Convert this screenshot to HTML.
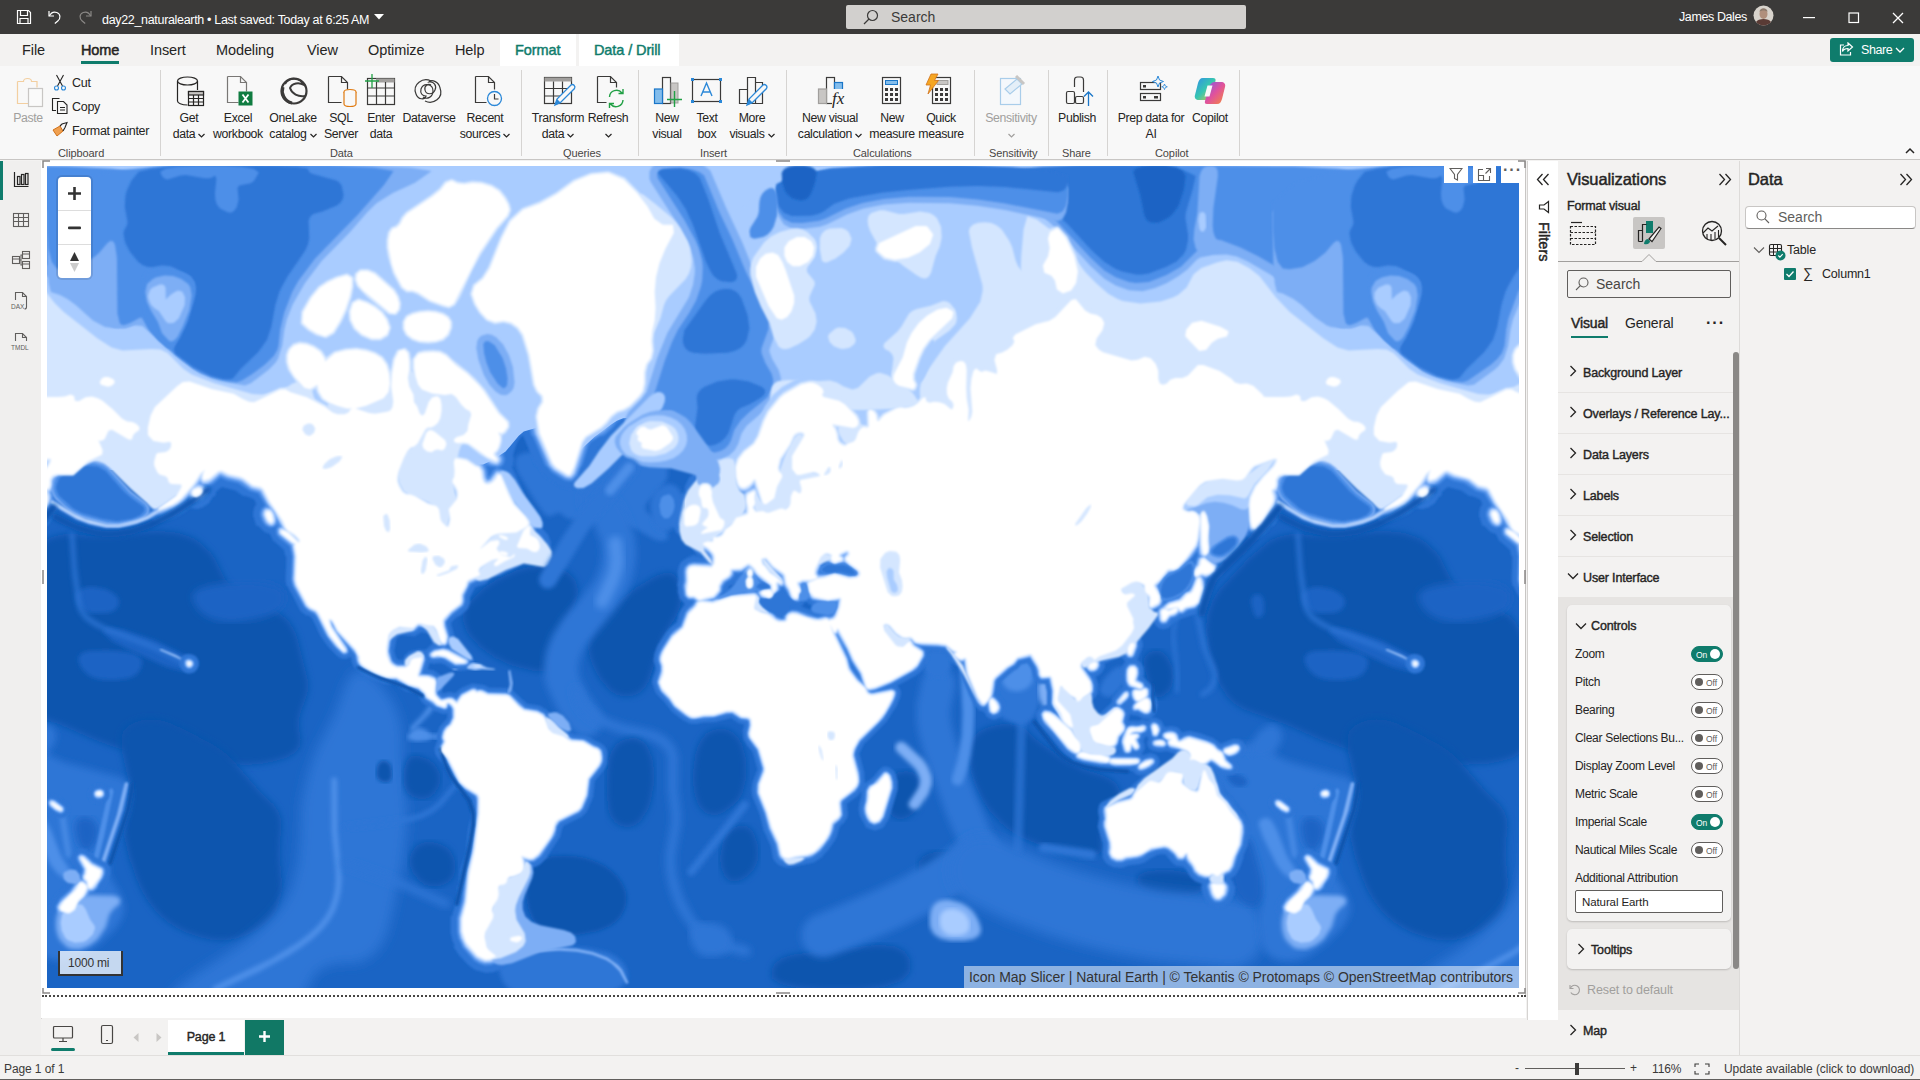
<!DOCTYPE html>
<html lang="en">
<head>
<meta charset="utf-8">
<title>day22_naturalearth</title>
<style>
*{box-sizing:border-box;margin:0;padding:0}
html,body{width:1920px;height:1080px;overflow:hidden;background:#f3f2f1;font-family:"Liberation Sans",sans-serif;color:#252423}
.abs{position:absolute}
#titlebar{position:absolute;left:0;top:0;width:1920px;height:34px;background:#3b3a39;color:#fff}
#titlebar .t{position:absolute;top:13px;left:102px;font-size:12.5px;letter-spacing:-0.32px;white-space:nowrap}
#searchbox{position:absolute;left:846px;top:5px;width:400px;height:24px;background:#d2d0ce;border-radius:2px;color:#3b3a39}
#searchbox span{position:absolute;left:45px;top:4px;font-size:14px}
#tabs{position:absolute;left:0;top:34px;width:1920px;height:32px;background:#f3f2f1}
#tabs .tab{position:absolute;top:8px;font-size:14.5px;color:#252423;white-space:nowrap;letter-spacing:-0.1px}
#tabs .ctx{color:#0f7c6c;font-weight:normal;-webkit-text-stroke:0.45px #0f7c6c;font-size:14.5px}
#ribbon{position:absolute;left:0;top:66px;width:1920px;height:94px;background:#f8f8f8;border-bottom:1px solid #c8c6c4}
.rb{position:absolute;font-size:12.3px;color:#252423;text-align:center;white-space:nowrap;line-height:16px;letter-spacing:-0.35px;margin-top:1px}
.grp{position:absolute;top:147px;font-size:11px;color:#484644;white-space:nowrap;letter-spacing:-0.1px}
.sep{position:absolute;top:70px;width:1px;height:86px;background:#d6d4d2}
.sm{position:absolute;font-size:12.5px;color:#252423;white-space:nowrap;letter-spacing:-0.3px;margin-top:1px}
#leftnav{position:absolute;left:0;top:161px;width:41px;height:896px;background:#f0efee}
#canvas{position:absolute;left:41px;top:161px;width:1485px;height:857px;background:#fff}
#pagebar{position:absolute;left:41px;top:1019px;width:1485px;height:37px;background:#f3f2f1}
#status{position:absolute;left:0;top:1055px;width:1920px;height:25px;padding-top:1px;background:#f3f2f1;border-top:1px solid #e1dfdd;font-size:12px;color:#3b3a39}
#filters{position:absolute;left:1527px;top:161px;width:31px;height:859px;background:#fff;border-left:1px solid #d6d4d2}
#viz{position:absolute;left:1558px;top:161px;width:182px;height:896px;background:#f3f2f1;border-right:1px solid #dddbd9}
#data{position:absolute;left:1740px;top:161px;width:180px;height:896px;background:#f3f2f1}
.ph{position:absolute;font-size:16.5px;font-weight:normal;-webkit-text-stroke:0.45px #252423;color:#252423;letter-spacing:-0.1px}
.card{position:absolute;left:0;width:175px;height:41px;border-bottom:1px solid #e6e4e2;font-size:12.5px;font-weight:normal;-webkit-text-stroke:0.4px #252423;color:#252423;letter-spacing:-0.15px}
.card span{position:absolute;left:25px;top:14px;white-space:nowrap}
.card svg{position:absolute;left:11px;top:13px}
.row{position:absolute;left:9px;width:150px;font-size:12px;color:#252423;white-space:nowrap;letter-spacing:-0.3px}
.tog{position:absolute;left:124px;width:32px;height:16px;border-radius:8px;font-size:8.5px}
.tog.off{border:1px solid #605e5c;background:#fff;color:#605e5c}
.tog.on{background:#0f7c6c;color:#fff;border:1px solid #0f7c6c}
.tog.off i{position:absolute;left:3px;top:3px;width:8px;height:8px;border-radius:50%;background:#605e5c}
.tog.off b{position:absolute;left:14px;top:2.5px;font-weight:normal}
.tog.on i{position:absolute;right:2px;top:2px;width:10px;height:10px;border-radius:50%;background:#fff}
.tog.on b{position:absolute;left:4px;top:2.5px;font-weight:normal}
</style>
</head>
<body>
<!-- TITLE BAR -->
<div id="titlebar">
 <svg class="abs" style="left:15px;top:8px" width="18" height="18" viewBox="0 0 18 18" fill="none" stroke="#fff" stroke-width="1.2"><path d="M2.5 2.5h11l2 2v11h-13z"/><path d="M5.5 2.5v5h7v-5M5 15.500v-5h8v5"/></svg>
 <svg class="abs" style="left:47px;top:9px" width="16" height="16" viewBox="0 0 16 16" fill="none" stroke="#fff" stroke-width="1.2"><path d="M2 2v5h5"/><path d="M2.300 7c1.500-3 4.500-4.500 7.500-3.500 4 1.500 4 6 1 8.500l-3 2.500"/></svg>
 <svg class="abs" style="left:77px;top:9px" width="16" height="16" viewBox="0 0 16 16" fill="none" stroke="#8a8886" stroke-width="1.2"><path d="M14 2v5h-5"/><path d="M13.700 7c-1.500-3-4.500-4.500-7.500-3.500-4 1.500-4 6-1 8.500l3 2.500"/></svg>
 <div class="t">day22_naturalearth • Last saved: Today at 6:25 AM</div>
 <svg class="abs" style="left:374px;top:14px" width="10" height="6" viewBox="0 0 10 6"><path d="M0 0h10l-5 5.500z" fill="#fff"/></svg>
 <div id="searchbox"><svg class="abs" style="left:17px;top:4px" width="16" height="16" viewBox="0 0 16 16" fill="none" stroke="#3b3a39" stroke-width="1.200"><circle cx="9.500" cy="6.500" r="5"/><path d="M6 10l-5 5"/></svg><span>Search</span></div>
 <div class="abs" style="left:1679px;top:10px;font-size:12.5px;white-space:nowrap;letter-spacing:-0.4px">James Dales</div>
 <svg class="abs" style="left:1753px;top:5px" width="21" height="21" viewBox="0 0 21 21"><circle cx="10.500" cy="10.500" r="10" fill="#d8d3cc"/><ellipse cx="10.500" cy="9" rx="4" ry="5" fill="#b08f7c"/><path d="M3 17c2-4 13-4 15 0a10 10 0 0 1-15 0z" fill="#5a3b35"/><path d="M6.500 7c0-5 8-5 8 0-2-2-6-2-8 0z" fill="#8d7a6c"/></svg>
 <svg class="abs" style="left:1803px;top:17px" width="12" height="2"><rect width="12" height="1.200" fill="#fff"/></svg>
 <svg class="abs" style="left:1848px;top:12px" width="12" height="12" viewBox="0 0 12 12" fill="none" stroke="#fff" stroke-width="1.200"><rect x="1" y="1" width="9.500" height="9.500"/></svg>
 <svg class="abs" style="left:1892px;top:12px" width="12" height="12" viewBox="0 0 12 12" fill="none" stroke="#fff" stroke-width="1.300"><path d="M1 1l10 10M11 1l-10 10"/></svg>
</div>
<!-- TABS -->
<div id="tabs">
 <div class="tab" style="left:22px">File</div>
 <div class="tab" style="left:81px;font-weight:normal;-webkit-text-stroke:0.5px #252423;font-size:14.5px">Home</div>
 <div class="abs" style="left:81px;top:27px;width:38px;height:3px;background:#0f7c6c"></div>
 <div class="tab" style="left:150px">Insert</div>
 <div class="tab" style="left:216px">Modeling</div>
 <div class="tab" style="left:307px">View</div>
 <div class="tab" style="left:368px">Optimize</div>
 <div class="tab" style="left:455px">Help</div>
 <div class="abs" style="left:500px;top:0;width:76px;height:32px;background:#fff"></div>
 <div class="abs" style="left:579px;top:0;width:100px;height:32px;background:#fff"></div>
 <div class="tab ctx" style="left:515px">Format</div>
 <div class="tab ctx" style="left:594px">Data / Drill</div>
 <div class="abs" style="left:1830px;top:4px;width:84px;height:24px;background:#0f7c6c;border-radius:3px"></div>
 <svg class="abs" style="left:1838px;top:8px" width="16" height="15" viewBox="0 0 16 15" fill="none" stroke="#fff" stroke-width="1.200"><path d="M6 3H2.500v10h10v-3"/><path d="M10 1l4.500 4-4.500 4V6.500c-3 0-4.500 1-5.500 3 0-3.500 2-6 5.500-6z"/></svg>
 <div class="abs" style="left:1861px;top:9px;font-size:12.5px;color:#fff;letter-spacing:-0.4px">Share</div>
 <svg class="abs" style="left:1895px;top:13px" width="10" height="7" viewBox="0 0 10 7" fill="none" stroke="#fff" stroke-width="1.300"><path d="M1 1l4 4 4-4"/></svg>
</div>
<!-- RIBBON -->
<div id="ribbon"></div>
<!-- clipboard -->
<svg class="abs" style="left:15px;top:75px" width="30" height="36" viewBox="0 0 30 36" fill="none"><path d="M2.500 6.500h6c0-4 8-4 8 0h5.500v6M2.500 6.500v22h11" stroke="#f3cfa0" stroke-width="1.200"/><rect x="13.500" y="13.500" width="14" height="18" stroke="#c8c6c4" stroke-width="1.200" fill="#fafafa"/></svg>
<div class="rb" style="left:8px;top:109px;width:40px;color:#a19f9d">Paste</div>
<svg class="abs" style="left:53px;top:74px" width="14" height="17" viewBox="0 0 14 17" fill="none"><path d="M3.500 1l6 11M10.500 1l-6 11" stroke="#252423" stroke-width="1.100"/><circle cx="3.500" cy="14" r="2" stroke="#2b88d8" stroke-width="1.100"/><circle cx="10.500" cy="14" r="2" stroke="#2b88d8" stroke-width="1.100"/></svg>
<div class="sm" style="left:72px;top:75px">Cut</div>
<svg class="abs" style="left:51px;top:97px" width="18" height="18" viewBox="0 0 18 18" fill="none" stroke="#252423" stroke-width="1.100"><path d="M5 13.500H1.500v-12h7"/><path d="M6.500 4.500h6l3.500 3.500v8.500h-9.500z"/><path d="M9 10.500h5M9 13h5"/></svg>
<div class="sm" style="left:72px;top:99px">Copy</div>
<svg class="abs" style="left:51px;top:121px" width="18" height="18" viewBox="0 0 18 18" fill="none"><path d="M2 9l7-4 3 5-6 5z" fill="#f0a050" stroke="#d0711a" stroke-width="1"/><path d="M9 5l2-2 5-1.500-2 5-2 3.500" stroke="#252423" stroke-width="1.100"/></svg>
<div class="sm" style="left:72px;top:123px">Format painter</div>
<div class="grp" style="left:58px">Clipboard</div>
<div class="sep" style="left:160px"></div>
<!-- data group -->
<svg class="abs" style="left:175px;top:75px" width="32" height="36" viewBox="0 0 32 36" fill="none" stroke="#252423" stroke-width="1.200"><ellipse cx="12.500" cy="6" rx="10" ry="4"/><path d="M2.500 6v20c0 2 4 4 10 4M22.500 6v9"/><rect x="13.500" y="16.500" width="15" height="14" fill="#f8f8f8"/><rect x="13.500" y="16.500" width="15" height="3.500" fill="#c8c6c4"/><path d="M13.500 23.500h15M13.500 27h15M18.500 20v10.500M23.500 20v10.500"/></svg>
<div class="rb" style="left:159px;top:109px;width:60px">Get<br>data <svg width="7" height="5" viewBox="0 0 7 5" fill="none" stroke="#252423" stroke-width="1.200"><path d="M.500 1l3 3 3-3"/></svg></div>
<svg class="abs" style="left:226px;top:75px" width="34" height="36" viewBox="0 0 34 36" fill="none"><path d="M1.500 1.500h13l6 6v9M1.500 1.500v26h11" stroke="#797775" stroke-width="1.200"/><path d="M14.500 1.500v6h6" stroke="#797775" stroke-width="1.200"/><rect x="12.500" y="16.500" width="14" height="14" fill="#107c41"/><path d="M16.500 19.500l6 8M22.500 19.500l-6 8" stroke="#fff" stroke-width="1.800"/></svg>
<div class="rb" style="left:208px;top:109px;width:60px">Excel<br>workbook</div>
<svg class="abs" style="left:279px;top:75px" width="30" height="32" viewBox="0 0 30 32" fill="none"><circle cx="15" cy="16" r="12.500" stroke="#3b3a39" stroke-width="2.200"/><path d="M6 9c4-7 15-7 19 1-5-3-12-2-14 3 2 6 8 9 15 8" stroke="#3b3a39" stroke-width="2"/><path d="M4 12c-2 6 1 14 9 16" stroke="#3b3a39" stroke-width="3"/></svg>
<div class="rb" style="left:263px;top:109px;width:60px">OneLake<br>catalog <svg width="7" height="5" viewBox="0 0 7 5" fill="none" stroke="#252423" stroke-width="1.200"><path d="M.500 1l3 3 3-3"/></svg></div>
<svg class="abs" style="left:327px;top:75px" width="32" height="36" viewBox="0 0 32 36" fill="none"><path d="M1.500 1.500h13l6 6v7M1.500 1.500v26h13M14.500 1.500v6h6" stroke="#3b3a39" stroke-width="1.200"/><ellipse cx="23" cy="17" rx="6" ry="2.500" stroke="#e07a10" stroke-width="1.200" fill="#f8f8f8"/><path d="M17 17v12c0 1.500 2.500 2.500 6 2.500s6-1 6-2.500V17" stroke="#e07a10" stroke-width="1.200" fill="#f8f8f8"/></svg>
<div class="rb" style="left:311px;top:109px;width:60px">SQL<br>Server</div>
<svg class="abs" style="left:364px;top:73px" width="34" height="38" viewBox="0 0 34 38" fill="none"><rect x="3.500" y="5.500" width="27" height="26" stroke="#3b3a39" stroke-width="1.200"/><rect x="12" y="5.500" width="18.500" height="4" fill="#a19f9d"/><path d="M3.500 15h27M3.500 23h27M12.500 9v22M21.500 9v22" stroke="#3b3a39" stroke-width="1.200"/><path d="M8 1v14M1 8h14" stroke="#21a045" stroke-width="1.300"/></svg>
<div class="rb" style="left:351px;top:109px;width:60px">Enter<br>data</div>
<svg class="abs" style="left:412px;top:77px" width="32" height="28" viewBox="0 0 32 28" fill="none" stroke="#3b3a39" stroke-width="1.200"><path d="M19 4c-8-4-19 3-15 13 2 6 9 6 10 2-4 0-6-3-5-7 2-6 12-6 12 2 0 6-6 9-10 6"/><path d="M13 24c8 4 19-3 15-13-1-6-8-9-11-6 5-1 8 4 6 8-2 5-9 5-10 0-1-4 3-7 6-5"/></svg>
<div class="rb" style="left:399px;top:109px;width:60px">Dataverse</div>
<svg class="abs" style="left:474px;top:75px" width="32" height="36" viewBox="0 0 32 36" fill="none"><path d="M1.500 1.500h13l6 6v7M1.500 1.500v26h11M14.500 1.500v6h6" stroke="#3b3a39" stroke-width="1.200"/><circle cx="20.500" cy="23.500" r="7" stroke="#2b88d8" stroke-width="1.300" fill="#f8f8f8"/><path d="M20.500 19v5h4" stroke="#3b3a39" stroke-width="1.200"/></svg>
<div class="rb" style="left:455px;top:109px;width:60px">Recent<br>sources <svg width="7" height="5" viewBox="0 0 7 5" fill="none" stroke="#252423" stroke-width="1.200"><path d="M.500 1l3 3 3-3"/></svg></div>
<div class="grp" style="left:330px">Data</div>
<div class="sep" style="left:521px"></div>
<!-- queries -->
<svg class="abs" style="left:543px;top:75px" width="34" height="36" viewBox="0 0 34 36" fill="none"><rect x="1.500" y="2.500" width="27" height="26" stroke="#3b3a39" stroke-width="1.200"/><rect x="1.500" y="2.500" width="27" height="4" fill="#a19f9d"/><path d="M1.500 13.500h27M1.500 21h16M10.500 6.500v22M19.500 6.500v14" stroke="#3b3a39" stroke-width="1.200"/><path d="M12 30l2-6 14-14c2-1.500 5 1 3.500 3.500l-14 14z" fill="#f8f8f8" stroke="#2b88d8" stroke-width="1.300"/><path d="M12 30l2-6 4 4z" fill="#2b88d8"/></svg>
<div class="rb" style="left:527px;top:109px;width:62px">Transform<br>data <svg width="7" height="5" viewBox="0 0 7 5" fill="none" stroke="#252423" stroke-width="1.200"><path d="M.500 1l3 3 3-3"/></svg></div>
<svg class="abs" style="left:596px;top:75px" width="32" height="36" viewBox="0 0 32 36" fill="none"><path d="M1.500 1.500h13l6 6v5M1.500 1.500v26h9M14.500 1.500v6h6" stroke="#3b3a39" stroke-width="1.200"/><path d="M13.500 22a7 7 0 0 1 12.500-4M27 14v4.500h-4.500M27 25a7 7 0 0 1-12.500 4M13.500 33v-4.500h4.500" stroke="#21a045" stroke-width="1.400"/></svg>
<div class="rb" style="left:578px;top:109px;width:60px">Refresh<br><svg width="7" height="5" viewBox="0 0 7 5" fill="none" stroke="#252423" stroke-width="1.200"><path d="M.500 1l3 3 3-3"/></svg></div>
<div class="grp" style="left:563px">Queries</div>
<div class="sep" style="left:638px"></div>
<!-- insert -->
<svg class="abs" style="left:652px;top:75px" width="32" height="36" viewBox="0 0 32 36" fill="none"><rect x="10.500" y="2.500" width="8" height="26" stroke="#3b3a39" stroke-width="1.200" fill="#f8f8f8"/><rect x="2.500" y="14" width="8" height="14.500" fill="#83bdec" stroke="#1a76c8" stroke-width="1.200"/><rect x="19" y="8" width="7" height="20" fill="#c8c6c4" stroke="#a19f9d"/><path d="M22.500 16v16M15 24.500h15" stroke="#21a045" stroke-width="1.400"/></svg>
<div class="rb" style="left:637px;top:109px;width:60px">New<br>visual</div>
<svg class="abs" style="left:690px;top:76px" width="34" height="32" viewBox="0 0 34 32" fill="none"><rect x="2.500" y="3.500" width="28" height="22" stroke="#3b3a39" stroke-width="1.200"/><path d="M11 20l5.500-13 5.500 13M13 16h7" stroke="#2b88d8" stroke-width="1.400"/><g fill="#2b88d8"><rect x="1" y="2" width="3" height="3"/><rect x="29" y="2" width="3" height="3"/><rect x="1" y="24" width="3" height="3"/><rect x="29" y="24" width="3" height="3"/></g></svg>
<div class="rb" style="left:677px;top:109px;width:60px">Text<br>box</div>
<svg class="abs" style="left:737px;top:75px" width="34" height="36" viewBox="0 0 34 36" fill="none"><path d="M2.500 28.500v-14h8v-12h8v5h7v21z M10.500 14.500v14M18.500 7.500v21" stroke="#3b3a39" stroke-width="1.200"/><path d="M10 30l2-6 14-14c2-1.500 5 1 3.500 3.500l-14 14z" fill="#f8f8f8" stroke="#2b88d8" stroke-width="1.300"/><path d="M10 30l2-6 4 4z" fill="#2b88d8"/></svg>
<div class="rb" style="left:722px;top:109px;width:60px">More<br>visuals <svg width="7" height="5" viewBox="0 0 7 5" fill="none" stroke="#252423" stroke-width="1.200"><path d="M.500 1l3 3 3-3"/></svg></div>
<div class="grp" style="left:700px">Insert</div>
<div class="sep" style="left:786px"></div>
<!-- calculations -->
<svg class="abs" style="left:815px;top:75px" width="34" height="36" viewBox="0 0 34 36" fill="none"><rect x="11.500" y="2.500" width="8" height="26" stroke="#3b3a39" stroke-width="1.200" fill="#f8f8f8"/><rect x="3.500" y="14" width="8" height="14.500" fill="#c8c6c4" stroke="#a19f9d" stroke-width="1.200"/><rect x="19.500" y="7.500" width="8" height="12" fill="#83bdec" stroke="#1a76c8" stroke-width="1.200"/><rect x="17" y="14" width="16" height="18" fill="#f8f8f8"/><text x="17" y="29" font-family="Liberation Serif,serif" font-style="italic" font-size="17" fill="#252423">fx</text></svg>
<div class="rb" style="left:790px;top:109px;width:80px">New visual<br>calculation <svg width="7" height="5" viewBox="0 0 7 5" fill="none" stroke="#252423" stroke-width="1.200"><path d="M.500 1l3 3 3-3"/></svg></div>
<svg class="abs" style="left:880px;top:75px" width="24" height="36" viewBox="0 0 24 36" fill="none"><rect x="2.500" y="2.500" width="18" height="26" stroke="#3b3a39" stroke-width="1.200"/><rect x="5.500" y="5.500" width="12" height="4" fill="#83bdec" stroke="#1a76c8"/><g fill="#3b3a39"><rect x="5" y="13" width="3" height="3"/><rect x="10" y="13" width="3" height="3"/><rect x="15" y="13" width="3" height="3"/><rect x="5" y="18" width="3" height="3"/><rect x="10" y="18" width="3" height="3"/><rect x="15" y="18" width="3" height="3"/><rect x="5" y="23" width="3" height="3"/><rect x="10" y="23" width="3" height="3"/><rect x="15" y="23" width="3" height="3"/></g></svg>
<div class="rb" style="left:862px;top:109px;width:60px">New<br>measure</div>
<svg class="abs" style="left:923px;top:73px" width="32" height="38" viewBox="0 0 32 38" fill="none"><rect x="9.500" y="4.500" width="18" height="26" stroke="#3b3a39" stroke-width="1.200"/><rect x="14" y="7.500" width="11" height="4" fill="#c8c6c4" stroke="#a19f9d"/><g fill="#3b3a39"><rect x="12" y="15" width="3" height="3"/><rect x="17" y="15" width="3" height="3"/><rect x="22" y="15" width="3" height="3"/><rect x="12" y="20" width="3" height="3"/><rect x="17" y="20" width="3" height="3"/><rect x="22" y="20" width="3" height="3"/><rect x="12" y="25" width="3" height="3"/><rect x="17" y="25" width="3" height="3"/><rect x="22" y="25" width="3" height="3"/></g><path d="M8 1h7l-3.500 6.500h4L5 21l2.500-9H3z" fill="#f5a623" stroke="#d0711a" stroke-width=".8"/></svg>
<div class="rb" style="left:911px;top:109px;width:60px">Quick<br>measure</div>
<div class="grp" style="left:853px">Calculations</div>
<div class="sep" style="left:974px"></div>
<!-- sensitivity -->
<svg class="abs" style="left:997px;top:75px" width="30" height="34" viewBox="0 0 30 34" fill="none"><rect x="3.500" y="3.500" width="20" height="26" stroke="#a9cdea" stroke-width="1.200" fill="#f4f8fc"/><path d="M8 14l12-10 5 5-12 10z" stroke="#a9cdea" stroke-width="1.200" fill="#e4eff8"/><path d="M19 1l8 8" stroke="#c8c6c4" stroke-width="3"/></svg>
<div class="rb" style="left:981px;top:109px;width:60px;color:#a19f9d">Sensitivity<br><svg width="7" height="5" viewBox="0 0 7 5" fill="none" stroke="#a19f9d" stroke-width="1.200"><path d="M.500 1l3 3 3-3"/></svg></div>
<div class="grp" style="left:989px">Sensitivity</div>
<div class="sep" style="left:1048px"></div>
<!-- share -->
<svg class="abs" style="left:1064px;top:75px" width="32" height="34" viewBox="0 0 32 34" fill="none" stroke="#3b3a39" stroke-width="1.200"><path d="M10.500 12v-7c0-2 1-3 3-3h3c2 0 3 1 3 3v12"/><rect x="2.500" y="16.500" width="8" height="12" rx="1.500"/><rect x="11.500" y="21.500" width="8" height="7" rx="1.500"/><path d="M24.500 31V17M20 21.500l4.500-4.500 4.500 4.500" stroke="#1a76c8" stroke-width="1.300"/></svg>
<div class="rb" style="left:1047px;top:109px;width:60px">Publish</div>
<div class="grp" style="left:1062px">Share</div>
<div class="sep" style="left:1107px"></div>
<!-- copilot -->
<svg class="abs" style="left:1138px;top:75px" width="30" height="30" viewBox="0 0 30 30" fill="none"><rect x="2.500" y="7.500" width="20" height="7" stroke="#3b3a39" stroke-width="1.200"/><rect x="2.500" y="18.500" width="20" height="7" stroke="#3b3a39" stroke-width="1.200"/><rect x="5" y="10" width="3" height="2.500" fill="#3b3a39"/><rect x="5" y="21" width="3" height="2.500" fill="#3b3a39"/><rect x="16" y="21" width="4" height="2.500" fill="#3b3a39"/><path d="M20 1l1.500 4 4 1.500-4 1.500-1.500 4-1.500-4-4-1.500 4-1.500z" fill="#f8f8f8" stroke="#2b88d8" stroke-width="1"/><path d="M26.500 9l.8 2 2 .8-2 .8-.8 2-.8-2-2-.8 2-.8z" stroke="#2b88d8" stroke-width=".8"/></svg>
<div class="rb" style="left:1101px;top:109px;width:100px">Prep data for<br>AI</div>
<svg class="abs" style="left:1193px;top:76px" width="34" height="30" viewBox="0 0 34 30"><defs><linearGradient id="cg1" x1="0" y1="0" x2="1" y2="1"><stop offset="0" stop-color="#2f8fe8"/><stop offset=".5" stop-color="#37c6b0"/><stop offset="1" stop-color="#f4c531"/></linearGradient><linearGradient id="cg2" x1="0" y1="0" x2="1" y2="1"><stop offset="0" stop-color="#7a5bea"/><stop offset=".5" stop-color="#e0529c"/><stop offset="1" stop-color="#f58a3a"/></linearGradient></defs><path d="M10 2h10c2 0 3 1 2.500 3l-4 14c-1 3-3 5-6 5H6c-3 0-5-2-4-5L5 7c1-3 2-5 5-5z" fill="url(#cg1)"/><path d="M14 28h10c3 0 4-2 5-5l3-12c1-3-1-5-4-5h-6c-3 0-5 2-6 5l-4 14c-.5 2 0 3 2 3z" fill="url(#cg2)"/><path d="M14.500 9.500h5l-3 11h-5z" fill="#f8f8f8"/></svg>
<div class="rb" style="left:1180px;top:109px;width:60px">Copilot</div>
<div class="grp" style="left:1155px">Copilot</div>
<div class="sep" style="left:1239px"></div>
<svg class="abs" style="left:1905px;top:147px" width="10" height="7" viewBox="0 0 10 7" fill="none" stroke="#252423" stroke-width="1.500"><path d="M1 6l4-4 4 4"/></svg>
<!-- LEFT NAV -->
<div id="leftnav"></div>
<div class="abs" style="left:41px;top:161px;width:1px;height:896px;background:#d6d4d2"></div>
<div class="abs" style="left:0;top:161px;width:3px;height:39px;background:#0f7c6c"></div>
<svg class="abs" style="left:12px;top:171px" width="18" height="18" viewBox="0 0 18 18" fill="none" stroke="#252423" stroke-width="1.200"><path d="M2.500 1v14.500h14"/><rect x="5.500" y="5.500" width="2.500" height="8"/><rect x="9.500" y="3.500" width="2.500" height="10"/><rect x="13.500" y="2.500" width="2.500" height="11"/></svg>
<svg class="abs" style="left:12px;top:211px" width="18" height="18" viewBox="0 0 18 18" fill="none" stroke="#605e5c" stroke-width="1.100"><rect x="1.500" y="2.500" width="15" height="13"/><path d="M1.500 6.500h15M1.500 10.500h15M6.500 2.500v13M11.500 2.500v13"/></svg>
<svg class="abs" style="left:11px;top:250px" width="20" height="20" viewBox="0 0 20 20" fill="none" stroke="#605e5c" stroke-width="1.100"><rect x="1.500" y="6.500" width="7" height="7"/><rect x="11.500" y="1.500" width="7" height="7"/><rect x="11.500" y="11.500" width="7" height="7"/><path d="M1.500 9h7M11.500 4h7M11.500 14h7M8.500 10h1.500V5h1.500M10 10v5h1.500"/></svg>
<svg class="abs" style="left:10px;top:290px" width="22" height="22" viewBox="0 0 22 22" fill="none"><path d="M5.500 10V2.500h7l4 4V17c0 1-1 2-2 2" stroke="#605e5c" stroke-width="1.100"/><path d="M12.500 2.500v4h4" stroke="#605e5c" stroke-width="1.100"/><text x="1" y="19" font-family="Liberation Sans,sans-serif" font-size="6.500" fill="#605e5c">DAX</text></svg>
<svg class="abs" style="left:10px;top:331px" width="22" height="22" viewBox="0 0 22 22" fill="none"><path d="M5.500 10V2.500h7l4 4V10" stroke="#605e5c" stroke-width="1.100"/><path d="M12.500 2.500v4h4" stroke="#605e5c" stroke-width="1.100"/><text x="1" y="19" font-family="Liberation Sans,sans-serif" font-size="6.500" fill="#605e5c">TMDL</text></svg>
<!-- CANVAS -->
<div id="canvas"></div>
<div class="abs" style="left:1525px;top:161px;width:1px;height:835px;background:#c8c6c4"></div>
<div class="abs" style="left:42px;top:995px;width:1484px;height:0;border-top:2px dotted #484644"></div>
<!-- visual frame handles -->
<svg class="abs" style="left:42px;top:160px" width="1484" height="836" viewBox="0 0 1484 836" fill="none" stroke="#8a8886" stroke-width="1.500"><path d="M1 8V1h7M1476 1h7v7M1 828v5h7M1476 833h7v-5M734 1h14M734 833h14M1 410v14M1483 410v14"/></svg>
<svg class="abs" style="left:47px;top:166px" width="1472" height="822" viewBox="47 166 1472 822">
<defs><filter id="b1" x="-5%" y="-5%" width="110%" height="110%"><feGaussianBlur stdDeviation="0.8"/></filter><filter id="b2" x="-5%" y="-5%" width="110%" height="110%"><feGaussianBlur stdDeviation="2"/></filter><filter id="b3" x="-5%" y="-5%" width="110%" height="110%"><feGaussianBlur stdDeviation="3.5"/></filter><filter id="b4" x="-5%" y="-5%" width="110%" height="110%"><feGaussianBlur stdDeviation="6"/></filter><filter id="b5" x="-5%" y="-5%" width="110%" height="110%"><feGaussianBlur stdDeviation="10"/></filter></defs>
<rect x="47" y="166" width="1472" height="822" fill="#1a64c4"/>
<path d="M17.9,709.4 60.4,724.8 93.4,739.2 114.5,747.3 147.1,756.3 172.0,760.2 216.7,764.1 249.2,764.7 263.3,763.4 275.8,761.1 286.9,757.6 294.8,752.9 299.5,746.9 301.0,739.7 299.3,731.2 298.8,723.0 299.7,715.3 307.3,694.2 308.2,687.2 307.8,680.2 297.1,637.0 294.6,630.8 288.2,620.3 277.5,611.8 253.9,601.7 234.1,589.6 224.8,579.0 215.4,559.2 211.1,553.1 200.1,542.5 193.5,538.3 178.4,532.8 160.3,531.0 149.6,531.3 112.4,535.6 86.8,535.5 74.1,534.1 62.6,534.6 52.4,536.8 43.4,540.8 22.3,558.2 7.0,574.9 7.0,702.5ZM1212.3,600.5 1207.5,614.1 1205.8,629.4 1207.5,646.1 1211.0,662.1 1218.8,683.3 1226.0,695.1 1230.3,700.3 1236.2,705.1 1243.9,709.4 1286.5,724.8 1319.4,739.2 1350.7,750.8 1373.1,756.3 1398.0,760.2 1459.7,764.9 1489.3,763.4 1501.9,761.1 1512.9,757.6 1520.8,752.9 1525.5,746.9 1527.0,739.7 1525.3,731.2 1524.9,723.0 1525.7,715.3 1533.4,694.2 1534.2,687.2 1533.8,680.2 1525.3,643.8 1520.6,630.8 1514.2,620.3 1509.5,615.8 1496.3,608.2 1472.7,598.0 1460.1,589.6 1450.8,579.0 1441.4,559.2 1437.2,553.1 1426.1,542.5 1419.5,538.3 1404.4,532.8 1386.3,531.0 1375.6,531.3 1338.4,535.6 1312.9,535.5 1300.1,534.1 1288.6,534.6 1278.4,536.8 1269.4,540.8 1248.4,558.2 1219.2,589.6Z" fill="#0d55ae" filter="url(#b3)"/>
<path d="M123.3,731.5 121.3,737.2 121.9,751.3 129.4,784.8 129.4,793.3 128.0,801.6 125.3,809.7 123.8,818.3 124.3,837.1 129.0,857.6 136.5,878.8 141.2,889.6 146.8,899.4 153.3,908.2 160.5,916.0 168.7,922.8 177.8,928.5 188.0,933.3 199.1,937.0 211.3,939.7 223.2,940.4 234.7,939.0 245.9,935.6 256.7,930.2 265.5,924.1 272.3,917.4 277.0,909.9 281.4,893.3 282.1,884.5 279.7,856.4 280.4,837.5 281.7,828.0 281.1,819.3 278.4,811.6 273.6,804.6 260.1,791.8 232.3,759.4 224.2,752.3 215.4,746.0 186.9,730.8 168.0,722.3 158.8,720.0 150.0,719.3 141.6,720.3 133.4,723.0 127.4,726.7ZM1349.3,731.5 1347.3,737.2 1347.9,751.3 1355.4,784.8 1355.4,793.3 1354.0,801.6 1351.3,809.7 1349.8,818.3 1350.3,837.1 1355.1,857.6 1362.5,878.8 1367.2,889.6 1372.8,899.4 1379.3,908.2 1386.5,916.0 1394.7,922.8 1403.8,928.5 1414.0,933.3 1425.1,937.0 1437.3,939.7 1449.2,940.4 1460.7,939.0 1471.9,935.6 1482.7,930.2 1491.5,924.1 1498.3,917.4 1503.0,909.9 1505.7,901.8 1508.1,884.5 1505.7,856.4 1506.4,837.5 1507.8,828.0 1507.1,819.3 1504.4,811.6 1499.6,804.6 1486.1,791.8 1458.3,759.4 1450.2,752.3 1441.4,746.0 1413.0,730.8 1394.0,722.3 1384.9,720.0 1376.1,719.3 1367.6,720.3 1359.5,723.0 1353.4,726.7Z" fill="#0d55ae" filter="url(#b3)"/>
<path d="M76.2,593.1 75.4,596.4 76.0,600.4 79.4,607.0 85.4,611.5 89.6,612.9 94.7,613.5 107.3,612.9 112.5,611.4 116.1,609.0 118.3,605.8 119.0,601.8 118.0,598.1 115.3,594.7 110.9,591.7 104.9,589.0 93.3,586.7 87.8,587.0 82.4,588.4 78.6,590.4ZM1302.2,593.1 1301.4,596.4 1302.1,600.4 1305.4,607.0 1311.5,611.5 1315.6,612.9 1320.7,613.5 1333.3,612.9 1338.5,611.4 1342.2,609.0 1344.3,605.8 1345.0,601.8 1344.0,598.1 1341.3,594.7 1337.0,591.7 1330.9,589.0 1319.3,586.7 1313.8,587.0 1308.4,588.4 1304.6,590.4Z" fill="#1a64c4" filter="url(#b2)"/>
<path d="M78.7,656.5 78.4,661.2 81.1,667.2 84.8,672.1 89.5,675.8 95.2,678.3 101.9,679.7 115.3,680.3 128.7,678.3 134.1,676.0 138.1,672.6 140.8,668.2 142.2,662.9 141.2,658.5 137.8,655.2 132.1,652.8 124.0,651.5 106.9,650.3 88.5,651.1 82.1,653.1ZM1304.7,656.5 1304.4,661.2 1307.1,667.2 1310.8,672.1 1315.5,675.8 1321.2,678.3 1327.9,679.7 1341.3,680.3 1354.8,678.3 1360.1,676.0 1364.2,672.6 1366.8,668.2 1368.2,662.9 1367.2,658.5 1363.8,655.2 1358.1,652.8 1350.1,651.5 1332.9,650.3 1314.5,651.1 1308.1,653.1Z" fill="#1a64c4" filter="url(#b2)"/>
<path d="M104.6,628.3 103.2,630.3 104.6,633.7 112.3,640.9 126.7,648.8 165.7,666.6 181.6,670.9 186.8,670.6 190.2,668.6 191.8,666.2 191.8,663.5 190.2,660.5 181.6,653.5 154.9,640.4 124.7,630.3 108.6,627.6ZM1330.6,628.3 1329.2,630.3 1330.6,633.7 1338.3,640.9 1352.7,648.8 1391.7,666.6 1407.6,670.9 1412.8,670.6 1416.2,668.6 1417.9,666.2 1417.9,663.5 1416.2,660.5 1407.6,653.5 1380.9,640.4 1350.7,630.3 1334.6,627.6Z" fill="#1a64c4" filter="url(#b2)"/>
<path d="M25.2,600.1 25.4,604.8 28.4,615.0 30.4,617.4 32.7,617.9 35.4,616.6 37.3,614.2 38.3,610.9 37.8,601.1 36.4,597.3 34.4,594.9 31.7,594.1 28.4,594.7 26.2,596.8ZM1251.2,600.1 1251.4,604.8 1254.4,615.0 1256.4,617.4 1258.8,617.9 1261.4,616.6 1263.3,614.2 1264.3,610.9 1263.8,601.1 1262.4,597.3 1260.4,594.9 1257.7,594.1 1254.4,594.7 1252.2,596.8Z" fill="#1a64c4" filter="url(#b2)"/>
<path d="M197.1,589.7 192.4,595.1 193.7,601.8 196.8,607.7 201.5,612.7 207.8,616.9 215.9,620.2 225.6,621.9 237.0,621.9 250.1,620.2 264.9,616.9 275.6,612.4 282.3,606.7 285.0,599.8 283.7,591.7 277.0,586.0 264.9,582.7 247.4,581.6 224.6,583.0 207.8,585.7ZM1423.1,589.7 1418.4,595.1 1419.7,601.8 1422.8,607.7 1427.5,612.7 1433.8,616.9 1441.9,620.2 1451.6,621.9 1463.0,621.9 1476.1,620.2 1490.9,616.9 1501.6,612.4 1508.4,606.7 1511.0,599.8 1509.7,591.7 1503.0,586.0 1490.9,582.7 1473.5,581.6 1450.6,583.0 1433.8,585.7Z" fill="#1a64c4" filter="url(#b3)"/>
<path d="M368.2,958.6 378.4,949.5 386.1,935.7 391.2,917.4 402.7,863.7 406.7,829.7 407.2,814.3 402.7,760.6 402.3,736.3 401.0,725.2 398.4,714.9 394.6,705.4 389.5,696.8 378.7,682.7 366.9,672.7 361.6,670.5 356.9,670.5 352.9,672.7 346.3,682.7 334.8,714.0 316.7,749.1 308.6,770.9 302.7,795.9 301.0,809.3 300.1,837.7 297.6,864.1 291.6,887.2 286.7,897.8 280.3,907.9 272.4,917.5 263.1,926.5 242.4,943.3 196.0,973.8 173.7,990.4 170.7,997.6 175.8,1003.7 189.0,1008.6 210.3,1012.4 230.1,1014.2 248.4,1014.2 265.2,1012.4 280.5,1008.6 292.9,1003.3 302.2,996.5 308.6,988.1 312.0,978.1 318.4,970.7 327.8,965.7 340.1,963.2 355.5,963.2ZM1559.0,718.1 1542.7,749.1 1534.6,770.9 1531.2,783.1 1527.0,809.3 1526.1,837.7 1523.6,864.1 1517.6,887.2 1512.7,897.8 1506.3,907.9 1498.5,917.5 1479.1,935.1 1457.2,951.0 1422.0,973.8 1399.7,990.4 1396.7,997.6 1401.8,1003.7 1415.0,1008.6 1436.3,1012.4 1456.1,1014.2 1474.4,1014.2 1491.2,1012.4 1506.5,1008.6 1518.9,1003.3 1528.3,996.5 1534.6,988.1 1538.0,978.1 1544.4,970.7 1553.8,965.7 1559.0,964.6Z" fill="#2e76d6" filter="url(#b4)"/>
<path d="M1557.6,831.1 1559.0,849.5 1559.0,777.4 1557.2,780.2ZM331.6,831.2 335.4,868.3 335.8,879.0 335.0,889.2 333.0,899.0 329.7,908.2 324.7,917.1 317.7,925.7 308.8,934.1 298.0,942.3 271.6,958.4 213.4,986.4 212.0,988.8 213.2,991.3 216.2,991.7 258.9,971.8 288.6,955.5 301.3,947.2 312.6,938.8 322.0,929.9 329.6,920.5 335.1,910.9 338.8,900.4 341.0,889.9 341.8,879.0 337.6,830.8 337.2,779.9 336.3,778.0 334.5,777.2 332.3,777.8 331.2,779.9ZM1550.7,917.1 1543.7,925.7 1534.8,934.1 1511.6,950.4 1482.2,966.4 1439.5,986.4 1438.1,988.2 1438.4,990.5 1440.0,991.8 1442.0,991.8 1484.9,971.8 1514.6,955.5 1538.6,938.8 1548.3,929.6 1555.6,920.5 1559.0,914.6 1559.0,898.9 1555.7,908.2Z" fill="#4e8fe8" filter="url(#b2)"/>
<path d="M341.7,866.6 400.3,887.8 445.3,907.7 448.3,907.5 450.3,905.2 450.3,902.5 448.6,900.5 403.3,880.4 345.7,859.8 343.3,859.7 341.4,860.9 340.4,863.8Z" fill="#2e76d6" filter="url(#b3)"/>
<path d="M455.4,781.6 438.0,802.2 430.1,808.5 420.7,813.3 409.8,816.6 343.9,825.1 342.2,826.4 342.1,828.5 344.4,830.0 375.6,826.5 410.7,821.5 422.6,817.9 432.8,812.7 441.5,805.8 458.8,785.1 458.9,782.3 457.3,781.2Z" fill="#2e76d6" filter="url(#b2)"/>
<path d="M407.2,736.8 407.6,738.7 409.7,740.1 417.3,741.4 427.8,740.1 429.9,738.8 430.8,737.1 430.4,735.0 426.8,730.4 419.7,727.5 414.3,729.2 408.5,734.3Z" fill="#4e8fe8" filter="url(#b2)"/>
<path d="M413.0,731.0 430.8,712.5 435.2,705.6 434.3,702.6 431.2,702.9 422.1,715.2 410.6,727.0 410.0,729.1 411.1,730.7Z" fill="#4e8fe8" filter="url(#b2)"/>
<path d="M414.6,737.5 439.8,739.6 441.6,738.8 442.2,737.0 441.6,735.5 439.9,734.6 415.8,732.9 413.8,734.1 413.5,736.0Z" fill="#4e8fe8" filter="url(#b2)"/>
<path d="M410.6,756.4 406.7,760.7 404.4,768.2 403.6,778.6 404.6,786.9 407.6,793.1 412.5,797.0 419.3,798.8 425.3,798.8 430.4,797.1 434.6,793.5 438.0,788.2 440.0,782.9 440.4,777.6 439.3,772.3 436.8,767.1 433.1,762.8 428.5,759.3 415.9,755.0Z" fill="#0d55ae" filter="url(#b3)"/>
<path d="M380.8,761.3 378.7,763.4 377.2,767.1 376.3,772.3 376.7,776.5 378.4,779.5 381.4,781.5 385.7,782.4 388.9,781.7 391.0,779.5 392.1,775.8 391.2,766.5 389.5,763.4 387.0,761.5 383.5,760.6Z" fill="#0d55ae" filter="url(#b2)"/>
<path d="M424.8,842.2 418.9,844.2 414.2,848.3 410.8,854.4 409.5,860.6 410.4,867.0 413.3,873.4 418.5,880.0 424.2,884.4 430.6,886.5 437.6,886.5 445.3,884.2 450.8,880.4 454.2,875.1 455.5,868.2 454.6,859.8 451.9,852.9 447.2,847.7 440.6,844.1 432.1,842.1Z" fill="#0d55ae" filter="url(#b3)"/>
<path d="M519.9,454.3 517.0,456.4 515.4,459.2 515.1,462.6 515.4,466.1 518.1,473.6 535.6,502.0 544.1,513.6 546.8,515.6 549.5,516.3 552.2,515.6 557.6,512.7 560.2,513.1 565.6,517.3 569.6,519.1 575.0,520.1 597.8,519.6 613.9,521.6 622.0,523.6 636.6,529.2 654.6,539.4 659.3,540.8 663.3,540.8 666.6,539.4 668.2,537.2 667.8,534.2 665.6,530.4 654.1,517.8 647.2,511.9 645.5,509.0 645.5,506.0 647.2,502.8 660.6,488.4 666.3,480.2 667.6,475.8 667.3,466.6 665.5,463.2 662.4,461.2 658.2,460.5 647.7,461.2 637.8,459.2 633.1,457.2 625.7,451.7 621.0,444.1 617.6,441.7 612.9,441.1 606.9,442.1 599.5,444.8 593.0,448.4 587.5,452.9 582.9,458.4 575.3,469.9 571.3,473.7 567.1,476.3 562.8,477.7 558.3,476.8 553.8,473.8 549.2,468.6 544.5,461.2 539.6,455.9 534.6,452.7 529.4,451.7Z" fill="#2e76d6" filter="url(#b2)"/>
<path d="M482.7,588.4 467.8,603.5 463.4,611.9 463.1,621.0 466.8,631.4 470.2,636.8 480.3,647.5 494.3,657.6 510.2,665.0 519.0,667.6 534.4,671.0 547.1,671.7 551.8,670.0 555.2,666.6 557.2,661.6 560.7,641.5 576.3,601.2 577.7,594.8 577.7,588.8 576.3,583.1 573.7,577.7 569.3,573.3 563.3,570.0 555.5,567.6 546.1,566.3 536.6,566.3 526.8,567.6 516.9,570.3 497.8,578.7Z" fill="#0d55ae" filter="url(#b3)"/>
<path d="M599.8,616.6 592.5,628.0 589.8,634.8 588.4,641.8 588.4,649.2 589.8,656.9 592.5,665.0 599.8,679.1 609.9,690.5 615.6,694.2 621.7,696.2 628.0,696.5 634.8,695.2 640.5,692.2 645.2,687.5 648.9,681.1 663.1,637.8 676.9,614.9 679.2,608.9 680.7,602.5 681.2,589.8 678.4,579.7 675.7,575.7 672.0,573.3 667.3,572.7 661.6,573.7 654.9,576.3 634.8,588.4 604.5,611.9Z" fill="#0d55ae" filter="url(#b3)"/>
<path d="M581.2,507.2 595.2,527.2 601.0,541.9 602.1,552.3 600.7,564.5 596.4,576.2 593.0,582.2 577.1,602.7 563.3,618.3 552.3,635.3 547.4,647.4 545.0,657.8 544.1,666.8 544.6,676.9 546.7,686.7 557.1,709.1 573.2,731.5 578.6,735.4 585.0,737.0 591.6,736.0 598.4,731.4 601.8,725.7 602.7,719.1 600.3,711.2 586.6,692.1 579.2,676.8 578.1,667.8 580.1,656.8 585.8,645.2 615.3,609.2 626.3,592.4 630.5,583.0 633.6,573.1 635.4,563.0 636.1,551.7 634.4,535.3 628.3,517.4 620.2,503.0 606.5,486.1 600.5,483.3 593.9,483.0 587.7,485.3 582.8,489.8 580.0,495.8 579.7,502.4Z" fill="#2e76d6" filter="url(#b3)"/>
<path d="M608.4,541.4 609.9,559.7 608.1,572.0 595.0,600.7 596.1,605.9 600.7,608.8 605.3,607.9 608.1,605.0 618.5,584.1 623.4,567.6 623.9,558.9 622.1,541.4 620.7,538.3 616.0,535.8 610.8,537.4Z" fill="#4e8fe8" filter="url(#b3)"/>
<path d="M571.0,691.4 575.6,705.8 579.8,712.0 585.7,717.4 593.3,722.4 602.2,726.8 620.8,733.6 649.5,739.9 656.0,742.6 664.3,749.1 666.7,753.2 668.1,758.1 667.8,788.8 671.2,815.7 670.8,824.6 665.5,854.1 665.5,865.9 666.9,877.2 669.4,888.4 673.4,900.0 678.3,910.5 684.4,920.5 691.4,929.8 700.0,938.1 708.8,944.2 719.0,948.9 745.4,956.3 749.1,955.4 751.2,951.2 748.9,947.1 722.4,939.5 713.8,935.5 706.0,930.1 698.9,923.2 692.5,914.7 682.6,896.0 676.7,875.2 675.5,865.0 675.5,855.1 680.7,825.8 681.2,815.3 677.8,788.1 678.0,756.4 676.0,749.5 672.4,743.2 666.8,737.6 660.6,733.7 653.0,730.6 623.7,724.0 614.7,721.1 598.1,713.6 587.4,705.4 584.7,701.5 580.5,688.8 578.2,686.4 574.4,686.1 571.7,688.2Z" fill="#2e76d6" filter="url(#b3)"/>
<path d="M616.3,744.3 611.6,751.0 608.5,760.1 607.2,771.5 606.5,792.3 608.5,810.4 611.1,817.3 614.8,822.3 619.6,825.5 625.7,826.9 631.2,826.5 636.2,824.5 640.8,820.8 648.2,808.9 650.8,801.2 654.2,782.2 653.4,763.6 651.2,755.0 647.8,747.0 643.3,741.5 637.6,738.4 630.7,737.9 622.6,739.9Z" fill="#0d55ae" filter="url(#b3)"/>
<path d="M706.2,733.6 701.5,738.9 697.8,746.3 695.1,755.7 692.8,774.5 693.1,783.9 694.5,793.3 696.7,801.0 699.7,807.1 703.5,811.4 708.2,814.1 713.3,815.1 718.6,814.5 724.3,812.1 735.4,803.6 739.5,798.5 742.5,793.0 745.8,780.4 746.5,773.3 745.8,757.7 742.0,744.1 738.8,738.6 734.8,733.9 730.1,730.7 724.7,729.0 718.6,728.9 711.9,730.2Z" fill="#0d55ae" filter="url(#b3)"/>
<path d="M533.4,863.3 528.0,871.7 525.6,883.3 526.3,898.0 528.7,910.1 532.7,919.5 538.4,926.2 545.8,930.3 553.7,933.1 562.1,934.8 571.0,935.3 580.3,934.6 597.1,931.3 604.5,928.6 611.2,925.2 616.8,921.0 621.1,916.0 624.3,910.1 626.3,903.4 626.7,896.7 625.3,890.0 622.3,883.3 617.6,876.6 611.6,870.7 604.2,865.6 595.5,861.5 585.4,858.1 575.0,856.1 564.2,855.4 553.2,856.1 541.7,858.1Z" fill="#0d55ae" filter="url(#b2)"/>
<path d="M730.1,829.9 726.0,834.6 723.0,841.0 720.2,856.6 720.5,863.6 722.0,870.2 724.7,876.2 728.2,880.1 732.6,881.8 737.8,881.3 743.8,878.6 748.9,875.0 752.9,870.7 755.9,865.5 757.9,859.4 758.4,846.9 754.2,833.6 750.7,828.9 746.3,826.2 741.1,825.5 735.1,826.9Z" fill="#0d55ae" filter="url(#b3)"/>
<path d="M781.7,958.3 775.0,963.3 771.7,969.9 771.7,977.9 780.3,984.0 797.6,988.0 823.5,990.0 858.1,990.0 884.0,987.0 901.3,980.9 910.0,971.9 910.0,959.8 904.7,951.2 894.1,946.2 878.2,944.7 837.9,948.7 791.8,954.8Z" fill="#0d55ae" filter="url(#b3)"/>
<path d="M742.2,801.7 687.8,869.7 687.2,872.7 688.9,875.2 691.9,875.8 694.2,874.4 747.9,807.2 748.8,804.7 747.9,802.2 745.2,800.7Z" fill="#2e76d6" filter="url(#b2)"/>
<path d="M691.5,926.6 689.4,931.3 689.8,937.6 692.5,945.7 696.5,951.6 701.9,955.3 708.6,956.8 716.6,956.1 723.0,954.3 727.7,951.2 730.7,947.0 732.1,941.7 731.7,936.8 729.7,932.4 726.0,928.6 720.7,925.2 714.9,923.0 702.5,922.2 695.8,923.5Z" fill="#2e76d6" filter="url(#b3)"/>
<path d="M501.5,958.0 498.9,963.9 499.3,971.7 502.7,981.4 508.9,988.8 517.9,994.1 529.6,997.2 558.9,998.1 590.0,995.5 606.2,992.9 617.9,988.9 625.1,983.6 627.9,977.0 626.2,969.1 622.4,962.4 616.4,957.0 608.3,952.8 587.0,948.0 562.3,946.7 536.4,948.5 507.0,953.9Z" fill="#2e76d6" filter="url(#b2)"/>
<path d="M521.3,952.8 559.8,950.7 576.6,951.7 592.2,954.8 605.9,960.1 611.5,963.4 619.4,971.2 625.9,983.2 627.3,983.7 628.5,982.7 622.0,969.6 618.0,964.9 607.4,957.5 593.0,952.0 577.1,948.8 559.8,947.7 542.7,948.0 521.3,949.8 520.0,951.2Z" fill="#7daef5" filter="url(#b1)"/>
<path d="M979.2,731.6 973.2,737.7 969.8,745.4 969.2,754.8 971.3,773.6 974.2,783.0 982.9,801.1 988.3,809.2 1001.0,823.3 1007.8,829.0 1021.2,837.4 1058.1,852.5 1066.3,854.8 1074.7,856.2 1092.0,855.8 1098.2,854.0 1101.9,851.0 1103.1,846.8 1101.7,841.4 1102.1,835.7 1104.1,829.6 1113.2,816.6 1117.0,809.8 1119.4,803.1 1120.2,796.4 1119.5,789.7 1116.5,784.0 1111.1,779.3 1103.4,775.6 1083.3,769.2 1063.1,758.8 1036.5,739.7 1024.5,728.6 1017.7,725.3 1009.3,723.9 999.4,724.6 988.0,727.3Z" fill="#0d55ae" filter="url(#b3)"/>
<path d="M893.0,775.6 888.9,781.0 886.6,788.4 885.9,797.8 886.6,805.5 888.6,811.5 892.0,815.9 896.7,818.6 901.5,819.2 906.6,817.9 911.8,814.5 917.1,809.2 920.7,803.1 922.3,796.4 922.2,789.0 920.2,781.0 916.8,775.3 912.1,771.9 906.1,770.9 898.7,772.3Z" fill="#0d55ae" filter="url(#b3)"/>
<path d="M923.2,856.3 919.1,862.0 918.5,869.9 921.2,880.0 925.5,887.7 931.6,893.1 939.3,896.1 948.7,896.8 956.7,895.6 963.5,892.6 968.8,887.7 972.9,881.0 974.5,874.6 973.9,868.6 970.8,862.9 965.5,857.5 958.8,853.8 950.7,851.8 941.3,851.5 930.6,852.8Z" fill="#0d55ae" filter="url(#b3)"/>
<path d="M1140.3,874.0 1137.0,877.3 1137.0,881.7 1140.3,887.0 1146.2,891.2 1154.6,894.3 1165.5,896.1 1178.9,896.8 1189.5,896.1 1197.2,894.1 1202.1,890.7 1204.1,886.0 1203.5,881.8 1200.1,878.2 1194.1,875.0 1185.3,872.3 1176.3,870.6 1157.1,870.3 1147.1,871.6Z" fill="#0d55ae" filter="url(#b3)"/>
<path d="M922.4,677.8 916.7,704.5 916.4,718.2 918.6,733.6 922.6,748.5 945.9,813.8 962.7,852.3 969.3,879.0 972.3,883.0 977.8,886.6 984.3,887.9 989.2,887.2 993.7,885.1 998.4,880.4 1000.9,874.2 1000.9,867.6 994.9,841.3 974.8,794.1 954.9,737.6 951.8,725.9 950.4,716.2 950.6,708.4 955.5,684.9 954.4,676.7 951.9,672.4 946.8,668.1 940.5,666.1 933.9,666.6 929.4,668.7 924.6,673.3Z" fill="#2e76d6" filter="url(#b3)"/>
<path d="M970.0,834.7 927.3,863.0 901.6,877.7 872.2,891.6 811.1,916.9 805.0,922.9 801.6,930.8 801.5,939.4 804.7,947.4 809.0,952.2 812.5,954.7 818.6,956.9 825.0,957.3 831.3,955.8 865.1,942.3 901.3,926.8 932.1,911.3 967.2,889.7 991.5,872.8 996.2,868.4 1000.1,860.8 1000.7,852.2 998.1,844.0 992.5,837.5 984.8,833.6 976.3,833.0Z" fill="#2e76d6" filter="url(#b3)"/>
<path d="M966.4,901.0 1007.3,919.9 1046.5,934.5 1077.8,944.0 1112.0,952.6 1152.7,959.9 1226.6,967.5 1233.5,967.5 1240.2,966.2 1246.6,963.5 1252.3,959.7 1257.1,954.8 1260.9,949.1 1263.5,942.7 1264.8,936.0 1264.8,929.2 1263.4,922.4 1259.0,913.2 1254.6,907.9 1249.3,903.5 1240.0,899.2 1162.0,890.5 1127.7,884.4 1112.0,880.6 1082.5,872.5 1056.6,863.9 1033.8,855.1 995.9,837.9 989.2,836.3 982.4,836.0 975.6,837.0 969.1,839.4 963.3,842.9 958.2,847.6 954.2,853.1 951.2,859.3 949.6,866.0 949.3,872.8 951.4,882.9 954.3,889.1 958.5,894.6ZM7.0,967.5 17.4,965.0 23.5,961.7 31.1,954.8 34.9,949.1 37.5,942.7 38.8,936.0 38.8,929.2 37.4,922.4 34.8,916.1 28.6,907.9 23.3,903.5 17.2,900.3 7.0,897.8Z" fill="#2e76d6" filter="url(#b4)"/>
<path d="M1017.6,700.4 1013.3,849.3 1014.5,852.5 1017.7,853.9 1020.9,852.7 1022.3,850.1 1024.0,802.6 1026.4,701.8 1025.6,699.3 1023.2,697.5 1019.8,697.8Z" fill="#2e76d6" filter="url(#b2)" opacity="0.7"/>
<path d="M960.0,664.4 962.4,713.1 961.5,735.1 957.4,760.5 951.4,779.3 953.0,783.7 957.1,785.6 960.0,785.1 962.6,782.7 967.3,769.9 970.6,755.4 973.5,736.1 974.4,713.1 974.0,700.0 971.4,665.8 970.2,663.2 967.9,661.4 963.3,661.3Z" fill="#4e8fe8" filter="url(#b2)"/>
<path d="M896.3,751.1 914.2,767.7 917.0,771.7 919.9,778.9 919.3,785.4 917.6,789.0 908.5,803.0 908.8,805.9 910.5,808.3 913.1,809.6 916.0,809.6 919.0,807.8 928.3,794.6 931.9,783.9 931.6,776.3 927.5,765.9 923.2,759.8 905.0,742.9 901.2,741.4 896.9,743.0 895.0,747.2Z" fill="#7daef5" filter="url(#b2)"/>
<path d="M1040.4,852.1 1091.5,859.8 1095.1,858.4 1096.7,855.0 1095.6,851.8 1092.3,849.9 1043.6,843.1 1039.3,845.1 1038.4,848.8Z" fill="#2e76d6" filter="url(#b2)"/>
<path d="M933.4,905.1 930.7,910.5 929.6,917.8 930.0,927.0 933.6,933.9 940.5,938.5 950.7,940.8 964.1,940.8 973.7,938.9 979.4,935.2 981.2,929.7 979.2,922.3 976.2,915.9 972.2,910.5 967.1,906.2 961.1,902.8 949.2,899.8 943.4,900.1 937.6,901.6Z" fill="#7daef5" filter="url(#b2)"/>
<path d="M942.3,912.0 940.3,915.5 939.6,920.3 940.3,926.3 942.5,930.8 946.2,933.9 951.4,935.4 958.1,935.4 963.3,934.4 967.0,932.4 969.2,929.3 969.5,921.5 965.8,914.7 962.4,911.7 954.7,908.7 950.4,908.7 945.7,909.7Z" fill="#a9ccff" filter="url(#b2)"/>
<path d="M995.3,678.2 992.7,683.7 991.4,689.5 991.4,695.5 994.0,706.4 1000.0,715.4 1004.0,718.8 1014.0,723.1 1020.0,723.9 1025.2,723.3 1029.7,721.1 1033.4,717.5 1036.4,712.4 1039.8,699.4 1040.2,691.5 1038.9,675.3 1037.6,669.1 1033.8,660.6 1031.0,658.2 1027.6,657.1 1018.9,658.6 1014.1,660.9 1004.2,668.0Z" fill="#2e76d6" filter="url(#b2)"/>
<path d="M1002.8,674.7 1001.9,681.4 1005.0,687.0 1010.2,690.4 1017.0,691.5 1020.4,691.0 1027.2,688.2 1032.0,683.0 1034.0,675.6 1033.7,668.4 1031.2,662.2 1029.1,660.2 1023.2,659.1 1015.6,661.7 1012.0,664.0 1005.1,671.0Z" fill="#4e8fe8" filter="url(#b2)"/>
<path d="M936.5,648.5 929.3,650.0 923.8,654.7 921.8,661.5 922.5,665.6 926.5,673.6 929.5,676.3 937.4,679.0 941.2,678.6 944.6,676.8 950.2,669.2 952.1,661.2 951.4,657.7 949.7,654.4 944.4,650.1Z" fill="#2e76d6" filter="url(#b2)"/>
<path d="M1040.4,681.6 1038.7,684.2 1038.1,688.2 1039.2,698.0 1043.4,707.7 1045.2,709.0 1047.1,709.0 1051.3,705.1 1052.7,701.9 1053.8,693.4 1053.4,688.2 1052.1,684.2 1050.0,681.6 1047.0,680.3 1043.2,680.3Z" fill="#7daef5" filter="url(#b2)"/>
<path d="M1145.6,655.6 1143.8,660.1 1143.8,665.9 1150.7,690.4 1152.4,694.7 1154.7,697.3 1157.7,698.2 1161.3,697.3 1169.0,691.5 1171.5,687.5 1174.1,677.6 1172.6,666.9 1166.8,656.0 1163.0,652.3 1158.7,650.5 1154.1,650.6 1149.0,652.4Z" fill="#0d55ae" filter="url(#b3)"/>
<path d="M1099.7,688.1 1099.9,691.4 1101.5,694.1 1104.5,696.3 1107.6,697.1 1110.8,696.7 1114.0,694.9 1120.3,688.7 1125.8,678.5 1126.1,672.4 1123.4,667.6 1118.7,666.5 1112.3,669.9 1103.4,679.8Z" fill="#2e76d6" filter="url(#b2)"/>
<path d="M14.5,813.1 17.0,817.7 17.9,822.4 13.2,837.6 14.5,851.5 20.0,867.0 27.2,878.8 31.5,883.2 34.3,888.3 35.5,894.2 35.3,900.7 32.8,915.8 33.6,933.2 35.3,942.8 38.7,950.4 43.8,955.9 50.7,959.4 59.2,960.9 67.7,960.6 76.2,958.5 84.7,954.5 100.9,942.7 113.7,930.2 118.8,923.6 122.2,917.2 123.9,910.9 123.9,904.8 120.0,893.2 111.1,878.8 109.2,873.4 108.8,867.0 109.8,859.7 112.4,851.5 127.3,812.7 129.8,798.1 129.8,790.9 128.3,785.1 125.4,780.6 120.9,777.5 63.8,761.9 51.9,756.6 40.0,748.6 33.8,745.6 27.5,743.9 20.9,743.5 14.0,744.4 7.0,746.2 7.0,804.8ZM1209.4,765.6 1209.8,770.6 1218.1,785.7 1228.4,799.3 1240.5,813.1 1243.0,817.7 1243.9,822.4 1239.2,837.6 1239.2,844.1 1240.5,851.5 1246.0,867.0 1249.4,873.4 1257.5,883.2 1260.3,888.3 1261.6,894.2 1261.3,900.7 1258.8,915.8 1258.8,924.2 1261.3,942.8 1264.7,950.4 1269.9,955.9 1276.7,959.4 1285.2,960.9 1293.7,960.6 1302.2,958.5 1310.7,954.5 1326.9,942.7 1339.7,930.2 1344.8,923.6 1348.2,917.2 1349.9,910.9 1349.9,904.8 1348.2,898.8 1343.5,888.0 1337.1,878.8 1335.2,873.4 1334.8,867.0 1335.8,859.7 1338.4,851.5 1353.3,812.7 1355.8,798.1 1355.8,790.9 1354.4,785.1 1351.4,780.6 1346.9,777.5 1289.9,761.9 1277.9,756.6 1266.0,748.6 1259.9,745.6 1253.5,743.9 1246.9,743.5 1240.1,744.4 1227.1,748.6 1214.9,756.3 1211.1,760.9Z" fill="#2e76d6" filter="url(#b3)"/>
<path d="M10.6,894.7 14.0,899.3 18.3,902.8 23.4,905.2 27.7,905.5 31.1,903.8 33.6,900.0 35.3,894.1 36.2,888.1 35.3,875.6 26.8,844.3 24.6,840.3 21.8,838.2 18.5,838.2 14.7,840.2 11.5,843.5 7.0,854.0 7.0,884.7ZM1237.5,843.5 1233.0,854.0 1231.2,868.3 1231.4,875.4 1234.1,889.0 1236.7,894.7 1240.1,899.3 1244.3,902.8 1249.4,905.2 1253.7,905.5 1257.1,903.8 1259.6,900.0 1261.3,894.1 1262.2,881.9 1261.3,875.6 1252.8,844.3 1250.6,840.3 1247.8,838.2 1244.5,838.2 1240.7,840.2Z" fill="#1a64c4" filter="url(#b3)"/>
<path d="M76.6,820.6 75.3,824.8 75.3,830.6 77.3,840.7 81.7,849.2 84.5,851.2 87.5,851.2 90.7,849.2 96.4,840.9 97.9,831.3 97.1,826.0 95.1,821.9 92.2,819.1 88.1,817.4 83.0,816.9 79.2,818.0ZM1302.6,820.6 1301.4,824.8 1301.4,830.6 1303.3,840.7 1307.7,849.2 1310.5,851.2 1313.5,851.2 1316.7,849.2 1322.4,840.9 1323.9,831.3 1323.1,826.0 1321.2,821.9 1318.2,819.1 1314.1,817.4 1309.0,816.9 1305.2,818.0Z" fill="#1a64c4" filter="url(#b3)"/>
<path d="M12.3,787.1 19.1,785.7 21.1,784.0 21.5,782.0 20.4,779.7 14.9,775.2 7.0,773.9 7.0,784.7ZM1226.6,777.4 1231.5,783.7 1234.9,786.0 1241.8,787.0 1247.1,784.0 1247.5,782.0 1246.4,779.7 1243.9,777.1 1237.5,774.1 1229.4,774.3 1227.1,775.5Z" fill="#1a64c4" filter="url(#b2)"/>
<path d="M23.4,752.5 24.7,755.0 27.2,756.8 33.6,758.3 41.7,757.2 48.9,752.3 54.5,743.1 55.8,738.4 55.8,734.1 54.5,730.3 51.9,726.9 48.9,725.0 45.5,724.5 41.7,725.6 33.6,731.4 30.2,735.2 24.7,744.8ZM1249.4,752.5 1250.7,755.0 1253.3,756.8 1259.6,758.3 1267.7,757.2 1275.0,752.3 1280.5,743.1 1281.8,738.4 1281.8,734.1 1280.5,730.3 1277.9,726.9 1275.0,725.0 1271.6,724.5 1267.7,725.6 1259.6,731.4 1256.2,735.2 1250.7,744.8Z" fill="#2e76d6" filter="url(#b3)"/>
<path d="M124.7,782.7 116.9,814.8 100.7,862.9 102.0,865.4 104.5,864.2 122.4,810.4 128.4,784.0 127.4,781.9ZM1350.7,782.7 1342.9,814.8 1326.7,862.9 1328.0,865.4 1330.5,864.2 1348.4,810.4 1354.4,784.0 1353.4,781.9Z" fill="#7daef5" filter="url(#b1)"/>
<path d="M108.9,789.6 93.3,859.0 93.8,860.9 95.4,861.8 98.1,860.2 104.0,836.7 113.6,791.2 112.3,788.6 110.4,788.4ZM1334.9,789.6 1319.3,859.0 1319.8,860.9 1321.4,861.8 1324.1,860.2 1330.0,836.7 1339.6,791.2 1338.3,788.6 1336.4,788.4Z" fill="#4e8fe8" filter="url(#b1)"/>
<path d="M58.8,812.1 65.6,856.0 67.0,857.8 69.3,858.1 71.1,856.7 71.5,854.7 64.6,811.8 62.2,809.5 59.9,810.1ZM1284.8,812.1 1291.7,856.0 1293.1,857.8 1295.3,858.1 1297.2,856.7 1297.5,854.7 1290.6,811.8 1288.2,809.5 1285.9,810.1Z" fill="#4e8fe8" filter="url(#b2)" opacity="0.8"/>
<path d="M69.0,534.1 71.9,575.3 76.2,605.5 78.2,611.2 84.1,619.5 93.1,625.9 104.8,631.9 153.3,650.3 183.2,665.2 186.4,664.6 187.3,662.2 186.2,660.2 170.6,651.8 150.4,642.5 107.2,626.5 96.2,620.7 88.3,615.2 83.5,608.4 82.1,604.3 77.2,567.7 74.9,534.4 72.6,531.9 70.4,532.3ZM1295.0,534.1 1297.9,575.3 1302.2,605.5 1304.2,611.2 1310.1,619.5 1319.2,625.9 1330.8,631.9 1379.3,650.3 1409.2,665.2 1412.5,664.6 1413.3,662.2 1412.2,660.2 1396.6,651.8 1376.4,642.5 1333.2,626.5 1322.2,620.7 1314.3,615.2 1309.5,608.4 1308.1,604.3 1303.2,567.7 1300.9,534.4 1298.7,531.9 1296.4,532.3Z" fill="#2e76d6" filter="url(#b2)" opacity="0.7"/>
<path d="M160.1,650.3 177.6,657.9 190.1,665.0 191.2,664.6 190.9,663.6 175.5,655.1 160.8,648.9 159.8,649.3ZM1386.1,650.3 1403.6,657.9 1416.1,665.0 1417.2,664.6 1416.9,663.6 1401.5,655.1 1386.8,648.9 1385.8,649.3Z" fill="#a9ccff" filter="url(#b1)"/>
<path d="M1193.0,607.7 1201.2,647.6 1211.9,675.1 1211.2,681.1 1208.8,685.9 1199.8,693.2 1200.1,696.0 1202.9,697.3 1210.7,692.4 1213.6,689.4 1216.9,683.0 1217.9,674.4 1215.2,665.4 1208.5,651.1 1198.7,608.1 1196.9,606.0 1194.6,606.0Z" fill="#2e76d6" filter="url(#b2)" opacity="0.8"/>
<path d="M1175.1,611.2 1171.4,627.3 1170.7,639.9 1174.2,666.3 1174.6,691.1 1175.3,692.6 1177.1,693.3 1178.8,692.6 1179.5,691.1 1179.6,673.1 1175.7,633.8 1179.5,613.1 1178.7,610.9 1176.8,610.4Z" fill="#2e76d6" filter="url(#b2)" opacity="0.7"/>
<path d="M10.9,353.2 15.6,349.3 19.0,344.2 21.4,337.5 22.0,331.0 20.7,324.5 17.7,319.0 13.0,314.4 7.0,311.2 7.0,355.1ZM11.9,496.0 10.9,505.7 12.8,526.0 14.2,526.0 15.6,531.2 17.3,534.0 21.9,537.6 27.3,539.5 32.9,538.5 38.8,533.9 45.5,526.0 47.3,526.0 53.8,516.4 59.5,504.8 60.1,496.0 61.8,496.0 64.0,488.5 70.3,489.1 78.3,487.7 82.1,485.5 95.6,473.8 111.2,466.0 114.3,466.0 117.7,460.9 119.1,453.3 127.0,456.1 133.6,456.1 138.4,454.9 137.5,466.0 139.7,466.0 142.8,476.5 148.6,484.4 155.8,489.1 157.7,491.7 151.7,496.0 154.5,496.0 148.7,501.3 146.3,508.3 146.5,512.1 148.5,516.7 151.1,519.5 155.6,521.8 161.8,522.0 173.6,518.3 184.4,512.6 190.0,507.9 197.0,508.9 202.6,507.3 208.5,503.5 213.5,496.0 215.3,496.0 216.0,491.7 221.8,487.1 235.4,490.5 243.0,496.0 245.9,496.0 254.1,499.2 256.4,503.7 254.0,508.3 252.9,514.8 256.0,524.7 256.8,526.0 258.5,526.0 264.4,531.9 269.9,533.9 272.7,540.1 284.1,549.9 285.2,556.0 286.4,556.0 286.5,556.9 285.6,579.9 286.6,586.0 287.6,586.0 300.5,610.7 305.4,615.0 309.9,616.0 312.0,618.2 320.9,636.5 327.6,646.0 336.9,655.8 341.1,658.6 345.9,659.1 351.0,656.7 352.1,663.0 354.8,668.3 364.5,675.9 384.6,684.1 394.9,684.5 405.6,691.1 416.1,694.0 419.2,697.1 422.1,702.3 425.3,704.9 428.7,706.1 433.7,710.6 442.8,714.1 447.6,713.6 447.1,718.6 439.9,726.2 438.1,730.5 436.6,736.8 437.2,741.5 434.7,747.8 435.1,753.1 437.6,757.8 441.9,762.1 454.0,786.0 457.9,790.4 471.5,799.3 471.7,802.8 470.7,817.8 468.3,829.2 465.6,853.2 460.6,869.0 458.4,886.0 457.4,886.0 456.5,899.6 452.1,916.0 450.9,916.0 450.7,916.9 450.7,932.8 452.5,940.7 454.8,946.0 453.1,946.0 459.3,955.6 468.5,965.3 475.2,969.9 485.7,972.7 493.1,972.2 499.2,969.9 502.8,967.9 507.2,963.7 509.3,958.9 509.5,954.8 517.4,955.7 524.0,954.0 528.3,951.5 533.3,946.0 531.5,946.0 533.8,939.4 533.4,934.3 532.0,930.9 527.6,926.5 520.5,924.0 514.8,924.1 508.8,925.6 502.7,929.2 498.8,934.6 498.0,939.3 498.7,943.2 497.9,942.5 496.6,935.5 504.2,921.7 505.0,916.0 503.8,916.0 503.1,910.5 507.4,902.9 509.3,893.7 514.8,888.9 516.5,886.0 515.4,886.0 515.6,885.2 520.9,883.5 527.6,879.4 531.4,874.0 532.9,867.4 536.4,866.5 540.7,864.0 547.9,856.7 548.5,856.0 547.5,856.0 560.0,836.9 562.2,827.9 563.9,826.0 562.9,826.0 581.5,816.9 586.7,811.9 593.1,797.0 594.7,781.3 604.7,769.0 607.0,763.7 607.5,753.1 605.9,748.1 604.2,745.9 600.6,742.9 593.8,740.0 589.8,736.9 583.8,734.7 573.0,734.0 566.6,729.6 556.3,726.3 555.0,725.4 551.1,715.2 547.1,710.0 539.0,705.6 527.0,703.7 511.9,689.7 506.5,688.1 489.5,687.7 484.0,685.0 472.2,683.4 461.2,687.9 455.3,693.2 449.2,692.0 442.7,693.4 441.9,691.9 442.8,681.4 440.6,675.2 434.1,670.6 427.8,669.2 429.6,662.8 433.0,663.7 440.4,662.9 445.0,664.6 452.3,669.7 458.1,670.8 465.9,670.2 471.5,667.5 473.9,662.2 473.6,658.9 472.0,656.0 469.3,653.9 453.5,646.0 454.6,646.0 453.1,645.2 454.4,640.4 454.4,635.8 450.8,623.0 456.1,617.2 461.0,614.9 467.6,608.9 470.0,603.0 469.9,597.0 475.1,587.1 485.4,583.7 488.1,580.8 490.1,575.2 494.4,576.4 500.5,575.5 518.4,566.2 521.6,563.5 524.3,558.9 530.4,561.7 538.1,562.2 543.9,559.5 547.0,556.0 548.4,556.0 550.3,552.2 551.1,548.5 550.6,541.4 547.8,534.4 541.8,528.1 541.7,526.0 543.1,525.4 540.2,517.0 534.9,508.4 523.3,496.0 525.4,496.0 511.7,466.0 514.4,466.0 513.2,464.5 513.9,459.8 513.2,454.8 516.8,442.7 521.6,436.0 523.3,436.0 535.7,466.0 538.0,466.0 540.4,471.0 544.7,476.3 560.5,487.2 569.5,489.3 573.9,488.8 577.9,487.0 583.9,480.7 589.3,466.0 591.5,466.0 597.2,448.7 610.6,440.6 615.6,436.0 619.8,436.0 622.4,446.8 630.6,459.8 635.9,463.7 643.0,466.0 666.1,465.4 680.2,456.4 686.7,449.1 689.2,442.9 689.8,436.0 692.3,436.0 692.0,433.4 690.2,427.8 681.8,415.0 675.8,409.9 665.8,406.0 667.4,406.0 660.7,405.6 654.1,407.6 658.5,401.9 660.9,396.8 663.5,385.1 663.6,374.7 669.0,364.3 671.2,354.8 670.9,341.1 671.5,334.4 674.0,323.8 675.0,309.0 674.3,292.3 675.3,280.5 678.0,269.6 683.1,257.0 692.6,238.4 693.3,230.7 691.0,217.3 688.0,212.4 682.2,207.6 676.8,205.7 669.2,205.3 663.7,195.7 652.7,181.4 636.1,164.4 631.0,161.3 612.1,154.0 589.6,155.2 583.9,156.6 564.7,164.6 546.7,177.6 532.1,185.7 521.9,189.5 511.1,176.0 496.6,167.6 483.0,164.2 471.6,163.4 462.7,164.6 456.6,162.0 452.7,161.4 446.7,162.0 439.3,164.7 433.8,167.8 426.6,176.1 420.8,181.0 395.5,197.9 388.3,205.6 385.0,210.8 377.5,216.5 372.7,223.7 370.7,229.1 369.1,237.9 369.4,251.7 356.6,252.0 348.5,255.9 343.3,256.1 330.3,259.8 318.5,265.2 304.7,275.3 295.4,286.8 285.3,304.3 283.8,309.4 282.9,321.6 283.8,328.8 274.7,337.3 269.5,348.3 268.4,353.4 268.3,362.1 270.6,372.8 251.5,381.6 239.2,374.9 217.2,370.4 193.7,362.3 189.5,361.9 178.6,363.1 171.4,366.3 157.9,376.9 140.3,394.0 135.2,402.7 133.7,402.5 128.2,397.1 131.6,392.8 133.9,386.8 134.4,380.4 132.5,373.3 130.1,368.7 126.1,364.2 115.6,358.9 110.9,357.7 103.6,357.5 94.4,360.2 88.3,364.2 85.3,367.4 80.6,377.4 74.4,375.3 70.5,374.9 57.9,377.5 47.0,377.1 37.0,368.9 25.5,364.5 18.5,364.1 7.0,356.2 7.0,494.6ZM513.6,401.1 499.7,379.9 493.4,372.3 479.4,358.5 463.3,345.7 468.4,334.6 469.7,328.8 475.8,334.8 480.4,337.4 492.1,341.4 503.1,340.6 505.7,343.6 510.6,359.7 515.6,388.6 521.1,401.1 519.6,407.3ZM433.4,466.7 439.5,466.0 439.9,472.8 438.2,477.4 438.0,484.1 439.1,488.3 441.6,492.3 434.1,490.7 421.2,482.9 412.1,480.1 411.8,479.1 416.3,466.0ZM401.0,635.0 414.8,636.2 421.4,632.1 428.9,633.9 433.0,644.1 429.2,646.0 430.1,646.0 425.3,650.1 419.1,649.2 410.0,651.2 405.1,655.0 402.9,659.9 398.8,659.9 396.3,658.2 394.2,651.1 396.6,638.2ZM180.0,666.4 181.4,669.3 184.5,672.2 187.6,673.5 191.3,673.3 194.6,672.0 197.0,669.4 198.8,665.6 198.8,661.6 197.0,657.8 194.5,655.5 190.1,653.9 186.5,654.1 183.1,655.6 180.4,658.8 179.5,662.2ZM9.7,772.8 11.6,769.7 12.0,766.7 8.6,760.3 16.4,755.5 19.5,748.9 19.1,745.9 17.0,741.7 14.5,739.7 11.3,738.9 7.0,739.1 7.0,774.5ZM109.1,791.3 107.5,787.7 104.5,785.3 100.4,784.1 96.0,784.6 93.1,785.9 89.9,788.9 88.7,791.9 88.5,796.3 90.0,799.6 93.4,802.4 97.7,803.6 102.2,803.2 106.4,801.0 108.8,798.2 109.6,796.0ZM51.6,794.5 46.3,796.0 44.0,798.8 43.1,803.6 44.9,808.6 48.7,812.5 56.0,817.2 61.1,818.4 65.3,817.2 67.9,814.9 69.3,811.8 69.5,808.0 68.4,804.8 57.8,796.0ZM9.6,875.1 13.6,868.6 18.0,856.0 17.0,856.0 21.3,846.5 22.8,839.1 23.4,826.6 20.1,817.5 10.2,805.6 7.0,800.1 7.0,877.4ZM74.3,851.9 71.4,856.7 71.8,860.7 77.4,870.4 75.6,874.7 71.7,878.3 67.0,886.0 65.7,886.0 55.9,894.7 50.9,902.2 49.6,906.6 50.1,910.7 52.3,916.0 50.8,916.0 52.5,918.2 59.2,922.3 65.4,924.2 73.9,923.4 78.2,921.2 83.3,916.7 83.8,916.0 82.2,916.0 86.4,907.2 91.2,902.3 93.9,897.7 97.8,895.9 101.2,892.9 105.9,886.0 104.5,886.0 108.2,880.6 110.5,873.1 109.9,867.2 107.1,863.1 93.3,856.0 85.7,849.4 81.4,848.4 77.8,849.2ZM8.5,893.7 9.2,886.0 8.1,886.0 7.0,881.9 7.0,897.8ZM937.5,209.9 929.1,206.7 911.5,207.1 868.1,226.9 861.4,234.7 857.7,245.7 857.8,254.1 861.2,261.9 871.5,271.9 876.0,275.0 893.6,279.3 913.4,276.5 931.1,268.1 942.9,258.5 946.7,254.0 951.5,241.9 952.6,236.8 952.2,230.2 949.9,224.3 942.4,214.1ZM791.6,218.3 778.1,224.8 773.6,228.8 770.7,233.0 759.9,235.1 752.9,239.1 743.6,248.2 737.8,259.9 736.6,265.1 737.2,281.9 742.2,295.5 751.8,315.9 757.0,324.5 765.0,333.9 769.7,336.5 779.9,339.1 787.0,338.5 797.5,333.5 801.7,330.0 808.2,321.4 812.7,309.2 813.7,303.1 813.3,291.7 810.1,282.8 821.1,276.6 829.4,266.2 831.7,260.9 833.8,248.8 832.8,241.3 829.3,233.3 826.1,228.3 823.2,225.6 809.8,218.3 796.9,217.6ZM1544.5,265.2 1530.7,275.3 1521.4,286.8 1511.3,304.3 1509.8,309.4 1508.9,321.6 1509.8,328.8 1499.5,339.0 1494.6,351.7 1494.4,364.0 1496.6,372.8 1477.5,381.6 1465.2,374.9 1443.2,370.4 1419.8,362.3 1415.5,361.9 1404.6,363.1 1397.4,366.3 1384.0,376.9 1366.3,394.0 1361.2,402.7 1359.8,402.5 1354.3,397.1 1358.5,391.1 1360.3,384.9 1360.1,378.3 1357.6,371.4 1354.9,367.0 1350.5,362.9 1340.8,358.6 1329.7,357.5 1320.4,360.2 1314.4,364.2 1311.3,367.4 1306.6,377.4 1300.5,375.3 1296.5,374.9 1283.9,377.5 1273.0,377.1 1261.5,368.1 1251.5,364.5 1244.5,364.1 1231.7,355.5 1240.3,350.6 1245.8,342.4 1248.1,331.2 1247.4,326.6 1244.9,320.8 1239.0,314.4 1229.3,309.3 1206.6,301.9 1197.4,301.4 1183.6,305.1 1177.3,309.9 1168.5,321.6 1165.8,333.3 1166.4,341.5 1169.1,347.5 1178.0,357.7 1177.3,358.4 1174.5,358.5 1171.6,352.5 1165.3,345.3 1160.7,341.5 1157.1,339.8 1143.9,337.2 1138.6,338.2 1132.1,340.8 1120.7,337.1 1123.2,327.8 1123.7,321.9 1122.4,316.0 1119.1,309.2 1112.8,302.1 1104.8,297.0 1098.0,295.2 1094.1,290.3 1097.3,274.1 1097.1,267.5 1092.5,249.1 1082.2,227.1 1071.5,214.3 1064.1,210.0 1059.7,209.0 1053.6,209.1 1042.4,213.2 1035.7,218.3 1031.4,225.5 1028.5,237.3 1029.6,249.3 1025.0,257.5 1023.4,265.6 1024.7,275.7 1026.7,281.3 1031.7,287.7 1037.2,291.2 1039.0,297.2 1042.2,302.2 1021.5,308.9 1003.6,318.8 996.8,326.8 993.5,334.7 988.6,336.3 983.7,339.3 979.9,343.6 977.7,348.0 973.7,344.8 968.8,342.6 960.1,341.4 954.4,342.3 966.6,331.4 970.9,324.1 972.7,315.7 972.8,309.8 971.0,303.7 967.7,298.6 957.2,291.1 950.1,288.5 943.3,288.4 929.1,291.9 916.6,299.0 905.5,308.8 894.1,324.2 888.9,335.0 885.0,348.9 874.9,369.6 873.9,382.1 874.9,386.3 877.7,391.8 869.0,390.2 860.8,392.6 857.0,389.1 847.8,383.3 840.5,381.2 836.5,375.0 829.5,369.1 818.4,364.0 809.7,362.9 803.1,363.6 791.9,367.4 771.2,379.8 765.8,384.8 751.8,402.3 740.3,430.3 733.4,436.0 737.3,436.0 727.4,446.0 721.2,457.0 719.4,466.0 721.5,466.0 721.9,477.9 716.5,473.0 711.1,470.4 706.9,469.8 697.6,470.9 689.0,477.5 685.1,485.9 684.2,492.4 678.4,496.0 681.1,496.0 675.4,501.8 672.3,507.7 671.3,512.6 671.5,526.0 673.0,526.0 676.5,533.0 680.3,536.6 684.7,538.2 690.9,538.1 692.0,540.2 691.7,545.7 692.5,548.9 695.0,552.6 698.5,555.5 692.9,555.1 688.0,556.0 702.0,556.0 703.8,557.2 694.0,556.3 687.9,557.3 681.6,561.4 679.0,565.6 677.8,571.5 678.3,579.8 677.0,585.9 678.0,586.0 677.9,592.0 679.9,599.0 685.2,604.1 680.6,610.2 678.1,616.0 678.8,616.0 676.9,622.5 670.2,627.5 666.4,631.7 657.4,645.8 654.3,654.2 653.7,660.9 655.6,666.9 655.6,670.7 652.8,678.5 652.3,682.7 655.0,690.9 657.2,694.8 663.1,700.4 672.4,712.1 682.5,719.8 689.4,723.5 695.8,723.9 704.0,722.2 714.6,721.9 731.2,718.0 738.4,723.0 744.5,724.4 742.7,730.3 743.6,738.9 747.3,745.5 752.8,752.0 757.5,769.2 752.5,782.8 751.6,789.1 752.3,796.0 759.8,814.6 763.7,830.5 770.9,845.9 773.1,858.4 775.6,862.3 778.6,864.7 783.7,867.1 789.4,867.4 813.8,862.4 823.6,856.0 822.4,856.0 828.0,850.3 834.5,841.1 836.9,836.2 839.5,826.9 840.9,826.0 839.8,826.0 843.9,823.0 847.1,817.8 847.9,814.5 846.8,803.8 857.5,796.0 861.3,791.1 861.4,796.0 859.3,803.6 858.7,809.7 859.8,815.7 865.5,826.0 864.7,826.0 868.2,828.5 874.9,830.5 881.8,828.4 885.0,826.0 884.2,826.0 889.0,818.7 897.7,789.6 897.7,781.2 895.6,773.8 894.1,771.1 889.7,767.4 886.6,766.5 883.3,766.8 879.9,768.9 872.5,777.9 864.7,783.3 864.2,772.2 859.3,753.7 864.0,744.1 886.4,721.8 896.5,706.0 900.1,697.6 900.9,692.7 899.7,688.4 897.0,685.8 915.2,676.0 920.0,672.4 923.0,668.9 928.7,658.7 929.5,651.1 943.3,651.8 947.3,655.4 950.1,661.1 955.3,665.2 959.1,666.4 960.8,676.0 968.7,694.8 974.1,705.1 979.2,710.2 983.9,711.5 987.1,716.9 992.7,719.6 995.7,719.3 1000.6,717.1 1003.9,713.3 1005.2,709.0 1004.2,701.7 998.5,694.2 1000.1,682.6 1013.7,670.9 1017.2,669.2 1021.4,664.4 1027.5,663.2 1031.5,669.3 1032.8,676.0 1034.4,679.0 1038.7,683.5 1045.1,683.9 1046.9,691.7 1046.8,705.1 1041.5,706.0 1036.4,712.3 1036.2,716.1 1037.9,721.3 1041.2,726.7 1049.3,735.1 1063.9,753.1 1070.9,758.0 1074.0,762.3 1084.1,766.0 1083.0,766.0 1115.3,770.9 1132.9,770.7 1135.5,773.8 1139.3,775.4 1147.1,774.0 1143.2,776.0 1131.8,785.8 1127.0,793.0 1111.0,797.5 1101.8,801.9 1099.2,804.8 1098.0,811.1 1099.2,817.9 1097.7,826.7 1102.9,843.7 1102.4,853.0 1103.0,856.0 1102.2,856.0 1105.2,861.9 1107.8,864.4 1113.7,867.2 1122.1,867.8 1128.7,865.3 1138.8,864.2 1144.8,862.2 1151.0,858.0 1156.0,856.0 1153.8,855.8 1161.4,854.1 1165.4,854.5 1167.9,856.0 1166.4,856.0 1173.6,864.1 1176.8,865.7 1182.7,866.2 1185.7,869.0 1190.4,877.1 1195.3,881.2 1202.2,883.7 1202.0,886.0 1201.0,886.0 1202.4,893.1 1205.7,900.9 1209.5,905.1 1215.5,907.9 1223.4,907.1 1227.9,904.3 1231.4,900.4 1234.5,893.7 1235.2,886.0 1234.2,886.0 1233.0,881.9 1230.4,878.6 1235.1,875.8 1239.6,868.6 1244.0,856.0 1243.0,856.0 1247.5,845.9 1249.4,833.3 1249.4,826.0 1246.1,817.5 1236.2,805.6 1232.1,798.5 1224.3,792.3 1221.5,782.3 1218.6,778.0 1216.0,776.0 1213.4,769.1 1218.4,772.4 1226.0,774.8 1231.8,774.9 1235.1,773.3 1237.4,770.4 1238.0,766.7 1234.7,760.3 1238.9,758.3 1243.0,754.8 1245.2,750.5 1245.1,745.9 1243.0,741.7 1238.9,739.2 1233.0,739.1 1220.9,743.7 1213.0,737.9 1200.1,733.3 1189.3,730.7 1182.1,732.5 1178.8,728.5 1176.0,727.1 1171.5,726.2 1164.8,727.0 1161.6,720.9 1155.8,717.7 1151.2,718.1 1147.6,720.8 1142.6,719.6 1138.1,720.9 1132.1,720.4 1128.4,721.1 1130.2,713.9 1133.3,715.5 1137.0,715.6 1143.6,718.8 1147.8,719.1 1150.8,718.2 1155.2,714.2 1157.7,705.5 1156.7,699.1 1154.1,695.0 1153.7,687.4 1143.1,677.0 1144.0,673.3 1143.4,667.0 1140.2,662.2 1137.2,660.0 1143.0,646.0 1142.2,640.6 1139.3,636.7 1142.5,629.4 1141.6,616.0 1142.4,616.0 1141.4,612.7 1137.1,605.6 1140.6,603.1 1141.0,608.2 1142.7,611.4 1147.7,615.3 1153.2,616.0 1153.5,621.2 1155.8,625.6 1158.7,628.0 1163.0,629.2 1168.9,627.8 1174.0,622.3 1180.8,618.8 1198.0,613.3 1201.9,610.9 1205.5,607.1 1210.1,594.0 1211.0,586.0 1211.9,586.0 1211.7,583.2 1215.3,581.5 1221.3,576.3 1223.2,572.6 1224.2,566.8 1222.1,560.7 1217.1,556.0 1219.0,556.0 1219.5,547.1 1218.7,537.4 1219.5,526.0 1221.0,526.0 1219.8,518.2 1217.9,511.4 1214.1,504.2 1210.0,500.7 1204.0,499.1 1206.9,496.0 1223.4,493.4 1236.3,495.0 1236.2,496.0 1237.9,496.0 1236.9,505.7 1238.8,526.0 1240.3,526.0 1241.6,531.2 1244.9,535.6 1251.1,539.0 1256.7,539.2 1260.9,537.3 1264.8,533.9 1271.6,526.0 1273.4,526.0 1276.4,521.7 1285.0,506.0 1286.1,496.0 1287.8,496.0 1290.1,488.5 1296.3,489.1 1304.4,487.7 1308.1,485.5 1321.6,473.8 1337.2,466.0 1340.3,466.0 1343.7,460.9 1345.1,453.3 1353.0,456.1 1359.6,456.1 1364.4,454.9 1363.6,466.0 1365.7,466.0 1368.8,476.5 1374.6,484.4 1381.9,489.1 1383.7,491.7 1377.7,496.0 1380.6,496.0 1374.7,501.3 1372.3,508.3 1372.6,512.1 1374.5,516.7 1380.4,521.4 1386.6,522.2 1395.8,519.8 1409.4,513.2 1416.0,507.9 1421.8,509.0 1428.1,507.6 1434.5,503.5 1439.5,496.0 1441.3,496.0 1442.0,491.7 1447.8,487.1 1461.4,490.5 1469.0,496.0 1471.9,496.0 1480.1,499.2 1482.4,503.7 1480.0,508.3 1478.9,514.8 1482.0,524.7 1482.8,526.0 1484.5,526.0 1490.4,531.9 1495.9,533.9 1498.7,540.1 1510.1,549.9 1511.2,556.0 1512.4,556.0 1512.5,556.9 1511.6,579.9 1512.6,586.0 1513.6,586.0 1525.9,609.8 1531.4,615.0 1536.7,616.5 1548.6,639.3 1559.0,651.6 1559.0,258.9ZM1089.0,702.0 1093.7,699.1 1097.8,693.4 1098.4,684.5 1095.5,676.3 1098.0,675.7 1102.1,672.3 1104.7,667.3 1104.8,663.2 1121.0,656.5 1125.3,661.6 1121.5,667.0 1120.4,673.6 1121.1,681.9 1122.7,686.7 1119.7,689.0 1112.6,697.3 1111.1,703.0 1103.4,710.6 1094.7,717.9 1088.4,719.5 1084.1,723.5 1082.3,728.2 1083.3,735.5 1079.9,730.7 1080.6,724.8 1079.0,721.2 1077.3,712.2 1075.2,708.6 1078.5,709.1 1081.4,708.2 1085.6,705.9ZM736.5,581.7 736.9,586.0 737.8,586.0 738.0,587.1 728.0,588.3 729.0,586.0 733.3,584.7ZM1172.2,579.4 1178.2,578.4 1185.0,574.3 1186.3,579.9 1184.8,584.7 1181.6,586.0 1183.7,586.0 1178.7,589.5 1176.3,592.7 1168.5,595.0 1165.3,586.8 1167.4,586.0ZM731.7,496.0 734.1,497.7 734.4,504.5 729.6,506.8 724.6,496.0 726.4,496.0 726.6,492.6 729.2,496.0ZM810.2,605.1 830.0,608.6 829.2,610.6 824.5,610.0 818.1,611.6 809.1,609.5 801.3,606.4 805.8,601.6ZM777.6,610.0 771.8,606.4 778.3,602.6 782.7,595.8 785.0,601.5 788.9,605.3 783.5,607.9 779.7,612.3ZM1127.4,706.0 1127.3,706.9 1126.8,706.3ZM1159.7,762.1 1158.7,757.4 1155.3,754.2 1150.2,753.1 1143.2,754.9 1141.7,753.7 1144.6,749.3 1144.9,744.9 1143.4,740.9 1145.1,737.0 1147.0,736.2 1148.5,738.8 1147.2,742.3 1147.5,745.5 1149.0,748.3 1151.5,750.3 1159.4,752.0 1166.7,751.1 1182.8,756.2 1182.3,760.9 1185.3,766.0 1188.8,767.7 1192.2,767.6 1195.7,769.6 1193.1,782.5 1189.8,780.1 1190.7,775.6 1189.5,770.2 1187.7,767.9 1184.4,766.2 1173.2,764.4 1167.6,764.7 1161.5,767.5 1156.2,774.7 1152.2,773.1 1147.9,773.7 1156.4,768.5 1158.5,766.0ZM1118.1,750.8 1119.0,752.3 1115.4,752.2 1116.7,751.7ZM1087.9,745.9 1088.2,745.7 1088.8,746.2ZM1406.0,666.4 1407.5,669.3 1410.5,672.2 1413.6,673.5 1417.3,673.3 1420.6,672.0 1423.1,669.4 1424.8,665.6 1424.8,661.6 1423.0,657.8 1420.5,655.5 1416.1,653.9 1412.6,654.1 1409.1,655.6 1406.4,658.8 1405.5,662.2ZM1335.2,791.3 1333.6,787.7 1330.5,785.3 1326.4,784.1 1322.0,784.6 1319.1,785.9 1315.9,788.9 1314.7,791.9 1314.6,796.3 1316.0,799.6 1319.4,802.4 1323.7,803.6 1328.2,803.2 1332.4,801.0 1334.8,798.2 1335.6,796.0ZM1277.6,794.5 1272.3,796.0 1270.0,798.8 1269.1,803.6 1271.0,808.6 1274.7,812.5 1282.0,817.2 1287.1,818.4 1291.3,817.2 1293.9,814.9 1295.3,811.8 1295.5,808.0 1294.4,804.8 1283.8,796.0ZM1300.3,851.9 1297.4,856.7 1297.8,860.7 1303.4,870.4 1301.6,874.7 1297.7,878.3 1293.0,886.0 1291.7,886.0 1281.9,894.7 1276.9,902.2 1275.7,906.6 1276.1,910.7 1278.4,916.0 1276.8,916.0 1278.5,918.2 1285.2,922.3 1291.5,924.2 1299.9,923.4 1304.2,921.2 1309.3,916.7 1309.8,916.0 1308.2,916.0 1312.4,907.2 1317.2,902.3 1319.9,897.7 1323.8,895.9 1327.2,892.9 1332.0,886.0 1330.5,886.0 1334.2,880.6 1336.5,873.1 1335.9,867.2 1333.1,863.1 1319.4,856.0 1311.7,849.4 1307.4,848.4 1303.8,849.2Z" fill="#2e76d6" filter="url(#b1)"/>
<path d="M7.0,342.8 10.9,335.4 11.4,331.5 10.3,327.2 7.0,323.3ZM680.8,432.5 672.3,420.2 664.9,416.5 660.7,416.5 650.7,420.2 646.7,418.1 642.2,417.9 635.7,419.8 630.0,425.8 628.0,429.8 627.9,436.0 629.0,436.0 630.8,443.1 633.5,446.7 634.4,449.8 638.4,454.5 645.6,457.2 656.9,458.4 663.8,456.5 670.0,452.8 675.0,448.9 679.0,444.2 680.6,436.0 681.8,436.0ZM17.1,486.4 23.4,482.7 27.6,477.7 30.1,473.2 35.1,470.1 24.0,483.5 18.3,496.0 19.1,496.0 17.9,505.0 18.3,514.2 19.9,526.0 22.8,530.7 26.3,532.9 29.3,533.1 38.5,526.0 50.6,507.7 52.9,502.1 53.0,496.0 53.8,496.0 53.1,493.4 56.2,487.1 56.6,481.1 62.6,480.2 69.0,481.2 75.3,480.3 91.5,466.9 95.4,466.0 106.5,460.8 108.5,458.7 109.7,455.3 110.1,449.5 108.7,445.4 113.5,439.3 125.8,446.6 132.0,447.1 137.2,444.9 141.0,438.1 145.4,444.2 151.4,448.2 147.9,454.6 146.5,462.0 146.7,466.0 147.7,466.0 151.4,475.4 155.4,479.9 161.9,482.5 163.2,485.7 167.0,489.1 172.2,490.6 165.8,496.0 167.1,496.0 154.5,505.3 153.4,510.7 156.4,514.6 159.2,515.3 163.1,514.6 175.4,509.7 180.8,506.5 188.6,498.7 191.4,500.9 195.8,501.9 202.4,499.4 205.6,496.0 206.6,496.0 207.6,494.1 207.4,486.5 212.9,484.2 220.6,477.6 226.7,480.4 238.0,482.9 249.9,491.1 258.2,493.3 265.6,505.7 261.8,508.2 260.1,512.4 260.1,515.6 262.1,521.1 265.3,525.6 270.5,527.7 276.4,526.0 277.7,523.6 278.5,525.3 277.5,526.0 278.6,526.0 276.8,527.8 275.8,530.6 276.7,535.0 279.7,538.5 289.8,546.3 292.1,556.5 291.1,579.7 292.6,586.0 304.3,607.3 308.1,610.8 313.7,613.4 316.1,616.0 324.9,634.1 333.6,646.0 339.8,652.5 344.3,654.9 347.5,654.0 348.9,652.1 348.9,649.7 347.0,646.0 347.7,646.0 355.2,655.0 356.2,661.7 358.4,665.9 366.5,672.0 385.7,680.1 395.9,680.4 407.9,687.5 417.8,690.1 422.6,694.6 425.3,699.6 436.3,707.3 445.1,710.1 448.0,708.5 448.8,705.8 451.3,708.6 451.7,717.5 449.0,723.1 443.5,728.2 442.1,731.4 440.7,737.5 442.1,742.1 438.9,747.6 439.1,752.0 440.9,755.4 445.4,759.9 457.4,783.5 464.1,789.6 474.7,796.0 476.0,798.7 476.2,802.8 475.7,813.1 470.3,854.0 465.7,869.8 463.2,886.0 462.0,901.0 457.0,918.0 457.2,932.4 458.6,938.7 462.2,946.0 461.3,946.0 473.9,960.5 478.4,963.3 484.4,965.4 490.7,965.2 496.7,963.1 501.2,959.6 502.2,955.0 500.5,951.9 492.3,946.0 490.0,936.2 492.6,929.0 498.0,919.8 498.6,916.0 496.6,910.1 502.0,900.9 503.5,895.2 503.6,889.5 506.4,888.8 509.7,886.0 509.0,886.0 510.5,884.1 511.4,880.5 518.2,879.0 523.7,875.9 527.0,871.0 527.8,865.9 527.4,862.1 534.5,861.7 541.4,856.5 555.5,835.3 557.5,826.0 560.1,822.6 579.4,813.0 583.2,809.2 588.8,796.0 590.8,779.7 601.1,766.8 603.3,762.0 603.7,757.3 602.3,750.0 598.9,746.7 594.5,745.1 584.1,739.0 572.1,738.0 565.0,733.3 554.2,729.9 551.3,727.4 547.5,717.2 544.5,713.2 537.8,709.6 525.1,707.6 510.2,693.5 506.3,692.3 488.6,691.9 482.9,689.1 477.4,689.1 475.6,687.6 472.4,687.5 460.8,693.3 456.5,698.7 453.0,696.7 449.1,696.2 442.3,698.0 438.2,694.3 437.6,692.3 438.6,681.8 436.6,677.4 431.8,674.4 421.8,673.7 425.9,659.6 424.1,654.5 420.1,653.5 411.9,655.1 408.2,658.1 405.9,663.7 402.1,664.4 395.8,663.5 392.6,660.5 391.2,657.5 390.0,647.7 392.1,636.5 396.0,632.5 400.1,630.3 413.4,631.7 417.2,629.8 418.6,627.4 420.8,627.2 426.0,628.8 431.3,629.0 433.3,631.0 434.9,637.2 439.5,645.1 443.6,646.6 446.4,646.0 448.6,643.8 449.7,639.6 449.0,632.4 446.1,623.3 446.8,620.6 450.8,616.0 463.5,606.0 465.1,601.5 464.9,595.7 471.1,584.0 482.8,578.6 484.5,574.5 483.6,570.3 490.0,566.8 493.3,570.6 499.0,570.1 516.4,560.8 519.8,556.0 519.8,553.2 525.5,553.5 529.6,556.0 534.8,556.9 539.8,556.0 542.3,554.1 544.8,548.9 544.7,543.7 542.6,537.8 539.1,533.8 535.1,532.2 535.4,526.0 536.1,526.0 532.5,517.2 527.1,510.2 518.2,501.3 505.8,471.4 500.1,468.4 496.2,468.3 493.4,470.0 490.1,475.5 488.4,476.7 487.5,470.1 485.6,466.0 486.7,466.0 486.1,464.9 488.0,466.0 497.3,467.6 502.0,466.0 504.1,462.7 504.8,458.9 503.2,454.2 505.8,449.0 507.6,442.4 507.8,438.4 510.5,436.0 511.9,436.0 515.9,429.8 516.6,426.5 516.0,420.5 514.2,416.7 505.2,408.0 490.9,385.9 485.7,379.7 472.6,366.7 461.3,358.1 450.9,348.4 447.2,346.4 455.0,339.0 459.0,329.0 458.9,320.1 455.1,313.1 460.2,309.7 465.4,301.5 467.5,307.3 473.1,316.5 482.2,326.3 493.7,330.8 503.3,329.7 507.6,330.6 511.7,333.6 515.2,338.7 521.0,357.1 526.3,387.2 530.0,395.3 534.1,399.8 530.6,406.0 528.6,415.8 529.4,426.4 531.6,436.0 532.9,436.0 545.6,466.0 546.7,466.0 551.8,472.3 564.3,480.2 569.1,481.3 572.4,480.9 577.6,475.7 581.0,466.0 582.0,466.0 588.4,445.4 590.7,442.0 600.4,436.0 602.7,436.0 605.8,434.1 612.2,428.2 617.0,422.0 620.9,419.1 627.3,416.9 634.8,412.4 645.6,401.7 650.5,394.4 652.9,384.0 652.9,373.4 654.3,367.8 658.8,361.0 660.9,351.6 660.2,341.1 660.9,332.7 663.5,321.4 664.4,307.3 663.6,292.1 664.7,278.7 667.8,266.3 673.4,252.5 682.3,235.3 682.7,231.9 681.2,221.4 679.2,218.6 676.4,216.7 665.7,216.0 661.1,212.7 654.9,201.6 644.2,187.9 630.0,173.2 627.0,171.2 610.1,164.4 589.6,165.9 570.9,173.4 552.5,186.6 536.5,195.4 520.1,201.5 516.8,203.6 511.8,193.3 505.8,185.7 494.5,178.2 482.2,174.8 472.1,174.1 463.9,175.4 459.7,175.0 452.1,172.0 443.0,174.6 439.8,176.7 434.2,183.6 427.0,189.6 401.2,207.0 395.7,213.4 393.0,218.7 386.9,222.0 382.5,228.0 379.7,239.0 379.7,248.2 384.8,270.8 378.7,266.0 370.1,262.6 358.9,262.5 350.9,267.4 347.9,266.5 344.4,266.8 334.0,269.8 323.7,274.5 313.5,281.5 304.6,292.2 294.7,309.5 293.5,322.3 295.3,328.1 302.8,335.1 297.8,335.0 288.4,338.6 282.4,344.8 279.1,353.6 279.3,364.6 281.9,372.9 286.7,380.9 277.4,381.4 252.2,393.1 246.0,390.8 236.2,385.2 214.1,380.7 192.4,373.0 180.9,373.5 177.6,375.0 165.9,384.1 148.3,401.0 142.8,411.7 141.4,416.7 135.4,413.8 129.9,413.0 127.6,411.7 118.4,402.5 109.6,395.4 115.0,393.8 119.9,390.3 122.4,387.4 123.7,383.4 123.3,379.2 120.5,373.7 117.4,371.1 111.8,368.8 103.2,368.3 96.2,371.6 93.2,374.8 91.1,379.4 90.9,383.6 92.4,387.6 83.4,388.8 80.6,390.0 77.5,387.7 71.5,385.6 58.1,388.2 42.7,388.0 31.7,378.1 22.9,374.9 13.8,374.7 7.0,368.8 7.0,486.5 10.6,487.1ZM337.9,339.5 345.6,328.7 348.6,334.0 356.0,340.8 344.0,341.7 332.0,344.7 327.9,347.3 326.0,345.2ZM396.8,333.2 401.7,341.2 393.0,344.3 388.3,352.3 381.0,347.3 384.0,346.4 393.1,340.8 395.1,337.9ZM407.2,299.4 411.2,299.4 414.0,300.5 418.3,303.7 407.8,306.8ZM461.3,416.5 458.8,427.4 452.7,429.4 449.0,432.2 444.4,428.8 448.8,420.2 450.2,412.0 450.4,404.5 454.3,409.8ZM418.5,490.5 407.2,487.3 404.9,483.6 403.8,478.0 407.6,466.0 408.6,466.0 414.8,454.0 417.6,453.2 423.8,458.5 430.7,459.8 434.2,459.3 437.6,457.3 443.2,458.0 447.9,455.8 446.2,461.6 448.0,470.9 447.7,474.9 446.0,478.9 445.9,483.3 446.7,485.8 450.0,490.1 451.1,492.6 451.0,496.0 451.8,496.0 443.8,506.0 439.3,500.9 430.3,498.7 426.0,496.0 427.6,496.0ZM463.7,450.2 468.9,453.3 459.3,451.1 452.0,451.4 452.6,449.6 457.5,450.8ZM511.7,546.1 512.5,549.0 511.5,549.3 508.0,547.3 503.9,546.4 504.4,545.0 510.0,544.1 512.5,541.6 513.4,538.5 514.9,538.2ZM454.9,666.0 459.4,666.5 467.1,665.3 469.3,663.0 469.2,659.8 467.3,657.7 449.3,648.7 443.5,647.2 433.6,649.1 428.7,652.8 428.5,656.0 430.6,658.5 433.2,659.3 441.2,658.5 444.6,659.6ZM184.5,665.9 187.6,668.9 191.7,668.5 194.5,665.0 193.9,661.1 189.8,658.3 186.0,658.9 184.0,661.5ZM7.0,756.6 13.7,752.3 15.3,747.9 13.0,743.6 8.3,743.1 7.0,743.5ZM7.0,769.4 7.6,766.3 7.0,764.9ZM93.9,797.3 97.6,799.2 102.6,798.3 104.9,796.0 104.4,790.6 100.5,788.3 95.5,789.3 92.9,792.7ZM47.6,802.0 49.1,806.8 57.0,812.8 61.4,813.9 64.5,811.8 65.1,809.0 64.3,806.7 55.4,799.8 50.5,798.7 48.4,800.1ZM12.0,856.0 16.8,844.9 18.6,832.8 18.6,826.2 16.4,819.9 7.0,808.7 7.0,869.6 8.7,866.8ZM76.8,856.4 77.0,859.9 82.6,869.5 80.7,875.6 80.9,878.6 76.9,880.2 69.7,890.1 60.4,898.3 55.4,906.4 57.5,913.3 62.2,916.0 60.9,916.0 66.3,917.8 70.2,917.8 73.9,916.3 74.5,916.0 73.2,916.0 77.8,912.3 81.1,904.6 86.7,898.7 90.0,892.4 94.1,891.5 97.7,888.2 99.0,884.5 103.5,878.3 105.2,873.4 105.1,869.5 103.6,867.0 93.4,861.8 84.9,854.4 80.5,853.3ZM505.0,941.6 508.5,946.6 512.8,948.1 517.6,948.4 522.6,946.7 527.1,940.4 526.5,934.2 524.2,932.0 519.8,930.4 514.8,930.6 509.0,932.5 505.7,935.3 504.5,938.5ZM929.6,217.8 925.9,217.1 913.2,217.7 875.1,235.1 871.4,238.8 868.4,246.8 868.3,251.9 869.9,255.8 880.8,265.4 894.3,268.7 910.3,266.3 924.1,259.9 937.2,249.0 942.0,235.9 941.8,232.4 940.1,228.7 933.6,220.3ZM754.3,252.0 752.2,254.7 747.2,266.1 747.3,278.2 752.0,291.3 760.9,310.4 770.3,324.3 773.6,326.6 779.2,328.2 784.9,328.0 791.9,324.5 794.3,322.2 799.4,315.1 802.8,304.9 802.8,293.7 796.4,275.1 802.9,274.5 812.7,269.6 815.0,267.5 821.4,258.1 823.1,248.1 822.4,243.9 818.1,235.4 809.1,229.5 805.4,228.3 796.1,228.3 783.1,234.3 776.2,244.3 771.7,243.6 763.1,245.3ZM1539.5,281.5 1530.1,292.8 1520.3,311.0 1520.0,325.8 1521.8,328.8 1528.8,335.1 1523.8,335.0 1514.4,338.6 1508.4,344.8 1505.3,352.8 1505.3,364.6 1507.9,372.9 1512.7,380.9 1503.4,381.4 1478.2,393.1 1472.0,390.8 1462.2,385.2 1440.1,380.7 1418.4,373.0 1406.9,373.5 1403.6,375.0 1391.9,384.1 1374.3,401.0 1368.8,411.7 1367.4,416.7 1361.4,413.8 1355.9,413.0 1353.6,411.7 1344.4,402.5 1335.6,395.4 1341.1,393.8 1345.9,390.3 1348.4,387.4 1349.7,383.4 1349.3,379.2 1346.6,373.7 1343.4,371.1 1337.8,368.8 1328.4,368.4 1321.2,372.4 1318.9,375.3 1316.9,380.3 1317.1,384.4 1318.4,387.6 1309.5,388.8 1306.7,390.0 1303.5,387.7 1297.5,385.6 1284.1,388.2 1268.7,388.0 1257.0,377.8 1248.0,374.7 1239.9,374.7 1230.8,367.2 1223.2,363.0 1210.3,357.9 1213.1,355.8 1217.9,349.3 1221.5,347.0 1229.5,345.0 1233.1,342.8 1235.5,339.4 1237.4,332.8 1236.4,327.4 1232.8,323.2 1224.1,318.6 1214.0,315.0 1201.3,311.8 1190.3,313.9 1185.8,316.4 1178.7,325.0 1176.4,334.5 1177.1,339.8 1182.5,347.0 1193.0,357.5 1182.7,368.2 1180.5,369.1 1173.8,369.2 1167.2,371.5 1163.4,359.5 1156.7,351.7 1153.6,349.8 1144.3,347.9 1131.8,351.6 1106.5,344.0 1104.9,342.1 1110.9,332.8 1113.0,324.4 1112.8,320.8 1107.4,311.4 1100.5,306.8 1091.1,303.7 1080.9,291.8 1084.6,285.5 1086.7,270.5 1082.6,253.0 1073.8,234.0 1065.2,223.1 1061.5,220.4 1055.3,219.6 1047.5,222.6 1043.7,225.4 1041.3,229.6 1039.2,237.9 1040.7,248.0 1039.7,253.1 1034.8,261.6 1034.2,267.3 1035.3,274.4 1036.7,277.4 1040.4,280.8 1045.8,283.1 1049.7,294.6 1057.8,301.0 1049.5,310.2 1046.0,312.3 1033.1,315.8 1025.6,318.8 1009.3,327.9 1004.6,334.5 1004.3,340.7 998.6,344.3 991.9,346.6 988.8,349.5 985.8,358.4 985.8,362.0 982.5,362.1 977.9,359.6 973.5,359.9 969.5,354.9 965.9,352.9 959.4,352.1 952.8,354.4 949.4,356.9 945.2,363.4 944.1,369.8 939.3,380.7 937.9,387.2 938.1,393.2 933.1,393.0 928.9,389.2 923.8,388.7 924.3,383.4 921.9,377.5 921.9,375.3 930.6,353.0 935.9,345.6 958.8,324.2 960.9,320.6 962.2,314.2 962.0,310.1 960.3,306.3 957.4,303.6 951.2,300.0 945.9,298.8 934.8,301.0 921.1,309.0 911.5,317.9 904.3,327.9 898.8,339.1 894.7,353.5 885.2,372.4 884.7,381.9 889.4,389.7 896.2,394.2 910.3,397.8 906.8,399.2 901.0,398.5 894.3,399.9 881.2,406.9 879.0,404.4 873.9,401.7 867.8,401.1 863.9,403.3 860.7,408.1 849.7,397.0 842.3,392.5 832.4,390.3 829.4,383.1 822.0,377.1 816.0,374.4 809.7,373.6 803.3,374.4 798.1,376.2 778.9,387.3 773.7,391.9 764.3,403.2 758.2,413.1 749.1,436.0 750.3,436.2 746.7,440.9 739.7,445.9 735.5,450.4 729.8,460.2 728.6,466.0 729.5,466.0 729.4,473.1 731.0,483.0 735.4,491.0 740.9,494.1 740.4,496.0 741.2,496.0 741.2,502.3 742.7,509.6 733.0,512.9 729.0,517.6 727.4,515.3 724.8,513.9 718.5,500.2 717.5,496.0 718.4,496.0 718.6,492.0 717.8,487.4 714.2,481.1 708.8,478.1 702.5,477.8 699.5,478.9 695.3,482.5 692.1,490.7 692.3,496.0 693.1,496.0 694.3,498.9 690.7,499.1 686.2,501.1 680.7,506.5 678.4,512.1 678.5,525.0 682.2,530.2 685.1,531.9 690.8,531.8 696.7,530.0 695.9,532.8 696.7,535.8 700.2,538.9 698.0,541.8 698.2,546.5 699.7,548.6 705.8,552.2 709.7,556.0 709.9,562.5 693.0,561.9 688.6,562.9 684.4,566.9 683.4,571.6 683.8,580.6 682.6,586.0 683.9,595.7 687.8,599.8 693.2,599.9 694.6,600.8 693.0,604.3 688.5,607.9 685.3,611.9 680.6,625.5 673.4,630.9 670.1,634.6 659.7,652.1 658.3,656.1 658.1,660.1 660.0,666.2 660.0,671.1 656.5,682.1 658.8,689.3 675.3,709.2 684.8,716.3 690.9,719.7 714.2,717.8 726.9,714.2 732.1,713.9 740.1,719.3 748.2,720.9 748.6,724.9 746.7,733.5 747.6,737.9 756.5,750.2 761.8,768.5 756.6,784.0 755.8,789.0 756.9,796.0 764.0,813.2 768.2,828.9 775.4,844.4 777.7,856.0 780.3,859.7 785.2,862.1 789.5,862.2 796.4,860.1 808.0,858.8 812.7,857.3 820.6,851.2 830.0,839.4 833.7,830.8 834.7,824.8 840.5,820.1 843.2,815.6 842.2,803.3 843.0,801.3 855.7,791.4 859.0,787.1 860.5,782.6 859.9,772.3 855.1,755.3 855.1,753.0 857.5,747.1 860.8,741.5 883.5,718.9 892.7,704.1 896.1,696.2 896.7,692.6 895.5,689.9 891.6,688.2 872.4,691.9 870.5,691.7 876.1,690.2 891.7,683.8 916.4,669.8 919.3,666.6 925.2,655.5 924.7,650.5 919.4,646.0 937.7,646.6 944.9,647.7 951.5,653.0 953.4,658.3 957.6,661.5 963.1,662.4 965.1,675.0 972.5,693.1 977.3,702.4 979.7,705.6 982.4,707.2 984.6,707.1 986.8,705.6 988.6,712.5 993.1,715.5 998.3,713.7 1000.3,711.3 1001.3,707.8 1000.1,702.9 996.3,697.9 993.6,695.9 995.8,681.5 996.9,679.6 1011.5,667.0 1014.8,665.5 1018.6,660.6 1029.6,658.1 1035.4,667.3 1037.2,675.6 1039.5,678.9 1041.9,680.1 1048.7,679.4 1051.1,691.0 1050.9,704.2 1057.5,713.9 1057.6,714.8 1050.5,710.2 1044.0,709.6 1040.3,713.9 1041.7,719.8 1044.2,724.0 1052.4,732.4 1066.5,749.9 1074.7,755.3 1076.3,758.9 1082.4,761.4 1100.6,764.6 1108.7,764.7 1115.6,766.7 1136.5,766.0 1136.6,768.5 1138.1,770.5 1140.2,771.2 1143.6,770.8 1150.2,767.8 1154.6,764.0 1155.5,761.0 1154.1,758.3 1149.8,757.3 1141.7,760.3 1140.2,757.7 1136.9,756.5 1111.3,756.3 1105.2,752.5 1090.9,751.1 1083.5,749.1 1083.7,744.7 1082.2,740.3 1077.4,735.0 1074.8,730.3 1076.4,728.6 1076.7,725.9 1074.9,721.8 1073.3,713.1 1061.3,699.4 1062.4,692.1 1068.6,697.7 1073.1,700.3 1074.6,704.0 1077.4,705.0 1079.5,704.6 1082.8,702.8 1087.0,698.1 1091.1,695.8 1093.6,692.8 1094.4,689.3 1093.1,680.6 1083.9,667.0 1083.8,665.5 1086.3,662.3 1087.3,661.6 1085.2,666.4 1086.6,670.3 1090.3,672.6 1094.1,672.5 1098.1,670.2 1100.2,666.8 1100.6,664.3 1099.3,660.7 1117.5,653.6 1124.2,648.4 1124.6,653.8 1127.2,657.6 1131.4,658.4 1134.4,656.5 1138.4,646.0 1138.1,643.3 1136.3,640.3 1132.0,639.0 1136.7,631.9 1137.9,625.4 1137.0,622.9 1136.9,615.1 1131.4,604.2 1138.2,598.4 1139.1,595.3 1138.6,592.7 1136.9,590.8 1132.6,589.2 1128.5,589.1 1132.8,586.7 1136.4,586.0 1141.2,587.4 1141.2,592.1 1142.9,595.5 1146.1,598.0 1146.1,607.4 1148.8,610.2 1151.2,610.9 1159.0,607.8 1157.1,611.4 1157.9,619.5 1159.6,622.8 1162.1,624.4 1167.1,623.5 1170.8,618.2 1177.3,616.0 1179.5,614.1 1183.1,614.1 1187.9,610.3 1195.8,608.7 1201.2,604.4 1206.0,588.9 1206.2,584.2 1204.9,578.9 1211.1,577.5 1216.2,573.7 1217.7,571.5 1218.6,566.9 1217.2,563.4 1209.6,557.2 1212.8,552.3 1213.3,547.1 1212.4,536.8 1213.3,526.0 1213.9,526.0 1211.6,514.8 1209.4,509.8 1207.2,507.3 1204.7,506.2 1201.5,506.4 1198.6,508.2 1193.7,506.1 1189.0,506.4 1197.4,496.0 1198.4,496.0 1203.9,490.1 1207.7,487.5 1223.2,485.4 1236.7,487.1 1244.3,486.0 1249.9,482.3 1257.8,471.5 1261.1,470.1 1250.0,483.5 1244.3,496.0 1245.1,496.0 1243.9,505.0 1244.3,514.2 1246.0,526.0 1248.1,530.0 1251.4,532.4 1253.8,533.2 1256.3,532.8 1264.7,525.8 1276.6,507.7 1279.0,502.1 1279.1,496.0 1279.9,496.0 1279.1,493.4 1282.2,487.1 1282.6,481.1 1288.6,480.2 1295.0,481.2 1301.3,480.3 1317.5,466.9 1321.4,466.0 1332.5,460.8 1334.5,458.7 1335.7,455.3 1336.2,449.5 1334.7,445.4 1339.5,439.3 1351.9,446.6 1358.0,447.1 1363.2,444.9 1367.0,438.1 1371.4,444.2 1377.4,448.2 1375.0,451.7 1372.6,461.1 1372.7,466.0 1373.7,466.0 1375.4,471.9 1381.0,479.5 1387.9,482.5 1389.6,486.2 1393.6,489.5 1398.2,490.6 1391.8,496.0 1393.1,496.0 1380.5,505.3 1379.4,510.7 1380.7,513.2 1383.0,514.9 1389.6,514.4 1401.4,509.7 1406.8,506.5 1414.6,498.7 1417.4,500.9 1421.8,501.9 1428.4,499.4 1431.6,496.0 1432.6,496.0 1433.6,494.1 1433.4,486.5 1438.9,484.2 1446.6,477.6 1452.7,480.4 1464.0,482.9 1475.9,491.1 1484.2,493.3 1491.7,505.7 1487.8,508.2 1486.1,512.4 1486.1,515.6 1488.1,521.1 1491.4,525.6 1496.5,527.7 1502.4,526.0 1503.7,523.6 1504.5,525.3 1503.5,526.0 1504.6,526.0 1502.8,527.8 1501.8,530.6 1502.7,535.0 1505.7,538.5 1515.8,546.3 1518.1,556.5 1517.2,579.7 1518.6,586.0 1530.4,607.3 1534.1,610.8 1539.7,613.4 1542.1,616.0 1550.9,634.1 1559.0,645.3 1559.0,344.4 1553.9,347.3 1552.0,345.2 1559.0,342.3 1559.0,270.2 1549.8,274.5ZM773.3,612.9 758.3,606.9 760.2,598.3 768.0,601.7 773.2,600.2 779.9,591.1 780.7,587.4 783.6,586.7 786.5,591.3 789.5,599.2 794.5,602.3 798.7,602.0 801.1,599.7 801.9,595.2 804.1,591.9 803.9,588.6 802.3,586.0 803.1,584.4 805.5,586.0 805.3,589.7 808.1,596.6 811.9,600.3 827.6,603.6 832.1,603.5 837.0,602.0 834.9,610.0 831.9,615.7 825.2,615.0 817.9,617.1 812.6,616.0 814.1,616.0 797.8,610.4 792.1,609.7 786.7,611.8 783.8,615.6 783.6,618.3 781.9,618.6 777.2,617.1ZM762.5,586.9 758.5,589.0 756.9,591.9 753.4,591.1 756.8,585.5 756.4,578.0 767.0,585.9 765.9,586.0 767.9,586.2ZM743.3,587.5 747.0,591.9 731.1,592.7 718.4,596.9 722.2,591.6 723.2,586.0 725.5,582.8 731.7,578.8 734.0,575.7 734.5,572.6 738.6,573.3 743.3,572.1 743.7,575.8 742.1,581.0ZM861.9,682.1 851.1,668.1 848.5,658.1 842.9,645.1 845.8,649.4 850.8,660.9 860.1,676.0ZM1136.7,765.9 1136.7,766.0 1136.3,766.0ZM1165.3,579.9 1169.8,573.8 1174.8,573.7 1180.7,570.7 1197.2,551.3 1198.3,555.5 1197.7,556.0 1198.5,556.0 1196.6,558.5 1195.7,563.8 1193.3,565.7 1191.1,569.9 1190.6,575.5 1192.8,579.0 1189.6,588.6 1187.9,590.3 1184.1,591.5 1178.9,597.5 1168.3,600.6 1161.4,606.0 1163.5,601.2 1163.5,595.4 1161.6,590.3 1158.4,586.0ZM785.0,466.5 785.3,468.2 784.7,466.0ZM844.5,436.0 846.1,436.0 844.6,436.8ZM786.8,483.2 788.9,475.9 793.3,480.5 793.4,484.0 789.0,486.0 785.9,489.9 784.3,496.0 785.1,496.0 784.5,503.0 777.1,503.5 779.3,501.3 781.1,496.0 782.0,496.0 783.0,489.6ZM826.5,557.9 827.1,561.1 830.7,565.6 835.3,567.0 843.6,563.9 855.5,573.3 849.3,574.1 834.9,569.9 830.1,570.6 823.6,573.3 819.7,573.5 819.0,573.0 819.4,570.6 824.7,559.6ZM829.4,616.2 828.7,616.0 831.9,616.0ZM887.7,628.5 897.1,638.2 904.1,641.1 903.2,642.2 901.0,643.0 897.8,642.1ZM1410.5,665.9 1413.6,668.9 1417.8,668.5 1420.5,665.0 1419.9,661.1 1415.8,658.3 1412.0,658.9 1410.0,661.5ZM1141.1,733.9 1146.3,731.5 1147.7,727.9 1146.9,725.5 1142.8,723.7 1138.9,725.0 1131.5,724.6 1126.6,726.7 1124.1,721.8 1125.9,713.2 1124.0,709.4 1119.9,706.1 1126.9,700.6 1129.6,697.5 1130.4,694.7 1131.8,699.1 1134.2,702.3 1131.4,707.5 1131.9,709.7 1133.9,711.4 1137.5,711.0 1143.8,714.6 1148.5,714.8 1151.8,711.9 1153.5,704.0 1152.5,699.9 1149.4,696.2 1150.3,691.0 1149.7,688.8 1145.0,685.9 1143.3,682.2 1138.1,679.5 1139.6,673.7 1138.9,667.6 1135.6,664.1 1130.5,663.7 1128.1,664.9 1125.7,668.2 1124.7,676.0 1126.3,684.5 1128.4,687.2 1132.4,688.7 1130.8,690.5 1130.4,693.3 1129.3,691.1 1127.2,690.0 1122.9,691.7 1115.4,700.8 1115.5,703.6 1117.3,705.7 1112.8,707.0 1096.7,721.5 1089.3,723.8 1086.5,727.6 1086.8,732.6 1090.0,741.6 1093.7,745.0 1107.0,749.0 1111.3,749.1 1116.0,747.3 1118.6,743.8 1120.2,737.6 1122.1,735.0 1120.7,742.8 1122.8,750.7 1124.6,753.4 1126.7,754.2 1130.4,753.4 1132.6,749.7 1136.2,751.5 1140.1,749.5 1140.8,745.7 1138.2,739.8 1140.7,737.5ZM1151.5,736.0 1153.7,737.5 1156.9,737.5 1160.5,732.9 1161.1,729.8 1160.3,726.1 1158.3,723.4 1155.0,721.8 1151.7,722.5 1149.5,725.6ZM1175.0,731.1 1168.7,730.3 1163.4,732.2 1161.5,735.3 1162.4,738.4 1155.6,738.7 1153.1,739.8 1151.4,742.4 1151.9,745.3 1154.1,746.9 1159.9,747.9 1164.1,747.7 1167.1,745.6 1170.9,748.7 1176.2,749.2 1185.4,752.9 1187.6,755.5 1186.4,760.3 1189.3,763.4 1192.7,763.1 1199.9,766.4 1204.5,766.4 1208.6,764.6 1211.0,762.1 1219.4,768.1 1223.7,769.9 1230.6,770.8 1233.2,769.3 1233.8,767.0 1232.9,764.6 1228.8,761.3 1226.2,756.7 1233.0,756.6 1239.4,752.7 1241.4,748.3 1239.0,743.6 1233.7,743.2 1223.8,746.8 1221.7,749.1 1219.0,748.3 1215.1,743.8 1210.7,741.4 1189.8,734.9 1184.3,736.0 1179.9,738.9 1178.4,734.3ZM1319.9,797.3 1323.6,799.2 1328.6,798.3 1330.9,796.0 1330.4,790.6 1326.5,788.3 1321.5,789.3 1318.9,792.7ZM883.5,771.3 873.2,782.8 868.7,785.1 865.9,789.9 865.0,800.5 863.1,808.5 863.9,814.1 868.1,822.3 874.3,825.4 880.6,823.3 884.7,817.6 893.7,787.8 893.5,781.8 891.6,775.2 888.0,771.3 885.8,770.6ZM1273.6,802.0 1275.2,806.8 1283.0,812.8 1287.4,813.9 1290.6,811.8 1291.2,809.0 1290.3,806.7 1281.5,799.8 1276.5,798.7 1274.5,800.1ZM1156.6,850.1 1164.3,849.2 1167.4,850.1 1173.5,854.9 1177.0,860.2 1182.3,861.0 1185.0,859.9 1191.1,867.7 1193.2,872.6 1197.9,876.7 1204.5,878.9 1209.6,879.2 1212.3,878.1 1213.9,879.4 1209.9,880.7 1206.7,886.0 1209.2,895.1 1211.3,898.9 1214.0,901.4 1216.3,902.3 1220.6,902.0 1224.2,899.9 1227.3,896.3 1229.3,890.6 1229.4,886.0 1228.2,883.9 1224.0,880.3 1216.7,880.2 1220.9,879.3 1226.7,874.4 1230.7,872.7 1234.5,867.2 1237.7,856.0 1242.7,845.2 1244.7,832.8 1244.6,826.0 1242.4,819.9 1232.7,808.4 1228.5,801.1 1220.3,794.1 1217.6,784.0 1212.2,778.1 1210.1,772.0 1207.1,767.3 1203.0,766.8 1200.6,768.6 1195.7,788.7 1192.5,787.5 1185.0,781.8 1186.5,775.9 1185.9,772.4 1184.6,770.8 1172.8,768.4 1168.3,768.7 1163.9,771.0 1158.1,779.3 1151.2,777.3 1146.2,779.0 1134.9,788.8 1131.9,792.4 1130.5,795.8 1129.0,796.8 1116.5,800.0 1103.3,806.5 1102.4,811.1 1103.6,818.8 1102.5,821.9 1102.5,826.8 1107.6,842.9 1107.2,853.6 1110.2,859.7 1115.9,862.5 1122.1,862.6 1127.0,860.4 1137.6,859.1 1143.1,857.3 1148.1,853.3ZM1302.8,856.4 1303.0,859.9 1308.6,869.5 1306.7,875.6 1306.9,878.6 1302.9,880.2 1295.7,890.1 1286.4,898.3 1281.4,906.4 1283.5,913.3 1288.2,916.0 1286.9,916.0 1292.3,917.8 1296.3,917.8 1299.9,916.3 1300.5,916.0 1299.2,916.0 1303.9,912.3 1307.1,904.6 1312.7,898.7 1316.0,892.4 1320.1,891.5 1323.7,888.2 1325.0,884.5 1329.6,878.3 1331.2,873.4 1331.2,869.5 1329.6,867.0 1319.4,861.8 1311.0,854.4 1306.6,853.3Z" fill="#4e8fe8" filter="url(#b1)"/>
<path d="M927.8,220.5 913.9,220.7 876.6,237.8 873.7,240.9 871.5,247.4 871.2,250.7 872.2,253.6 882.2,262.7 894.6,265.5 909.4,263.3 922.3,257.4 934.7,247.2 938.8,236.2 938.7,233.1 937.5,230.3 931.5,222.5ZM761.9,249.4 755.6,255.1 750.6,264.9 750.5,278.2 759.0,299.8 768.1,316.2 773.8,323.2 780.6,325.3 783.2,325.2 791.8,320.4 796.6,313.8 799.8,304.3 799.8,294.3 792.2,271.9 801.3,271.8 811.9,266.3 818.3,257.9 819.7,245.7 816.5,238.4 814.5,236.3 806.1,231.6 796.4,231.4 784.6,237.2 779.4,244.8 778.7,249.0 772.6,246.6ZM7.0,337.3 8.1,330.2 7.0,327.8ZM958.5,309.4 955.7,306.2 948.3,302.2 936.9,303.6 924.1,310.6 913.9,319.8 906.1,330.9 901.6,340.3 897.6,354.8 888.2,373.0 887.7,381.1 892.1,387.9 896.9,391.1 907.2,394.2 913.8,394.8 918.5,392.2 921.3,385.2 918.7,378.3 918.7,374.9 927.9,351.4 933.5,343.6 956.9,321.5 959.1,313.7ZM110.7,371.8 102.9,371.5 96.2,375.9 94.3,379.5 94.0,382.9 95.8,387.3 97.8,389.5 102.2,391.6 108.6,392.4 114.3,390.7 119.3,386.5 120.6,381.7 118.9,376.8 116.0,373.9ZM678.7,436.0 670.7,422.9 664.9,419.7 660.8,419.7 650.4,423.6 646.6,421.3 643.2,420.9 638.5,421.9 635.6,423.8 631.5,429.2 630.8,434.8 633.5,442.6 636.1,445.2 636.8,448.4 639.6,452.1 645.9,454.5 655.9,455.9 662.7,454.0 668.6,450.5 676.4,443.3 677.6,440.7 677.9,436.0ZM16.6,484.1 22.2,480.6 30.5,469.5 42.5,466.0 34.6,474.0 26.4,484.2 20.8,496.0 20.3,514.1 22.0,526.0 23.9,529.3 26.9,531.2 28.9,531.4 37.1,524.6 48.8,506.7 51.0,501.3 51.5,496.0 50.3,492.5 52.2,490.9 53.8,486.9 54.1,480.7 55.1,479.2 62.8,477.8 69.0,478.8 74.4,478.2 88.7,466.0 105.0,458.6 106.9,456.0 107.5,450.2 105.2,444.4 108.5,442.0 111.9,436.0 113.2,436.0 126.8,444.1 132.0,444.4 135.7,442.7 138.5,436.5 142.2,435.0 146.9,441.9 150.8,445.0 162.9,447.5 158.8,447.5 154.9,448.7 151.9,451.8 150.4,455.6 149.2,461.3 149.4,466.0 153.4,474.3 157.1,478.2 163.7,480.4 165.1,484.4 168.8,487.5 176.1,488.6 173.2,493.2 169.7,496.0 170.6,496.0 156.4,506.1 155.4,509.9 157.4,512.8 163.0,512.5 174.7,507.7 183.3,501.7 188.2,496.0 189.5,496.0 191.9,498.9 195.4,499.8 201.3,497.6 205.2,493.8 205.6,489.1 203.7,485.3 198.8,483.6 199.9,482.0 202.7,484.4 208.3,483.9 212.0,482.0 220.1,475.1 227.4,478.1 238.7,480.7 241.8,482.0 251.0,489.1 260.1,491.7 269.6,507.8 265.6,507.8 262.9,510.2 262.0,514.3 263.8,520.1 265.8,523.2 268.7,525.5 272.9,526.0 275.7,523.1 276.4,520.1 276.0,516.8 281.9,526.9 279.8,527.4 278.1,529.1 278.3,534.1 291.6,545.3 293.7,556.4 292.8,579.7 294.3,585.8 305.3,606.1 308.9,609.5 314.7,612.3 317.7,616.0 327.8,636.3 335.4,646.0 343.4,653.5 346.4,653.1 347.6,651.9 346.8,647.8 336.1,631.7 354.0,651.1 356.3,654.4 357.5,661.3 359.6,665.3 366.9,670.7 386.0,678.9 396.2,679.2 408.3,686.4 418.4,689.0 423.5,693.9 426.0,698.5 432.2,702.2 436.3,706.0 444.9,708.9 447.0,707.7 447.4,705.0 448.6,704.2 452.4,708.1 452.9,717.6 450.0,723.8 445.9,727.3 443.2,731.8 441.9,737.5 443.5,741.9 440.1,748.0 440.2,751.7 446.5,759.2 458.4,782.8 464.8,788.6 476.3,795.7 477.5,802.7 477.0,813.2 471.6,854.3 467.2,870.1 463.7,901.4 458.9,918.3 459.0,931.7 460.4,938.1 463.9,946.0 475.2,958.8 479.3,961.4 484.7,963.3 490.4,963.1 495.9,961.1 499.5,958.4 500.0,955.0 489.9,945.7 488.0,936.3 488.6,932.9 496.2,919.2 496.4,913.9 494.9,910.3 495.2,908.4 500.5,900.0 501.8,894.6 501.5,888.0 505.0,887.6 507.2,886.0 509.0,883.7 510.8,879.0 517.6,877.6 522.6,874.9 525.6,870.4 526.3,865.6 525.4,860.2 530.0,861.0 533.7,860.4 539.7,856.0 554.3,834.6 556.1,826.0 559.2,821.6 578.8,811.8 582.1,808.4 587.4,796.0 589.6,779.2 600.1,766.0 602.1,761.5 602.2,754.0 601.1,750.3 598.4,747.8 590.8,744.5 587.0,741.6 583.1,739.9 571.8,739.2 564.5,734.4 553.6,730.9 550.3,728.0 546.4,717.7 543.7,714.1 537.4,710.8 524.6,708.7 509.4,694.5 506.2,693.5 488.3,693.1 482.5,690.2 479.5,689.7 477.1,690.5 475.1,688.8 472.4,688.8 461.4,694.3 456.6,700.8 452.2,697.8 448.6,697.5 442.2,699.2 440.4,698.6 437.0,694.8 436.4,692.4 437.4,681.9 435.6,678.1 431.9,675.8 428.3,674.9 420.1,674.8 424.6,659.4 424.0,656.3 422.8,655.1 419.9,654.8 412.2,656.4 409.1,659.0 407.4,663.8 405.1,665.4 397.3,665.4 393.2,663.3 391.5,661.2 388.5,651.4 390.8,636.0 395.2,631.4 399.8,629.0 413.2,630.3 416.3,628.8 417.5,626.5 420.9,625.9 426.2,627.5 431.4,627.6 434.0,629.3 436.1,636.6 440.5,644.1 444.2,645.5 446.9,643.8 448.3,640.0 448.4,636.4 445.2,625.8 444.8,621.6 452.2,612.9 462.3,605.2 463.6,601.3 463.5,595.3 469.6,583.1 481.5,577.5 482.9,574.7 481.4,571.0 482.6,569.0 491.0,564.4 493.3,568.8 498.1,568.7 514.9,560.0 518.0,556.0 517.8,552.4 516.0,550.6 513.7,550.5 511.2,551.9 507.4,549.0 501.0,548.0 502.7,542.6 508.5,542.9 511.3,540.0 511.3,536.8 517.7,535.6 513.6,545.7 514.2,548.4 516.7,551.0 526.0,551.7 531.4,554.8 536.1,555.6 540.5,553.3 543.0,548.2 542.9,544.0 541.0,538.7 538.0,535.2 533.0,533.2 533.9,526.0 532.3,523.6 530.7,518.1 516.5,502.4 513.1,496.0 504.6,473.9 502.7,471.8 498.5,470.4 496.1,470.9 489.9,479.1 487.4,479.9 486.1,477.3 485.1,470.2 482.9,466.0 483.6,466.0 481.6,463.5 477.5,462.0 472.7,458.2 467.8,455.7 455.6,453.4 452.0,454.5 448.9,461.8 450.3,470.9 448.2,482.6 453.4,491.9 453.9,496.0 451.8,500.1 447.5,503.8 445.1,508.0 446.4,521.5 444.1,518.3 442.5,507.9 438.9,503.1 429.4,500.5 416.8,492.3 411.3,490.4 407.5,490.3 405.5,488.9 401.5,480.9 402.6,472.8 405.0,466.0 411.5,453.7 413.4,451.6 418.5,449.2 419.7,451.5 424.5,455.8 431.5,457.2 437.0,454.6 442.1,455.4 446.9,453.3 449.2,450.9 451.1,445.7 457.2,448.1 463.8,447.4 466.5,448.0 478.8,457.4 491.1,464.6 498.0,465.6 500.0,464.3 501.9,461.1 501.9,458.1 499.9,454.2 503.2,448.3 505.0,441.9 505.1,436.9 508.8,435.1 513.2,428.1 512.4,419.5 502.9,409.9 488.3,387.6 477.7,375.8 470.6,369.1 454.7,356.6 449.1,350.9 441.8,347.2 436.8,346.5 445.7,343.6 452.6,336.9 455.9,328.4 456.0,321.2 452.3,314.5 449.6,312.2 458.0,307.6 466.7,292.0 466.6,295.4 470.3,305.9 476.0,315.3 483.6,323.4 494.2,327.8 503.4,326.5 508.9,327.7 513.9,331.4 518.0,337.2 524.0,356.4 529.2,386.2 533.0,394.2 537.2,398.4 537.4,400.5 533.6,407.1 531.6,416.2 532.5,426.1 534.6,435.1 535.8,436.0 548.7,466.0 553.3,470.4 565.8,478.3 570.3,479.0 573.0,477.8 575.5,474.6 579.3,466.0 585.9,444.2 588.8,440.1 604.0,431.7 609.9,426.1 614.9,419.8 619.5,416.3 626.0,414.1 633.0,410.0 643.3,399.6 647.6,393.1 649.8,383.6 649.8,373.0 651.5,366.5 655.9,360.0 657.8,351.2 657.1,341.1 657.8,332.2 660.4,321.2 661.3,307.5 660.5,292.1 661.7,278.2 664.9,265.3 670.6,251.1 679.4,234.5 678.3,222.6 674.7,219.4 664.7,219.1 658.7,214.8 652.3,203.3 641.8,189.8 627.7,175.4 609.4,167.5 590.2,169.0 572.1,176.3 554.1,189.3 537.8,198.3 520.7,204.7 515.0,209.5 513.1,202.1 508.9,194.6 502.5,186.8 493.8,181.3 482.0,177.9 472.2,177.2 464.0,178.5 458.8,178.0 452.0,175.1 444.1,177.6 442.1,178.9 436.4,185.8 428.9,192.2 403.3,209.3 398.3,215.2 395.6,220.5 393.7,222.4 389.0,224.4 384.8,230.2 382.8,239.3 382.8,248.4 386.5,266.0 392.7,281.8 377.7,269.1 368.7,265.5 358.9,265.7 351.7,271.5 346.4,269.6 335.5,272.6 325.3,277.2 315.7,283.7 306.7,294.6 297.4,311.5 296.6,323.0 297.4,325.8 305.9,333.7 315.1,339.0 325.8,342.1 335.7,337.2 337.8,335.3 345.7,322.0 350.6,331.5 359.3,339.3 370.7,344.1 380.7,344.2 390.0,339.2 392.3,336.7 394.9,327.8 392.1,318.9 395.5,319.2 398.2,318.3 403.8,311.6 404.9,303.3 402.1,293.9 406.0,296.2 411.7,296.3 415.6,297.7 421.1,301.8 429.3,306.1 418.3,306.9 410.8,308.8 403.7,312.4 399.0,320.1 398.8,329.8 402.7,337.8 409.3,343.0 418.3,346.4 422.3,346.9 415.9,348.6 413.3,351.1 406.5,344.3 403.6,343.9 397.0,345.6 394.0,347.9 389.0,358.7 384.5,353.0 377.0,348.6 367.6,345.4 356.7,343.9 345.2,344.6 333.1,347.7 327.1,351.9 324.1,347.7 315.6,341.8 307.6,338.8 297.9,338.2 290.8,340.7 285.8,345.5 282.1,355.1 282.2,363.2 284.7,371.6 289.5,379.5 296.8,388.2 287.2,384.1 279.5,384.0 252.9,396.3 250.4,396.1 236.2,388.5 229.3,386.4 213.2,383.6 190.8,375.8 181.6,376.5 167.9,386.5 150.7,403.1 145.3,413.7 143.1,422.9 138.9,418.8 133.8,416.5 129.0,416.0 125.7,414.2 116.3,404.8 105.7,396.0 99.7,392.9 91.6,390.7 84.2,391.8 79.5,394.2 77.3,391.1 70.6,388.7 58.2,391.4 41.4,391.3 30.1,380.8 22.2,377.9 14.7,378.2 12.1,377.4 7.0,372.7 7.0,484.1 10.6,484.7ZM484.4,256.0 494.6,240.6 484.8,265.7 478.8,275.0 471.6,280.9ZM359.1,294.6 355.7,295.3 356.5,291.6ZM442.5,426.2 445.6,419.9 447.1,412.2 446.6,400.6 450.6,400.2 457.0,408.2 462.1,413.3 465.1,415.0 462.1,428.4 460.5,430.1 453.7,432.4 449.5,435.9 450.3,436.0 449.3,437.4 447.9,436.0 449.0,436.0 439.9,428.7ZM376.6,407.9 386.2,403.3 387.4,402.5 386.1,406.0ZM424.9,397.5 422.3,404.0 419.8,400.3 419.2,394.7ZM313.6,393.8 314.2,394.9 312.9,394.1ZM333.6,627.5 332.8,626.2 331.3,622.5 332.5,624.0ZM821.1,380.1 814.6,377.3 809.7,376.7 804.1,377.4 798.4,379.5 780.3,390.1 776.0,394.0 763.9,409.2 758.9,419.3 752.7,436.0 753.5,436.0 750.5,440.9 740.9,448.4 734.3,456.7 731.3,466.0 731.9,466.0 732.3,478.0 734.6,485.8 737.2,489.4 741.2,491.7 744.5,491.9 742.7,496.0 744.8,511.3 739.0,512.4 733.8,514.9 728.2,523.3 727.0,518.0 723.0,515.1 716.6,500.9 715.5,496.0 716.3,492.1 715.2,487.0 712.3,482.5 707.3,480.1 701.5,480.4 696.6,484.7 694.5,490.4 694.6,495.4 697.7,501.2 690.8,501.3 686.5,503.3 682.4,507.6 680.5,512.3 680.4,524.1 683.8,529.2 686.3,530.3 690.9,530.0 695.0,528.8 699.6,526.0 700.9,528.1 697.7,532.8 699.3,536.5 701.8,537.2 710.6,535.3 709.7,538.0 703.6,539.0 700.8,540.8 699.7,544.9 700.9,547.2 709.1,552.6 711.4,556.0 711.9,560.4 710.7,564.7 693.6,563.5 689.4,564.4 686.1,567.2 685.0,571.7 685.5,580.8 684.3,586.0 685.4,595.2 688.4,598.4 693.6,598.5 696.8,600.7 694.3,605.1 689.5,608.9 686.6,612.6 681.7,626.4 674.3,631.9 671.1,635.6 662.9,648.6 659.4,656.9 659.4,660.6 661.2,666.0 661.2,671.2 657.8,682.3 660.0,688.8 661.5,691.5 668.9,698.8 674.2,706.4 685.4,715.3 691.6,718.6 695.6,718.6 703.8,716.9 714.1,716.6 726.7,713.0 732.3,712.7 740.6,718.2 747.1,719.0 749.3,720.3 749.8,725.0 747.9,733.6 748.8,737.6 757.6,749.6 763.0,768.3 762.9,770.9 757.8,784.0 757.5,793.0 765.3,812.8 769.5,828.4 776.8,843.9 779.5,856.0 781.3,858.5 784.9,860.5 789.3,860.7 796.1,858.6 807.7,857.3 811.9,856.0 811.2,856.0 819.6,850.3 828.8,838.6 832.4,830.3 833.5,824.2 839.6,819.2 842.0,815.1 840.9,803.1 841.9,800.6 854.8,790.5 857.9,786.5 859.3,782.2 858.7,772.6 853.9,755.5 853.9,752.8 856.4,746.6 859.9,740.7 882.6,718.2 891.6,703.6 895.0,695.8 895.4,692.6 894.5,690.7 891.6,689.5 872.5,693.2 870.1,692.9 868.1,690.5 875.4,689.2 891.0,682.8 915.8,668.6 923.7,656.2 923.9,652.1 920.9,648.6 914.6,644.7 913.0,642.7 915.0,643.8 922.1,645.2 945.4,646.5 953.0,652.4 953.6,656.6 957.6,660.0 962.1,661.3 964.2,660.6 966.3,674.5 976.3,698.0 980.2,704.4 982.4,706.0 984.4,706.0 988.0,702.8 989.5,711.7 993.2,714.3 997.4,712.8 999.2,710.8 1000.1,707.7 999.3,704.0 997.3,700.9 992.1,696.7 994.0,688.7 994.6,681.2 996.0,678.8 1007.9,668.3 1013.9,664.6 1018.1,659.4 1030.2,656.4 1036.5,666.7 1038.0,670.6 1038.4,675.2 1040.4,678.1 1042.0,678.9 1049.3,678.1 1049.8,678.7 1052.3,690.8 1052.1,703.9 1058.6,713.5 1059.8,718.3 1050.5,711.5 1045.2,710.5 1043.6,711.1 1041.5,713.9 1042.8,719.3 1045.1,723.2 1053.3,731.6 1067.3,749.0 1071.6,752.4 1076.1,754.3 1075.9,756.4 1077.0,758.0 1082.9,760.3 1100.8,763.4 1109.1,763.4 1112.2,764.9 1115.7,765.4 1130.3,765.4 1139.1,763.8 1140.5,760.4 1138.3,758.1 1110.9,757.6 1105.0,753.6 1090.7,752.3 1082.1,750.4 1082.6,745.1 1081.3,741.1 1076.4,735.6 1072.7,729.6 1074.9,728.7 1075.5,726.3 1073.7,721.9 1072.2,713.6 1060.1,700.0 1061.5,689.6 1069.3,696.7 1074.0,699.3 1074.8,702.5 1077.4,703.8 1081.7,702.0 1084.8,698.3 1090.2,694.9 1092.6,691.9 1093.0,685.1 1089.9,677.6 1082.6,667.4 1082.5,665.3 1083.5,663.4 1088.0,659.5 1091.2,659.5 1086.8,665.0 1087.2,668.8 1090.6,671.4 1095.2,670.7 1097.6,668.9 1099.3,665.7 1098.9,662.3 1097.2,660.7 1097.6,660.2 1116.7,652.5 1120.4,650.1 1126.6,644.1 1133.7,634.5 1136.4,628.8 1135.6,615.8 1129.8,605.5 1129.9,603.6 1137.2,597.3 1137.3,593.5 1136.2,592.1 1132.6,590.7 1125.8,591.5 1124.1,590.0 1132.5,585.5 1136.6,584.6 1141.9,586.1 1142.7,587.2 1142.3,590.9 1143.8,594.2 1147.7,597.7 1147.6,607.0 1151.1,609.4 1157.5,607.0 1160.8,604.3 1162.0,600.9 1162.1,596.2 1160.2,590.9 1157.0,585.7 1161.5,581.8 1169.0,572.3 1174.4,572.2 1179.6,569.5 1191.7,556.0 1198.5,545.8 1199.8,554.5 1201.6,556.4 1198.5,558.4 1196.9,565.0 1194.8,566.4 1192.8,570.0 1192.3,575.6 1195.0,578.4 1190.9,589.4 1188.4,591.7 1185.1,592.6 1179.5,598.9 1169.0,601.9 1163.0,607.2 1160.6,608.2 1158.5,611.5 1159.5,619.9 1161.8,622.9 1165.7,622.7 1170.1,616.8 1174.5,616.0 1179.1,612.3 1182.5,612.8 1187.5,608.9 1195.2,607.4 1199.9,603.6 1203.8,592.1 1204.7,586.0 1203.8,580.7 1201.9,576.3 1205.6,577.3 1210.8,575.9 1215.6,571.9 1217.0,567.0 1215.8,564.3 1207.0,557.3 1208.8,556.0 1211.0,552.2 1210.6,536.6 1211.9,526.0 1209.6,515.3 1207.6,510.7 1204.3,508.3 1201.2,508.7 1198.9,511.2 1193.6,508.2 1189.1,508.5 1186.3,507.4 1191.1,500.3 1202.4,488.3 1206.8,485.3 1216.7,483.7 1229.3,483.4 1236.7,484.7 1243.0,484.0 1248.2,480.6 1256.5,469.5 1268.5,466.0 1260.6,474.0 1252.4,484.2 1246.8,496.0 1246.3,514.1 1248.1,526.0 1250.0,529.3 1253.0,531.2 1255.3,531.3 1263.1,524.6 1274.8,506.7 1277.0,501.3 1277.5,496.0 1276.3,492.5 1278.2,490.9 1279.8,486.9 1280.1,480.7 1281.1,479.2 1288.8,477.8 1295.0,478.8 1300.4,478.2 1314.7,466.0 1331.0,458.6 1332.9,456.0 1333.5,450.2 1331.2,444.4 1334.5,442.0 1337.9,436.0 1339.2,436.0 1352.8,444.1 1358.0,444.4 1361.7,442.7 1364.6,436.5 1368.3,435.0 1373.0,441.9 1376.8,445.0 1388.9,447.5 1381.7,448.3 1378.1,451.4 1375.3,460.8 1375.4,466.0 1379.5,474.3 1382.5,477.7 1386.7,479.9 1389.7,480.4 1391.1,484.4 1395.2,487.7 1402.2,488.6 1399.2,493.2 1395.8,496.0 1396.6,496.0 1382.2,506.4 1381.4,510.2 1383.7,513.0 1389.0,512.5 1400.7,507.7 1409.4,501.7 1414.2,496.0 1415.5,496.0 1417.9,498.9 1421.4,499.8 1427.3,497.6 1431.2,493.8 1431.6,489.1 1429.7,485.3 1424.9,483.6 1425.9,482.0 1428.7,484.4 1434.3,483.9 1438.0,482.0 1446.1,475.1 1453.4,478.1 1464.7,480.7 1467.8,482.0 1477.0,489.1 1486.1,491.7 1495.7,507.8 1491.6,507.8 1489.0,510.2 1488.0,514.3 1489.8,520.1 1491.8,523.2 1494.7,525.5 1498.9,526.0 1501.7,523.1 1502.5,520.1 1502.0,516.8 1507.9,526.9 1505.8,527.4 1504.1,529.1 1504.3,534.1 1517.7,545.3 1519.7,556.4 1518.8,579.7 1520.3,585.8 1531.5,606.4 1534.9,609.5 1540.8,612.3 1543.7,616.0 1552.1,633.4 1559.0,643.1 1559.0,626.5 1557.4,622.5 1559.0,625.6 1559.0,347.7 1553.1,351.9 1550.2,347.7 1542.2,342.1 1534.2,338.9 1525.6,338.0 1517.3,340.4 1511.4,346.0 1508.2,354.1 1508.3,363.7 1511.0,372.0 1515.5,379.5 1522.8,388.2 1513.2,384.1 1505.5,384.0 1478.9,396.3 1476.5,396.1 1461.8,388.3 1439.2,383.6 1416.8,375.8 1406.5,376.9 1393.9,386.5 1376.7,403.1 1371.3,413.7 1369.1,422.9 1364.9,418.8 1359.9,416.5 1355.0,416.0 1351.7,414.2 1342.3,404.8 1331.7,396.0 1326.1,393.1 1317.6,390.7 1310.2,391.8 1305.5,394.2 1303.3,391.1 1296.6,388.7 1284.2,391.4 1267.4,391.3 1255.7,380.6 1247.6,377.8 1240.7,378.2 1238.1,377.4 1229.8,370.3 1222.4,366.1 1204.7,359.3 1195.3,359.8 1184.4,370.9 1181.1,372.2 1173.4,372.5 1167.3,374.9 1164.0,378.0 1164.0,370.0 1160.9,361.5 1153.6,353.3 1144.5,351.0 1136.3,354.1 1131.7,354.8 1105.3,346.9 1101.4,343.6 1102.0,340.8 1108.0,331.8 1109.9,323.9 1109.6,321.0 1105.4,313.8 1099.3,309.7 1092.3,308.0 1089.0,306.1 1079.9,295.0 1076.3,293.2 1081.5,284.8 1083.6,272.3 1080.0,255.0 1070.2,233.9 1062.2,224.5 1056.6,222.6 1047.8,226.0 1044.7,229.5 1042.3,238.0 1043.8,248.0 1042.7,254.2 1037.8,262.6 1037.2,266.3 1039.0,275.1 1041.9,278.1 1047.8,280.6 1049.6,283.0 1051.1,290.2 1052.7,293.3 1059.5,298.3 1064.2,299.0 1051.6,312.6 1047.2,315.3 1034.0,318.7 1026.8,321.7 1011.4,330.2 1007.3,336.3 1008.0,341.6 1004.3,344.7 993.4,349.3 991.4,351.2 988.7,359.5 990.0,365.8 981.7,365.5 976.7,362.6 974.0,363.0 971.7,364.7 970.4,360.8 967.4,357.2 965.1,355.9 959.8,355.2 953.9,357.3 951.8,358.9 948.3,363.9 945.6,375.0 942.5,380.9 940.9,388.1 941.9,397.0 934.4,396.0 931.1,396.5 929.9,393.7 927.7,392.1 921.9,392.2 919.4,393.3 911.3,400.9 907.5,402.2 901.1,401.7 895.2,402.8 880.2,411.1 876.7,406.7 872.0,404.3 868.6,404.2 865.7,406.0 863.1,410.3 863.6,418.9 860.6,412.9 849.0,400.4 841.1,395.4 829.4,392.8 827.3,385.5ZM785.0,481.7 786.5,475.8 785.5,472.0 782.2,467.5 784.4,460.8 787.1,456.1 786.7,465.9 788.0,470.2 793.5,477.8 796.1,479.0 795.5,482.4 797.0,486.8 794.6,486.2 791.2,487.3 788.2,490.6 786.7,495.7 786.7,502.9 785.1,505.5 779.0,505.1 768.3,508.9 765.2,508.0 770.7,506.1 777.4,500.6 779.6,496.0 780.9,488.6ZM753.6,486.8 753.6,486.7 753.6,486.8ZM748.1,590.7 752.7,589.8 755.0,586.0 755.1,579.7 754.1,577.2 754.9,574.3 769.7,586.0 770.0,587.6 762.7,588.4 759.5,590.1 758.4,592.2 760.6,596.8 767.8,600.1 770.0,600.1 773.6,598.1 774.9,594.4 778.7,590.1 778.9,586.0 782.4,586.0 783.9,584.7 787.8,590.6 790.9,598.5 794.9,600.8 798.4,600.5 800.4,597.4 800.3,594.3 802.6,591.8 802.5,589.0 800.1,584.5 802.7,582.7 805.7,582.9 807.0,586.0 807.6,592.3 809.7,596.3 812.6,599.0 827.7,602.1 831.9,602.1 838.6,600.2 838.4,602.4 836.3,610.5 834.0,616.0 832.5,617.3 829.3,617.7 825.4,616.7 817.9,618.5 807.4,616.0 808.2,616.0 797.3,611.8 792.2,611.2 787.6,613.0 785.2,616.0 784.9,619.0 782.0,620.0 776.5,618.3 772.7,614.3 769.2,612.4 761.3,610.1 756.9,607.7 758.7,597.5 757.7,594.1 754.6,592.6 731.3,594.2 712.2,600.5 706.2,600.1 714.2,598.5 717.6,595.6 721.0,590.7 721.1,586.5 724.2,581.7 730.4,577.8 732.7,574.7 733.0,571.2 741.5,571.1 748.5,566.8 745.4,570.1 744.8,573.0 745.4,576.1 743.7,581.0 744.1,586.0 746.2,589.5ZM860.4,673.8 863.9,685.1 855.9,677.6 849.9,668.6 847.2,658.3 836.1,634.7 837.6,633.3 846.9,648.9 851.9,660.4ZM851.4,436.0 851.0,437.2 844.1,440.4 842.0,438.0 842.0,432.0 851.4,433.5 850.7,436.0ZM843.8,556.0 843.8,556.1 843.7,556.0ZM703.4,515.7 704.6,511.8 704.5,514.8ZM758.2,505.8 758.8,502.7 758.8,501.5 759.7,505.0 762.1,507.2 757.1,508.2 756.6,507.8ZM844.4,555.0 843.1,555.3 845.3,554.4ZM718.2,534.1 716.7,534.5 715.9,534.3ZM771.4,570.8 764.6,562.7 764.0,560.8 765.6,560.8 771.6,568.3 781.6,575.1 782.3,578.7ZM823.3,558.8 826.1,556.1 828.1,556.3 828.3,559.8 830.4,563.2 834.6,565.4 843.9,561.9 856.7,572.1 857.3,573.8 855.5,575.1 849.1,575.7 834.6,571.5 823.8,574.9 819.2,575.3 817.6,574.0 817.3,572.1ZM885.7,626.9 886.3,626.0 888.3,627.0 894.7,634.5 898.1,637.2 902.1,639.4 906.7,640.1 902.5,644.3 897.0,643.2 888.4,632.6ZM1538.9,394.1 1539.8,394.2 1540.2,394.9ZM455.4,664.8 466.3,664.3 468.0,662.8 468.2,660.6 466.7,658.9 448.7,649.8 443.2,648.5 434.1,650.3 429.9,653.4 429.7,655.7 431.3,657.4 433.5,658.0 441.4,657.3 445.1,658.4ZM185.7,665.4 188.0,667.7 191.2,667.4 193.3,664.4 192.6,661.4 189.4,659.5 186.6,660.0 185.2,662.1ZM7.0,755.3 12.8,751.6 14.1,748.0 12.4,744.7 8.5,744.3 7.0,744.8ZM95.1,796.7 98.0,797.9 101.9,797.2 103.9,794.7 103.4,791.3 100.3,789.5 96.2,790.4 94.1,792.9ZM884.2,772.4 873.9,783.9 869.5,786.0 867.0,790.4 866.3,800.8 864.5,808.5 865.0,813.1 866.9,817.8 869.9,822.3 874.4,824.1 879.8,822.3 883.5,817.0 892.5,788.0 892.3,782.0 890.5,775.6 887.4,772.4ZM48.8,802.3 49.9,805.7 55.3,810.3 60.4,812.6 63.4,811.2 63.1,807.3 54.8,800.9 51.1,799.9ZM10.4,856.0 15.4,844.7 17.3,832.6 17.3,826.4 15.3,820.6 7.0,810.6 7.0,866.8ZM78.2,856.8 79.2,861.1 84.1,869.2 83.7,873.1 82.1,876.3 83.0,880.4 80.2,880.1 78.1,881.2 70.9,891.3 61.7,899.4 57.1,906.7 58.8,912.2 66.3,915.5 70.7,915.3 76.5,911.2 79.5,903.9 85.4,897.7 88.9,890.8 93.0,890.2 96.3,887.2 97.7,883.7 102.2,877.6 103.7,873.1 103.7,869.9 102.6,868.1 92.5,863.1 85.1,856.0 81.1,854.6ZM508.9,943.9 512.4,945.5 516.3,945.9 521.0,944.6 525.0,940.6 525.0,935.5 523.4,933.7 519.5,932.3 510.1,934.0 507.2,936.4 506.3,938.7 506.8,941.1ZM512.8,946.0 516.4,946.3 518.3,946.0ZM1541.7,283.7 1532.7,294.6 1523.9,310.1 1522.7,323.6 1524.1,326.7 1532.4,334.0 1540.6,338.8 1552.4,342.0 1559.0,338.7 1559.0,273.6 1551.3,277.2ZM1191.3,316.9 1187.9,318.7 1181.3,326.8 1179.5,337.0 1180.7,340.0 1184.8,344.9 1196.6,356.2 1200.5,357.0 1208.5,355.3 1211.2,353.2 1215.8,347.0 1220.2,344.1 1229.2,341.7 1232.6,338.3 1234.2,333.4 1234.1,330.2 1232.6,327.2 1229.9,325.0 1213.8,318.2 1202.5,315.1ZM1336.7,371.8 1328.9,371.5 1322.2,375.9 1320.3,379.5 1320.0,382.9 1321.8,387.3 1323.8,389.5 1328.2,391.6 1334.6,392.4 1340.3,390.7 1345.3,386.5 1346.6,381.7 1344.9,376.8 1342.1,373.9ZM1136.3,642.3 1134.7,640.9 1131.2,640.5 1128.4,641.9 1126.6,644.6 1125.3,650.8 1126.0,653.9 1128.5,656.9 1131.5,657.1 1133.4,655.6 1137.0,646.0ZM1411.7,665.4 1414.1,667.7 1417.2,667.4 1419.3,664.4 1418.6,661.4 1415.4,659.5 1412.6,660.0 1411.2,662.1ZM1137.9,668.5 1134.5,665.1 1130.6,665.0 1129.0,665.9 1126.6,669.7 1126.4,681.0 1129.1,686.2 1131.5,687.3 1134.3,687.6 1137.0,688.7 1134.5,688.7 1131.8,691.5 1132.7,698.2 1136.1,702.0 1133.2,705.6 1133.0,709.1 1134.9,710.4 1137.7,709.7 1144.1,713.4 1147.6,713.8 1150.3,712.0 1151.7,708.9 1152.4,704.7 1151.7,701.3 1149.4,697.8 1147.7,696.8 1148.7,694.6 1148.5,689.2 1145.7,687.4 1143.9,687.3 1142.7,683.4 1136.6,680.1 1138.3,673.6ZM1128.6,692.2 1126.1,691.2 1123.6,692.7 1116.8,700.8 1116.5,702.6 1117.3,704.2 1120.5,704.7 1126.1,699.8 1128.8,696.2ZM1124.9,730.7 1125.4,726.8 1122.9,721.8 1124.8,713.5 1123.1,710.2 1118.3,706.9 1113.7,707.8 1100.4,720.2 1094.6,723.7 1090.5,724.4 1087.6,728.4 1089.1,736.4 1091.5,741.6 1095.3,744.5 1107.1,747.8 1111.0,747.9 1115.2,746.4 1117.5,743.3 1119.1,737.1ZM1152.8,735.7 1155.4,736.5 1157.2,736.0 1159.8,730.4 1159.4,727.1 1158.0,724.9 1154.4,722.9 1152.2,723.6 1150.7,726.1ZM1145.4,730.7 1146.4,727.0 1143.5,725.0 1136.1,726.4 1132.0,725.7 1127.9,727.0 1124.1,733.1 1121.8,741.6 1123.7,749.7 1125.2,752.3 1129.7,752.5 1131.2,750.7 1131.8,747.1 1135.5,750.2 1138.8,749.2 1139.6,745.9 1136.8,739.7 1139.6,737.0 1139.5,734.5 1137.9,733.0 1133.9,733.1 1140.9,732.7ZM1153.3,745.1 1156.9,746.4 1163.3,746.7 1165.9,745.2 1166.5,742.9 1163.1,739.7 1155.6,739.9 1152.7,742.1ZM1172.1,731.6 1168.6,731.5 1164.0,733.2 1162.9,734.5 1162.9,737.1 1167.6,740.6 1167.1,743.2 1169.3,746.4 1171.8,747.7 1179.7,749.2 1187.9,753.4 1188.8,756.4 1187.5,759.5 1189.0,762.0 1194.4,762.3 1196.9,764.2 1201.0,765.2 1205.2,764.9 1210.9,760.9 1214.4,762.4 1220.1,767.1 1224.0,768.7 1230.3,769.5 1232.2,768.4 1231.8,765.1 1226.1,760.0 1224.1,754.1 1229.5,756.0 1235.9,753.9 1238.6,751.8 1240.1,749.1 1238.3,744.6 1234.3,744.3 1224.6,747.7 1222.3,751.1 1218.5,749.4 1214.3,744.7 1210.3,742.5 1192.9,736.9 1188.4,736.1 1184.6,737.2 1179.7,740.2 1178.0,738.3 1177.6,735.3 1175.8,733.0ZM1154.1,762.6 1154.1,760.3 1152.6,758.8 1150.0,758.5 1145.7,759.6 1138.8,764.3 1137.8,768.1 1139.7,769.9 1143.0,769.7 1149.7,766.7ZM1321.0,796.7 1324.0,797.9 1327.9,797.2 1329.9,794.7 1329.4,791.3 1326.3,789.5 1322.2,790.4 1320.1,792.9ZM1274.9,802.3 1276.0,805.7 1281.4,810.3 1286.4,812.6 1289.4,811.2 1289.1,807.3 1280.8,800.9 1277.1,799.9ZM1156.3,848.7 1164.4,847.8 1167.9,848.8 1174.6,854.0 1177.0,858.2 1178.5,859.2 1183.1,859.3 1185.6,857.0 1188.0,862.0 1192.5,867.0 1194.6,871.9 1198.6,875.4 1204.5,877.4 1209.4,877.7 1212.0,876.5 1215.8,878.6 1220.0,878.0 1226.0,873.1 1230.0,871.4 1233.0,866.8 1236.2,856.0 1241.4,844.9 1243.3,832.6 1243.2,826.0 1241.3,820.6 1231.7,809.2 1227.5,801.9 1219.1,794.6 1216.5,784.5 1211.1,778.7 1209.0,772.5 1206.4,768.3 1203.2,768.0 1201.7,769.2 1198.1,785.4 1196.2,790.0 1191.9,788.5 1183.9,782.6 1185.3,776.2 1183.9,771.8 1172.6,769.6 1168.6,769.9 1164.8,771.9 1158.5,780.6 1151.2,778.5 1146.9,780.0 1135.8,789.6 1131.5,796.5 1129.6,798.0 1117.0,801.2 1104.4,807.2 1103.8,811.3 1104.9,819.0 1103.8,822.0 1103.9,826.5 1109.0,842.6 1108.5,853.1 1111.1,858.5 1116.3,861.0 1121.8,861.1 1126.5,858.9 1137.2,857.6 1142.1,856.0 1141.4,856.0 1147.3,852.1ZM1304.2,857.1 1305.3,861.1 1310.1,869.2 1309.7,873.1 1308.1,876.3 1309.0,880.4 1306.2,880.1 1304.1,881.2 1296.9,891.3 1287.7,899.4 1283.1,906.7 1284.8,912.2 1292.3,915.5 1296.7,915.3 1302.5,911.2 1305.6,903.9 1311.4,897.7 1314.9,890.8 1319.0,890.2 1322.3,887.2 1323.7,883.7 1328.2,877.6 1329.7,873.1 1329.7,869.9 1328.6,868.1 1318.5,863.1 1311.1,856.0 1307.2,854.6ZM1225.0,882.6 1222.9,881.6 1219.3,882.0 1213.1,880.9 1211.2,881.6 1209.2,884.0 1208.5,886.4 1210.6,893.9 1212.4,897.6 1215.2,900.2 1220.3,900.3 1226.0,895.2 1227.5,891.1 1227.8,886.4Z" fill="#7daef5" filter="url(#b1)"/>
<path d="M325.9,279.0 316.7,285.3 308.2,295.6 299.7,310.5 298.5,323.0 299.8,325.7 307.0,332.2 315.0,337.0 326.0,340.2 336.0,334.6 343.2,323.2 346.7,315.7 347.3,321.1 351.8,330.1 360.5,337.9 371.0,342.3 380.1,342.4 390.0,336.9 393.1,327.9 388.9,316.6 395.3,317.4 397.8,316.3 402.1,310.9 403.1,303.8 400.5,294.8 396.4,288.1 390.4,282.1 376.7,270.6 368.0,267.2 359.1,267.5 354.0,271.3 352.9,274.3 348.4,271.7 346.1,271.4 335.7,274.4ZM359.5,296.5 353.1,298.7 355.4,287.6 366.0,298.6ZM472.3,179.0 464.0,180.4 458.3,179.8 451.5,176.9 444.4,179.4 437.8,187.1 429.9,193.6 404.6,210.6 399.8,216.2 397.1,221.6 394.7,224.0 389.9,226.0 386.1,231.8 384.6,239.5 384.6,247.8 388.2,265.4 394.6,281.8 400.1,290.3 406.0,294.3 412.1,294.5 416.4,296.1 428.2,303.7 435.6,306.7 447.9,310.3 450.1,310.2 457.1,305.8 465.6,290.2 478.0,263.2 499.3,230.4 505.1,223.1 491.5,252.3 486.4,266.5 480.2,276.2 471.4,283.5 468.3,294.9 472.0,305.1 477.3,313.9 485.1,322.3 494.5,326.0 503.5,324.7 509.6,326.0 515.3,330.1 519.7,336.4 525.8,355.9 531.0,385.6 534.5,393.1 539.0,397.6 539.2,400.9 535.3,407.7 533.4,416.4 534.3,425.9 536.1,434.1 550.0,465.1 554.1,469.4 566.1,476.9 570.8,477.5 574.4,473.7 584.5,443.5 587.7,438.9 602.9,430.2 608.6,424.9 613.6,418.5 618.6,414.7 625.2,412.5 631.9,408.5 641.9,398.4 646.0,392.4 648.0,383.4 648.0,372.8 649.8,365.7 654.2,359.4 656.0,351.0 655.2,341.1 656.0,331.9 658.6,321.1 659.5,307.6 658.6,292.1 659.9,277.9 663.1,264.7 668.9,250.4 677.6,233.9 676.7,223.7 673.8,221.0 664.1,220.9 657.3,216.1 650.7,204.3 640.3,191.0 626.4,176.6 609.1,169.3 590.6,170.8 572.8,178.0 555.1,190.8 538.6,199.9 521.2,206.5 511.6,215.1 513.2,209.8 511.6,203.2 507.7,196.0 501.6,188.5 492.3,182.6 482.2,179.8ZM427.7,307.8 419.1,308.6 411.8,310.4 404.8,313.9 400.6,321.0 401.0,330.5 404.9,337.4 411.1,342.0 418.7,344.7 428.1,345.5 436.0,344.8 444.4,342.3 451.1,335.8 454.1,328.1 453.7,320.0 450.2,314.9 444.4,311.1 436.4,308.6ZM108.4,373.1 102.0,373.8 98.1,376.4 96.0,380.1 95.9,383.2 97.4,386.5 102.5,389.8 107.8,390.6 112.5,389.6 117.1,386.2 118.5,384.0 118.6,380.7 116.4,376.5ZM16.6,482.7 21.2,479.7 29.7,468.3 46.0,463.3 27.5,485.0 22.2,496.0 21.2,505.3 22.3,521.7 24.2,528.0 28.7,530.3 36.1,523.9 47.9,505.9 49.8,501.4 50.1,496.0 48.6,491.6 51.2,489.7 52.7,485.9 52.7,480.3 54.2,478.0 62.8,476.5 68.7,477.5 73.9,476.9 86.3,466.0 104.3,457.1 105.4,455.2 105.9,449.9 103.1,443.7 107.3,441.0 111.5,433.8 127.4,442.6 133.8,442.3 136.9,436.0 142.4,432.2 143.0,425.7 138.4,420.6 133.4,418.3 128.4,417.8 124.6,415.6 104.5,397.4 99.4,394.7 91.4,392.5 84.3,393.7 78.2,397.0 76.6,392.9 70.6,390.5 58.2,393.2 40.7,393.2 29.2,382.4 21.4,379.6 14.5,380.1 11.1,379.0 7.0,374.9 7.0,482.7 10.6,483.4ZM270.2,525.0 272.8,524.8 274.5,522.8 275.2,519.8 274.3,514.3 271.3,509.6 266.3,508.8 264.0,510.7 263.3,514.8 266.5,522.2ZM292.2,342.0 286.6,347.5 283.9,354.4 284.0,362.8 286.4,370.8 295.8,384.6 301.9,390.8 309.8,393.1 314.7,391.2 319.2,399.6 308.4,393.7 285.6,385.7 279.1,386.0 253.3,398.2 250.0,397.9 234.8,389.9 212.7,385.4 189.6,377.5 180.5,379.0 169.0,387.9 151.8,404.5 146.9,414.7 144.1,426.9 144.2,436.0 148.3,441.1 152.2,444.0 159.4,445.6 167.6,445.8 166.6,447.5 164.4,448.8 156.3,449.7 153.4,452.4 150.8,461.1 150.9,466.0 155.0,474.1 158.1,477.2 164.3,479.1 166.8,484.2 170.3,486.7 178.2,487.3 176.7,490.6 172.5,496.0 157.5,506.7 156.7,510.2 157.7,511.6 159.7,512.0 174.0,506.7 182.6,500.8 189.5,493.3 191.6,497.2 195.2,498.6 201.9,496.0 204.2,492.5 203.7,487.4 199.3,485.1 195.9,485.6 200.1,479.2 202.5,482.9 207.5,482.7 211.2,480.9 219.5,473.7 221.1,473.6 227.8,476.8 239.2,479.4 242.5,480.8 251.6,487.8 259.5,489.7 261.2,490.8 267.7,502.9 274.2,511.8 282.7,526.0 283.6,528.3 280.9,528.1 278.9,529.8 279.3,533.7 292.9,544.7 294.7,556.4 293.7,579.6 295.2,585.3 306.0,605.7 309.3,608.8 315.3,611.6 317.5,614.4 328.4,635.9 336.5,646.0 343.5,652.7 346.9,651.7 346.2,648.2 332.0,626.5 330.4,620.9 333.2,623.6 336.7,631.2 354.6,650.6 357.0,654.1 358.2,661.1 360.0,664.6 363.9,667.9 380.2,676.0 386.3,678.2 396.4,678.5 408.5,685.7 418.7,688.3 424.1,693.5 426.5,698.0 432.7,701.7 437.0,705.6 444.8,708.2 446.7,707.0 446.9,704.3 448.8,703.4 451.9,706.0 453.6,709.2 453.6,717.7 450.6,724.3 446.4,727.7 443.9,732.1 442.6,737.5 444.3,741.8 440.8,748.2 440.9,751.6 447.1,758.9 459.1,782.5 465.2,788.0 476.9,795.2 478.1,798.2 477.8,813.3 472.4,854.4 468.1,870.2 464.6,901.7 460.0,918.4 460.1,931.6 461.4,937.8 465.4,946.0 475.8,957.6 479.9,960.3 484.6,962.0 490.7,961.8 496.0,959.7 498.9,956.4 498.1,954.3 488.8,946.0 486.9,936.3 487.6,932.6 495.2,918.9 495.5,914.1 493.9,910.4 494.3,907.9 499.6,899.7 500.8,894.6 500.4,887.6 505.7,886.0 508.2,883.5 509.2,879.4 510.4,878.2 517.2,876.8 522.1,874.2 524.6,870.6 525.4,866.0 523.8,858.8 529.8,860.1 533.3,859.6 538.4,856.0 551.3,838.1 555.0,830.0 555.3,826.0 558.7,821.0 578.4,811.2 581.5,808.0 586.8,795.2 588.9,779.0 599.2,766.0 601.4,761.6 601.8,757.5 600.7,751.1 597.7,748.2 593.8,746.9 583.4,740.7 571.6,739.9 564.2,735.1 553.3,731.5 549.6,728.3 545.9,718.2 543.3,714.6 537.2,711.5 524.3,709.3 519.9,706.0 509.7,695.5 506.6,694.3 488.2,693.8 482.3,690.9 479.4,690.4 477.1,691.2 474.9,689.5 472.4,689.5 461.7,695.0 456.7,701.9 452.1,698.5 448.8,698.2 442.1,699.9 440.1,699.3 436.4,695.1 435.7,692.4 436.7,682.1 435.1,678.6 429.7,676.0 419.2,674.9 423.8,659.5 423.0,656.1 420.0,655.5 412.7,656.9 409.8,659.3 407.1,665.4 399.4,666.5 394.9,665.3 390.9,661.6 387.8,651.4 390.0,635.7 391.6,633.2 399.6,628.2 413.5,629.5 418.1,625.2 433.0,627.3 435.4,630.4 436.8,636.3 440.9,643.5 444.1,644.7 446.4,643.3 447.6,636.5 444.4,626.0 444.1,621.4 451.6,612.3 461.6,604.7 462.8,601.2 462.7,595.1 468.7,582.6 480.7,577.0 482.0,574.4 480.5,571.8 480.9,569.4 492.9,561.9 491.9,564.4 493.2,567.4 494.5,568.2 497.6,567.9 514.4,559.2 516.9,556.0 516.8,553.0 515.6,551.6 512.6,552.0 510.3,554.7 510.3,552.7 508.9,551.0 506.5,549.8 499.7,549.2 499.0,548.3 501.5,544.6 501.6,541.1 506.9,542.3 509.8,540.4 510.5,538.0 509.3,535.9 519.4,533.7 514.6,545.7 515.1,547.8 517.4,550.1 526.2,550.7 531.8,553.9 535.6,554.6 539.5,552.8 541.6,549.5 541.9,544.3 540.1,539.3 537.3,536.1 532.0,533.7 532.7,526.0 531.0,524.1 531.1,522.0 529.6,518.7 515.5,503.1 511.8,496.0 503.3,474.4 501.8,472.8 496.7,472.1 490.8,480.2 487.0,481.3 484.7,477.6 483.8,470.7 480.8,464.8 476.9,463.5 467.4,457.2 455.4,454.9 452.7,455.9 450.5,462.0 451.7,470.9 449.6,482.9 454.8,491.6 455.2,496.0 452.7,500.9 448.4,504.5 446.2,508.3 447.9,519.0 447.0,523.7 443.0,518.8 441.4,508.6 438.1,504.0 428.9,501.6 416.3,493.5 411.0,491.8 407.0,491.7 404.4,489.9 400.1,481.1 401.3,472.4 403.6,466.0 410.2,452.8 412.6,450.2 415.9,449.3 419.3,446.4 420.6,450.2 425.0,454.2 431.3,455.6 437.7,452.9 442.8,453.7 447.9,450.1 449.8,444.3 448.5,439.1 437.2,428.7 441.1,425.1 444.0,419.0 445.4,411.2 444.4,398.8 450.9,398.2 463.0,411.7 467.1,414.7 463.8,429.1 461.5,431.7 454.7,433.9 450.8,437.9 450.5,440.1 451.9,444.1 457.4,446.6 463.9,445.9 467.2,446.6 479.7,456.0 492.1,463.3 497.1,464.3 500.3,460.9 500.3,458.3 497.6,454.0 501.7,447.8 503.5,441.7 503.5,436.1 507.1,434.3 511.4,427.9 511.1,421.1 501.5,411.1 486.8,388.7 476.6,377.3 469.5,370.5 453.5,358.0 448.0,352.4 441.1,348.9 432.9,348.0 422.9,348.6 416.1,350.6 412.3,355.6 411.2,350.9 406.6,346.3 403.9,345.7 397.9,347.2 395.6,348.9 391.2,357.6 390.0,363.4 383.9,354.8 376.2,350.2 367.1,347.2 356.7,345.7 345.5,346.4 333.3,349.5 326.6,354.6 322.7,348.8 315.3,343.7 308.0,340.8 299.2,339.8ZM388.7,405.5 387.7,407.3 381.2,409.1 375.0,409.9 369.0,408.9 385.7,401.5 389.2,397.4ZM413.1,385.2 411.9,378.0 414.5,386.0 419.0,392.2 428.0,396.4 425.2,400.1 422.4,409.6 420.7,404.9 418.0,401.0 417.2,393.6ZM339.1,410.4 334.5,409.2 333.7,408.6 336.0,409.5ZM497.3,537.8 492.0,538.4 496.7,536.4ZM455.6,664.1 465.9,663.6 467.3,662.5 467.5,660.8 466.4,659.5 448.3,650.5 443.1,649.2 434.3,651.0 430.5,653.9 430.6,655.8 432.5,657.1 441.5,656.5 445.3,657.7ZM186.4,665.1 188.3,667.0 190.8,666.7 192.6,664.3 192.0,661.8 189.2,660.3 187.0,660.7 185.9,662.3ZM11.8,751.5 13.5,748.5 12.5,745.7 10.9,744.9 7.0,745.6 7.0,754.5ZM95.6,796.1 98.0,797.2 101.3,796.7 103.2,794.7 102.8,791.7 100.2,790.3 96.8,790.9 94.8,793.0ZM49.6,802.4 50.5,805.3 55.7,809.6 60.5,811.8 62.7,810.8 62.5,807.7 54.4,801.6 51.3,800.6ZM12.6,849.9 15.8,838.6 16.5,826.4 14.6,821.0 7.0,811.7 7.0,863.8 10.1,854.0ZM81.7,855.4 79.7,856.0 79.0,858.3 85.0,869.0 84.5,873.4 83.0,876.9 83.7,879.8 86.0,881.7 86.3,883.1 82.9,881.3 79.0,881.6 71.6,892.0 60.1,902.9 58.0,906.9 59.0,910.8 66.5,914.5 70.3,914.4 75.8,910.6 78.6,903.5 84.7,896.9 88.2,889.6 92.3,889.4 95.2,887.0 101.4,877.3 102.8,873.2 102.0,868.7 91.9,863.8 84.1,856.3ZM509.6,943.0 516.4,944.8 520.5,943.6 524.1,940.2 524.0,936.0 519.4,933.4 510.8,934.9 507.5,938.5ZM926.9,222.2 914.5,222.4 877.8,239.2 875.4,241.7 873.2,247.9 873.8,252.7 883.0,261.0 894.9,263.7 908.9,261.6 921.4,255.8 933.2,246.1 937.0,235.9 935.8,231.2 930.2,223.9ZM1057.1,224.4 1049.1,227.3 1046.3,230.3 1044.1,238.1 1045.7,248.0 1044.4,254.8 1039.6,262.9 1039.0,266.2 1040.6,274.2 1042.8,276.6 1048.9,279.1 1051.3,282.2 1053.8,291.8 1060.1,296.6 1063.5,297.3 1072.2,294.3 1074.8,292.2 1079.8,284.2 1081.8,270.9 1078.0,254.9 1069.2,235.7 1061.1,226.0ZM763.1,250.8 757.1,256.2 752.3,265.5 752.2,277.7 760.7,299.0 769.3,314.8 774.7,321.6 782.7,323.5 790.3,319.3 794.9,313.0 798.0,303.5 797.9,294.3 789.3,268.5 792.1,270.1 800.4,270.1 810.4,265.2 816.6,257.2 818.1,246.6 813.5,237.9 805.6,233.3 796.6,233.2 785.6,238.8 780.8,246.0 780.5,252.0 773.0,248.5ZM956.8,310.2 954.7,307.8 947.8,304.0 937.1,305.4 925.1,312.1 915.4,321.0 907.8,331.7 903.3,341.0 899.2,355.6 890.1,373.1 889.4,380.5 893.2,386.5 897.6,389.4 907.3,392.4 913.6,393.0 917.2,391.0 919.5,384.8 916.9,378.8 916.9,374.6 926.4,350.5 932.1,342.4 955.3,320.6 957.3,313.5ZM676.9,436.0 668.2,423.2 662.9,421.1 650.6,425.5 644.5,422.6 637.4,424.5 633.1,430.0 632.6,434.8 634.0,437.1 634.7,441.6 637.8,444.3 638.0,447.3 640.0,450.3 646.3,453.0 656.2,454.3 662.4,452.4 672.1,445.8 675.7,441.5ZM738.1,488.5 741.8,490.5 745.9,490.4 749.2,488.9 754.2,484.1 755.4,488.4 753.0,488.3 746.4,491.9 744.2,495.8 745.9,511.9 734.5,515.8 729.7,523.4 726.1,526.7 727.1,522.1 726.0,518.7 721.9,515.7 714.5,498.7 714.9,492.1 714.0,487.6 711.7,483.7 707.8,481.6 702.0,481.7 697.7,485.6 695.9,490.7 696.0,495.6 698.6,499.9 699.4,503.4 696.6,502.2 692.4,502.1 687.8,503.9 683.6,507.9 681.9,511.5 681.7,524.4 685.2,528.9 694.1,528.0 698.6,526.0 699.7,524.5 702.7,527.9 698.8,532.4 699.6,535.1 701.3,536.2 721.9,532.1 718.0,535.4 712.6,534.7 710.9,537.0 710.9,539.2 703.7,540.1 700.8,542.6 701.2,546.0 709.9,551.9 712.4,556.0 712.9,560.5 711.7,565.1 693.7,564.4 689.8,565.2 686.8,567.9 686.0,571.7 686.4,580.9 685.2,586.0 686.2,595.0 688.8,597.7 693.9,597.7 698.3,601.1 696.7,601.9 693.2,607.7 690.3,609.4 687.5,612.9 682.3,626.9 671.8,635.9 661.7,652.6 660.2,656.6 660.1,660.2 662.0,665.9 662.0,671.3 658.5,682.4 661.9,690.8 669.5,698.3 674.6,705.8 689.1,716.9 691.9,718.0 695.6,717.9 703.7,716.2 714.0,715.9 726.5,712.3 732.4,712.0 740.9,717.6 747.2,718.3 749.9,720.0 750.5,725.0 748.6,733.6 749.5,737.5 758.3,749.3 763.8,768.2 763.6,771.0 758.5,784.2 758.2,793.0 766.0,812.6 770.2,828.1 777.5,843.7 779.9,854.7 782.1,858.0 785.3,859.7 788.9,859.8 811.7,855.0 815.5,852.7 822.4,846.1 830.2,834.1 832.8,823.9 839.0,818.7 841.2,815.1 840.1,803.0 841.3,800.1 854.2,790.2 857.3,786.0 858.7,781.7 858.6,777.0 853.2,755.6 854.3,749.6 859.4,740.2 878.4,721.9 885.2,713.3 893.0,699.1 894.7,692.7 894.1,691.2 891.4,690.2 872.5,693.9 869.8,693.6 867.2,691.2 867.4,689.5 871.2,689.6 875.2,688.5 890.7,682.1 912.0,670.4 917.5,665.7 923.0,655.7 922.9,651.4 914.1,645.4 910.8,640.1 907.5,640.5 902.8,645.1 896.6,643.9 887.8,633.1 884.9,627.0 885.3,625.4 888.9,626.4 895.4,634.1 902.2,638.6 911.0,639.0 914.6,642.8 918.2,643.8 937.8,644.7 946.0,646.0 954.4,652.1 953.5,653.5 954.3,656.2 958.2,659.5 962.1,660.5 964.9,659.7 966.9,674.1 976.9,697.6 980.8,704.0 982.9,705.4 984.3,705.2 988.7,700.9 990.1,711.2 993.1,713.5 996.9,712.3 998.6,710.4 999.4,707.6 998.6,704.3 996.6,701.2 992.8,697.7 990.8,697.5 992.6,692.6 993.9,681.0 995.5,678.3 1007.4,667.7 1013.4,664.1 1017.7,658.7 1030.8,655.9 1037.2,666.4 1038.7,670.5 1039.1,675.0 1040.9,677.6 1049.6,677.4 1050.5,678.4 1053.0,690.6 1052.8,703.7 1059.3,713.3 1061.8,720.8 1054.2,714.4 1049.9,712.0 1045.7,711.2 1044.1,711.7 1042.2,714.1 1043.4,719.1 1045.7,722.7 1053.8,731.1 1067.8,748.5 1072.0,751.8 1077.0,753.7 1076.6,756.0 1077.4,757.4 1083.0,759.6 1100.9,762.7 1109.3,762.6 1112.2,764.2 1115.8,764.7 1130.2,764.7 1138.6,763.3 1139.7,760.1 1136.6,758.4 1110.6,758.4 1108.6,756.2 1104.8,754.3 1081.0,751.1 1081.9,745.3 1080.6,741.3 1075.8,736.0 1071.3,728.9 1074.0,728.5 1074.8,726.3 1073.0,722.0 1071.6,713.9 1059.5,700.3 1059.2,698.3 1061.2,687.6 1069.6,696.1 1074.4,698.7 1075.3,702.0 1077.5,703.1 1081.3,701.4 1084.2,697.9 1089.5,694.6 1091.9,691.7 1092.3,685.2 1089.3,678.0 1081.9,667.6 1081.7,665.1 1082.9,663.0 1087.7,658.8 1091.5,658.8 1092.1,660.8 1088.6,663.1 1087.3,666.8 1088.2,669.1 1090.4,670.5 1094.7,670.2 1096.9,668.6 1098.5,665.5 1098.1,662.4 1095.9,660.9 1097.2,659.6 1116.4,651.8 1120.0,649.5 1126.0,643.6 1134.7,631.2 1135.8,628.0 1134.7,616.0 1128.9,605.7 1129.1,603.2 1136.3,596.9 1136.5,593.8 1132.0,591.5 1125.8,592.4 1124.4,592.0 1123.1,589.7 1132.3,584.5 1136.5,583.6 1143.3,586.0 1143.3,591.1 1144.8,594.1 1148.6,597.6 1148.2,606.3 1150.8,608.5 1154.4,607.5 1159.5,604.6 1161.2,600.6 1161.1,595.5 1159.4,591.1 1156.4,587.3 1156.1,585.2 1160.8,581.1 1168.5,571.4 1174.6,571.1 1178.8,569.0 1183.3,564.5 1197.3,546.0 1199.4,536.4 1199.9,549.9 1201.0,554.5 1204.6,556.8 1207.6,555.9 1209.8,552.5 1210.4,547.6 1209.6,536.5 1210.6,526.0 1208.5,515.6 1206.6,511.4 1204.8,509.7 1202.5,509.5 1199.1,513.3 1197.1,511.2 1193.2,509.4 1189.1,509.8 1185.0,508.0 1185.4,505.7 1193.1,496.0 1201.5,487.2 1206.3,484.0 1223.1,481.7 1236.4,483.4 1242.6,482.7 1247.2,479.7 1255.7,468.3 1272.0,463.3 1253.5,485.0 1248.2,496.0 1247.2,505.3 1248.4,521.7 1250.3,528.2 1253.3,530.2 1254.9,530.3 1262.1,523.9 1273.9,505.9 1275.8,501.4 1276.1,496.0 1274.6,491.6 1277.3,489.7 1278.7,485.9 1278.7,480.3 1280.2,478.0 1288.9,476.5 1294.7,477.5 1299.9,476.9 1312.3,466.0 1330.3,457.1 1331.5,455.2 1331.9,449.9 1329.2,443.7 1333.3,441.0 1337.5,433.8 1353.4,442.6 1358.6,442.8 1360.7,441.4 1362.9,436.0 1368.3,432.5 1369.4,427.1 1368.7,425.1 1364.8,420.8 1359.4,418.3 1354.5,417.8 1350.6,415.6 1330.6,397.4 1325.4,394.7 1317.4,392.5 1310.3,393.7 1304.2,397.0 1302.6,392.9 1296.6,390.5 1284.2,393.2 1266.3,393.1 1262.0,388.2 1254.9,382.2 1247.4,379.6 1240.5,380.1 1237.1,379.0 1228.8,371.8 1221.5,367.7 1204.3,361.1 1196.2,361.4 1185.5,372.4 1181.4,374.0 1174.3,374.2 1168.9,376.1 1164.6,380.1 1163.0,380.6 1162.2,378.4 1162.2,370.3 1159.4,362.6 1152.7,354.8 1144.5,352.8 1136.8,355.9 1131.6,356.6 1104.5,348.6 1101.4,346.5 1099.5,344.1 1100.3,340.1 1106.2,331.2 1108.1,323.7 1107.7,321.3 1104.2,315.2 1098.6,311.3 1091.6,309.8 1087.8,307.5 1078.5,296.3 1075.4,295.0 1069.0,297.0 1052.8,314.0 1047.9,317.0 1034.6,320.5 1027.4,323.4 1012.6,331.5 1009.0,336.8 1010.1,341.4 1009.5,342.7 1005.4,346.2 1000.6,348.9 994.3,350.9 992.7,352.5 990.5,360.0 992.6,368.3 987.1,366.9 981.5,367.6 976.1,364.4 974.0,365.0 970.4,368.5 969.3,362.6 965.3,357.9 960.0,357.0 953.7,359.6 949.9,365.0 948.9,370.9 944.2,381.4 942.9,387.5 943.2,395.0 945.2,400.1 939.9,398.3 934.4,397.8 929.8,398.6 927.6,394.1 925.5,393.4 922.2,394.0 912.1,402.5 908.0,404.0 901.1,403.5 895.8,404.6 879.7,413.9 876.1,408.4 871.3,406.0 869.1,405.9 867.1,407.2 864.7,411.2 865.5,423.4 862.1,423.4 861.9,419.6 859.7,414.8 854.5,408.2 847.4,401.4 840.8,397.3 827.0,394.0 827.6,391.2 825.9,386.8 820.2,381.7 814.8,379.2 809.2,378.6 804.1,379.3 795.0,383.4 781.5,391.5 768.4,406.0 762.7,415.0 754.0,438.4 749.3,444.3 742.1,449.5 735.7,457.5 732.9,466.0 733.1,472.7 734.5,481.9ZM760.6,504.0 763.5,506.7 767.2,506.5 776.6,499.7 778.2,496.0 779.6,488.0 785.2,477.3 784.3,472.6 781.5,469.8 780.8,467.6 782.9,460.2 792.5,446.2 796.3,437.7 797.6,436.3 800.5,436.0 790.3,451.4 788.2,460.1 788.2,466.0 789.6,470.4 794.7,477.0 798.4,477.7 796.8,482.0 798.5,488.9 794.6,487.6 790.7,489.5 788.1,495.4 787.9,503.1 785.4,506.9 779.5,506.2 768.5,510.1 763.2,508.5 756.6,509.4 755.0,507.6 756.8,505.9 757.6,502.9 757.4,495.0ZM705.8,511.1 705.5,515.5 701.2,520.3 703.2,510.5ZM748.4,589.9 752.4,588.9 754.2,585.3 754.2,579.5 753.0,577.1 753.9,571.3 758.9,576.8 770.6,586.0 770.8,588.8 763.3,589.1 759.5,591.5 759.3,593.3 760.7,595.7 764.2,597.9 768.9,599.4 772.6,597.8 774.1,593.7 778.0,589.6 777.8,584.0 781.3,585.3 783.5,583.7 783.6,581.8 781.3,579.0 770.8,571.6 763.9,563.3 763.1,560.5 765.6,559.6 772.2,567.6 783.2,575.8 784.7,584.2 788.6,590.1 791.3,597.7 793.3,599.4 795.8,600.1 798.5,599.4 799.7,597.0 799.6,593.7 801.6,592.2 801.6,589.3 798.9,584.0 802.6,581.7 806.9,582.0 808.4,592.0 810.3,595.6 812.9,598.2 828.0,601.2 839.3,599.3 839.3,602.6 835.7,614.4 832.8,618.1 829.3,618.8 825.5,617.5 817.8,619.3 806.8,616.7 797.0,612.6 792.2,612.0 788.2,613.6 786.2,616.0 785.7,619.4 782.0,620.8 776.1,619.0 772.1,615.0 768.8,613.1 761.0,610.9 756.1,608.2 757.9,597.6 757.0,594.7 754.4,593.5 731.5,595.0 712.3,601.3 703.2,600.3 713.9,597.7 716.8,595.2 720.1,590.6 720.2,586.2 723.4,581.1 729.6,577.2 731.8,574.3 732.4,570.4 741.3,570.2 748.3,565.8 751.2,567.5 749.1,567.6 746.5,569.9 745.8,573.0 746.5,576.4 744.7,580.9 745.1,586.0ZM846.6,658.9 834.9,634.1 837.7,631.7 847.6,648.5 852.6,660.0 861.0,673.5 865.1,686.7 857.6,680.6 851.4,672.4 848.0,665.7ZM829.2,559.1 831.5,563.0 834.7,564.5 842.9,561.4 843.9,560.3 848.7,565.2 857.4,571.5 858.3,574.1 855.8,576.1 849.0,576.6 834.6,572.4 824.0,575.9 818.8,576.4 816.8,574.7 816.4,572.0 822.5,558.2 824.7,556.0 827.6,555.3 829.3,556.0ZM847.0,554.5 844.1,558.3 841.2,555.5 843.1,554.0 847.0,553.0ZM853.9,431.7 851.8,438.7 848.5,439.5 844.4,442.3 841.9,440.9 840.5,438.4 840.6,433.8 839.2,429.4ZM811.5,475.0 810.1,475.0 812.7,474.8ZM1135.6,642.6 1131.2,641.3 1128.9,642.5 1127.2,645.1 1126.0,650.7 1126.6,653.4 1128.8,656.2 1131.4,656.4 1132.8,655.2 1136.2,646.0ZM1137.2,668.8 1134.6,665.8 1130.0,666.0 1127.4,669.3 1126.8,674.3 1127.1,680.9 1129.2,685.3 1139.4,689.3 1141.5,689.2 1138.5,690.0 1135.3,689.2 1132.6,691.3 1132.4,695.1 1133.5,698.1 1135.7,701.0 1137.5,701.7 1134.0,705.5 1133.3,708.1 1134.6,709.6 1138.0,709.0 1144.3,712.7 1147.4,713.1 1149.8,711.6 1151.0,708.7 1151.6,704.7 1151.0,701.4 1148.6,698.0 1146.5,697.4 1148.0,694.7 1147.9,689.6 1145.1,687.9 1142.6,688.7 1143.2,687.1 1142.4,684.1 1135.8,680.2 1137.6,673.5ZM1128.2,692.7 1126.2,691.9 1124.1,693.2 1117.5,701.1 1117.8,703.7 1120.3,704.0 1125.5,699.3 1128.1,696.2ZM1124.3,730.4 1124.6,726.8 1122.2,721.9 1124.1,713.7 1122.6,710.6 1118.3,707.6 1114.1,708.4 1100.9,720.8 1094.8,724.4 1090.8,725.0 1088.3,728.5 1089.8,736.2 1092.0,741.1 1095.5,743.9 1107.1,747.1 1110.7,747.2 1114.7,745.8 1116.9,743.0 1118.4,736.8ZM1153.3,735.1 1155.4,735.8 1156.9,735.3 1159.2,730.1 1157.4,725.2 1154.3,723.6 1152.7,724.1 1151.3,726.2ZM1144.8,730.2 1145.7,727.0 1143.1,725.6 1139.3,726.9 1129.2,727.0 1126.7,729.4 1123.0,738.2 1122.5,741.8 1124.4,749.5 1125.8,751.9 1128.6,752.2 1130.3,750.9 1131.6,745.5 1135.6,749.5 1138.7,748.1 1138.9,745.9 1136.0,739.8 1139.0,736.7 1138.7,734.5 1137.6,733.7 1131.6,733.8 1135.5,731.9 1140.7,732.0ZM1153.8,744.6 1157.0,745.7 1163.2,746.0 1165.2,744.8 1165.8,743.2 1163.3,740.5 1159.6,740.1 1154.0,741.6 1153.2,743.1ZM1153.5,762.2 1153.5,760.5 1152.1,759.4 1145.9,760.3 1139.4,764.7 1138.5,767.9 1140.4,769.3 1145.4,768.0 1151.6,764.4ZM884.5,773.1 874.3,784.5 870.0,786.6 867.7,790.7 867.0,801.0 865.2,808.6 867.5,817.4 870.3,821.6 874.3,823.4 879.4,821.6 882.8,816.7 891.7,787.9 891.6,782.1 889.8,775.8 887.1,773.1ZM1543.0,285.0 1534.2,295.6 1525.5,310.8 1524.5,323.4 1525.5,325.5 1533.3,332.5 1541.3,337.2 1552.0,340.2 1559.0,336.6 1559.0,275.7 1552.2,278.8ZM1229.8,339.1 1232.5,332.3 1231.9,329.5 1230.3,327.4 1221.7,323.0 1201.5,316.8 1191.7,318.6 1189.2,320.0 1182.9,327.7 1181.3,335.1 1182.1,338.9 1186.2,343.8 1196.1,353.7 1199.6,355.1 1208.0,353.5 1214.5,345.7 1219.5,342.4 1227.3,340.5ZM1334.5,373.1 1328.1,373.8 1324.1,376.4 1322.0,380.1 1321.9,383.2 1323.4,386.5 1328.5,389.8 1333.8,390.6 1338.5,389.6 1343.1,386.2 1344.5,384.0 1344.6,380.7 1342.5,376.5ZM1518.5,341.8 1512.6,347.5 1510.0,354.4 1510.0,362.8 1512.4,370.8 1521.8,384.6 1528.0,390.8 1535.9,393.1 1540.7,391.2 1545.2,399.6 1534.4,393.7 1511.7,385.7 1505.1,386.0 1479.3,398.2 1476.0,397.9 1461.4,390.2 1454.9,388.2 1438.7,385.4 1416.4,377.6 1408.0,378.3 1395.1,387.9 1377.6,404.8 1372.9,414.7 1370.1,426.9 1370.1,435.4 1374.1,440.9 1378.2,444.0 1385.4,445.6 1393.6,445.8 1392.7,447.5 1390.4,448.8 1382.3,449.7 1379.4,452.4 1376.8,461.1 1377.0,466.0 1381.0,474.1 1384.1,477.2 1390.3,479.1 1392.8,484.2 1396.4,486.7 1404.2,487.3 1402.8,490.6 1398.5,496.0 1383.4,506.9 1382.6,509.7 1384.0,511.7 1392.0,510.2 1404.4,504.2 1415.5,493.3 1417.6,497.2 1421.2,498.6 1428.0,496.0 1430.2,492.5 1429.7,487.4 1425.3,485.1 1421.9,485.6 1426.1,479.2 1428.5,482.9 1433.6,482.7 1437.2,480.9 1445.6,473.7 1447.1,473.6 1453.8,476.8 1465.2,479.4 1468.5,480.8 1477.6,487.8 1485.5,489.7 1487.2,490.8 1493.8,502.9 1500.2,511.8 1508.7,526.0 1509.6,528.3 1506.9,528.1 1504.9,529.8 1505.3,533.7 1518.9,544.7 1520.7,556.4 1519.7,579.6 1521.1,585.2 1532.0,605.7 1535.4,608.8 1541.4,611.6 1544.6,616.0 1552.8,633.0 1559.0,641.9 1559.0,628.1 1556.4,620.9 1559.0,623.3 1559.0,349.7 1552.7,354.6 1548.7,348.8 1541.3,343.7 1534.0,340.8 1525.2,339.8ZM1496.3,525.0 1498.8,524.8 1500.5,522.8 1501.3,519.8 1500.3,514.3 1497.3,509.6 1492.4,508.8 1490.0,510.7 1489.3,514.8 1492.5,522.2ZM1186.0,593.1 1179.8,599.7 1169.4,602.7 1160.0,610.2 1159.4,611.8 1160.1,619.1 1161.6,621.8 1165.6,621.8 1169.8,616.0 1174.3,615.1 1178.8,611.2 1181.9,612.0 1186.4,608.4 1194.6,606.7 1199.2,603.1 1203.0,591.9 1203.8,586.0 1201.7,577.7 1200.0,576.4 1202.2,575.3 1205.5,576.4 1210.3,575.1 1214.9,571.3 1216.0,567.3 1215.2,565.0 1205.1,557.1 1202.9,556.9 1199.2,559.1 1197.7,565.7 1195.5,567.1 1193.6,570.6 1193.3,575.7 1196.3,578.0 1192.8,587.5 1190.3,591.6ZM1412.4,665.2 1414.5,667.1 1417.0,666.7 1418.6,664.2 1418.0,661.8 1415.3,660.3 1413.0,660.7 1411.9,662.3ZM1226.7,754.8 1229.8,755.3 1235.6,753.2 1239.3,749.1 1238.6,745.8 1234.5,745.0 1224.2,748.7 1223.2,752.2ZM1171.8,732.2 1165.7,733.1 1163.7,734.5 1163.6,736.7 1168.6,740.2 1167.7,742.9 1169.7,745.9 1179.9,748.5 1188.5,753.0 1189.5,756.6 1188.2,759.4 1189.4,761.4 1194.7,761.7 1200.6,764.5 1204.4,764.4 1207.6,762.9 1210.8,760.1 1212.7,760.5 1220.5,766.5 1224.1,768.0 1227.7,768.8 1231.6,768.0 1231.0,765.2 1225.5,760.3 1222.7,752.4 1217.0,749.2 1213.5,745.1 1206.0,741.5 1189.2,736.7 1185.0,737.7 1179.6,740.9 1177.3,738.6 1176.9,735.6 1175.2,733.4ZM1321.6,796.1 1324.0,797.2 1327.3,796.7 1329.2,794.7 1328.8,791.7 1326.2,790.3 1322.8,790.9 1320.8,793.0ZM1275.6,802.6 1276.7,805.4 1281.7,809.6 1286.5,811.8 1288.8,810.8 1288.5,807.7 1280.4,801.6 1277.3,800.6ZM1151.3,849.3 1164.5,847.0 1168.3,848.0 1175.3,853.5 1178.7,858.3 1182.9,858.4 1186.3,854.8 1186.9,858.2 1193.2,866.6 1195.1,871.1 1199.1,874.6 1204.7,876.5 1209.3,876.8 1211.9,875.6 1216.0,877.7 1219.6,877.2 1225.6,872.3 1229.4,870.7 1232.3,866.3 1235.3,856.0 1240.6,844.6 1242.5,832.6 1242.4,826.1 1240.7,821.0 1231.1,809.7 1226.9,802.4 1218.4,794.9 1215.8,784.8 1210.4,779.0 1206.0,768.9 1203.4,768.7 1202.3,769.7 1197.7,789.5 1196.4,790.7 1191.5,789.2 1183.2,783.0 1182.9,780.9 1184.6,776.2 1183.5,772.4 1172.5,770.3 1168.7,770.6 1165.3,772.4 1158.7,781.3 1151.1,779.2 1147.3,780.6 1136.3,790.1 1132.1,796.9 1129.9,798.7 1117.3,801.9 1105.0,807.7 1104.5,811.3 1105.7,819.2 1104.5,822.1 1104.7,826.4 1109.8,842.5 1110.2,847.6 1109.3,852.9 1111.6,857.8 1116.5,860.2 1121.6,860.2 1126.2,858.1 1139.4,856.0ZM1307.6,855.4 1305.6,856.2 1305.0,858.3 1311.0,869.0 1310.5,873.4 1309.0,876.9 1309.7,879.8 1312.0,881.7 1312.3,883.1 1308.9,881.3 1305.0,881.6 1297.6,892.0 1286.2,902.9 1284.1,906.9 1285.0,910.8 1292.5,914.5 1296.3,914.4 1301.8,910.6 1304.6,903.5 1310.7,896.9 1314.2,889.6 1318.3,889.4 1321.2,887.0 1327.4,877.3 1328.8,873.2 1328.0,868.7 1318.0,863.8 1310.1,856.3ZM1224.2,883.1 1213.1,881.8 1209.9,884.5 1209.4,886.3 1211.5,893.7 1213.2,897.1 1215.7,899.3 1220.0,899.4 1225.2,894.6 1226.6,890.9 1226.8,886.4Z" fill="#a9ccff" filter="url(#b1)"/>
<path d="M1075.0,150.0 525.0,150.0 187.0,166.4 7.0,157.7 7.0,470.0 237.5,470.0 327.8,469.1 428.4,467.2 483.1,464.4 491.9,460.6 505.6,451.6 518.8,435.7 523.8,431.6 544.4,425.6 550.6,428.8 554.4,433.2 560.0,443.6 563.1,455.6 565.3,459.1 568.4,459.7 572.5,457.5 594.4,436.9 610.1,425.2 616.9,420.8 623.1,418.2 628.7,417.8 633.8,419.2 643.2,426.2 667.6,440.9 680.0,451.0 691.8,462.2 702.9,470.5 708.1,473.5 713.3,475.2 718.4,475.8 723.5,475.0 728.5,473.0 805.0,471.5 953.0,470.5 1463.5,470.0 1559.0,469.0 1559.0,159.3 1413.0,166.4Z" fill="#a9ccff"/>
<path d="M1032.2,210.6 1044.0,217.6 1053.7,226.2 1090.3,265.7 1104.4,278.8 1115.7,285.5 1129.0,290.2 1142.4,291.2 1155.1,288.1 1167.0,282.9 1178.3,276.3 1187.4,269.4 1196.7,259.7 1200.2,257.6 1212.5,255.0 1226.6,254.4 1236.8,256.5 1247.8,261.4 1290.5,286.4 1308.2,295.8 1317.0,303.6 1331.5,321.6 1336.3,325.5 1341.2,327.7 1350.9,328.1 1360.6,324.2 1369.5,316.6 1374.9,306.2 1376.8,294.0 1375.2,283.3 1362.7,253.1 1356.5,229.1 1355.4,208.4 1358.5,184.3 1337.9,174.9 1294.5,168.7 1228.3,165.6 1139.4,165.6 1072.8,167.8 1028.3,172.3 1006.1,179.1 1006.1,188.1 1008.0,195.5 1011.8,201.2 1017.6,205.3ZM16.2,258.6 82.2,295.8 91.0,303.6 105.4,321.6 110.3,325.5 115.2,327.7 124.9,328.1 134.6,324.2 143.5,316.6 148.8,306.2 150.8,294.0 149.2,283.3 136.7,253.1 130.4,229.1 129.4,208.4 132.5,184.3 111.9,174.9 68.5,168.7 7.0,165.8 7.0,255.5Z" fill="#7daef5" filter="url(#b1)"/>
<path d="M7.0,244.4 32.7,256.4 69.3,277.5 83.9,281.2 87.9,280.7 91.0,278.9 93.3,276.0 95.9,266.6 98.5,244.7 100.4,238.3 103.5,233.8 107.9,231.2 113.4,230.5 121.4,227.0 123.8,224.2 125.2,220.8 126.4,213.3 125.2,201.0 125.6,192.6 128.7,180.1 132.5,171.8 111.9,168.7 68.5,166.6 7.0,165.6ZM1032.2,202.3 1044.0,209.3 1053.7,217.9 1090.3,257.4 1104.4,270.4 1115.7,277.2 1129.0,281.9 1135.8,282.9 1148.8,281.9 1166.5,275.1 1180.9,266.8 1198.0,249.9 1207.2,243.0 1216.4,239.7 1220.7,239.9 1240.5,247.5 1258.7,256.4 1290.5,275.3 1300.2,279.3 1309.9,281.2 1313.9,280.7 1317.0,278.9 1319.3,276.0 1321.9,266.6 1324.5,244.7 1326.4,238.3 1329.5,233.8 1333.9,231.2 1344.0,229.1 1349.9,224.2 1352.5,213.3 1351.2,201.0 1351.6,192.6 1354.7,180.1 1358.5,171.8 1337.9,168.7 1294.5,166.6 1139.4,165.6 1072.8,167.3 1028.3,170.8 1006.1,176.0 1006.1,182.9 1008.0,188.7 1011.8,193.4 1017.6,197.0Z" fill="#4e8fe8" filter="url(#b1)"/>
<path d="M1025.2,191.9 1038.4,198.5 1048.8,206.5 1068.3,224.9 1090.3,249.1 1104.4,262.1 1115.7,268.9 1122.1,271.5 1135.8,274.6 1142.4,274.6 1148.8,273.5 1166.5,266.8 1176.6,261.4 1183.7,254.3 1186.0,249.9 1188.1,240.0 1188.1,234.8 1185.5,218.3 1185.8,212.8 1192.7,189.5 1195.7,176.0 1184.8,170.8 1161.5,167.3 1125.9,165.6 1078.0,165.6 1042.0,166.8 1018.1,169.2 1006.1,172.8 1006.1,177.7 1008.0,182.0 1011.8,185.9 1017.6,189.2Z" fill="#2e76d6" filter="url(#b1)"/>
<path d="M1141.9,166.6 1135.6,168.7 1133.2,171.8 1140.1,194.4 1144.0,213.8 1145.3,217.6 1147.4,220.4 1150.2,222.2 1157.3,222.7 1161.1,221.6 1169.3,216.9 1173.0,213.6 1178.7,205.5 1183.9,189.3 1185.6,176.0 1182.7,170.8 1176.1,167.3 1165.8,165.6 1151.9,165.6Z" fill="#1a64c4" filter="url(#b1)"/>
<path d="M1204.0,167.3 1201.3,170.8 1199.5,176.0 1197.4,212.8 1194.3,229.4 1193.6,239.5 1195.7,248.2 1197.8,251.3 1200.6,253.4 1208.2,254.4 1214.4,252.4 1216.5,250.3 1218.4,244.7 1218.1,241.9 1214.8,236.4 1213.4,231.9 1212.7,225.6 1213.4,207.9 1217.9,176.0 1217.7,170.8 1216.0,167.3 1212.7,165.6 1207.8,165.6Z" fill="#7daef5" filter="url(#b1)"/>
<path d="M1199.4,213.7 1198.3,220.1 1199.4,228.5 1200.5,230.7 1202.0,231.7 1203.9,231.4 1206.1,227.3 1205.7,215.1 1204.6,212.9 1203.0,211.9 1200.9,212.3Z" fill="#a9ccff" filter="url(#b1)"/>
<path d="M100.4,238.4 98.5,244.7 95.4,266.6 90.3,280.5 90.0,285.3 91.9,296.1 99.2,312.8 106.5,322.7 110.7,325.8 115.2,327.7 124.9,328.1 129.7,326.7 139.5,320.8 143.3,316.6 146.1,311.7 147.8,306.2 148.3,288.5 144.5,273.5 138.8,259.0 133.6,249.0 127.0,238.6 123.0,234.8 118.5,232.4 113.4,231.4 107.9,231.7 103.5,234.0ZM1326.4,238.4 1324.5,244.7 1321.4,266.6 1316.4,280.5 1316.0,285.3 1317.9,296.1 1325.2,312.8 1332.5,322.7 1336.7,325.8 1341.2,327.7 1350.9,328.1 1355.8,326.7 1365.5,320.8 1369.3,316.6 1372.1,311.7 1373.8,306.2 1374.3,288.5 1370.5,273.5 1364.8,259.0 1359.6,249.0 1353.0,238.6 1349.0,234.8 1344.5,232.4 1339.4,231.4 1333.9,231.7 1329.5,234.0Z" fill="#7daef5" filter="url(#b1)"/>
<path d="M71.2,188.2 46.7,211.9 47.4,267.5 48.7,283.6 50.8,291.9 60.0,294.9 67.5,298.9 75.7,305.0 92.9,320.6 104.9,327.1 113.3,328.1 134.2,325.3 142.5,326.1 181.2,360.0 197.8,371.5 211.1,378.2 219.6,381.0 244.9,385.5 250.8,383.3 268.9,369.4 275.7,362.4 278.1,358.6 282.2,345.7 284.4,329.6 286.9,319.2 292.8,304.2 304.9,283.3 321.8,260.8 349.4,232.8 367.5,211.9 376.5,203.2 392.8,193.1 415.0,182.8 431.7,171.1 411.3,167.8 364.9,165.6 292.5,164.4 194.2,164.4 120.4,172.4ZM1420.2,164.4 1346.4,172.4 1297.3,188.2 1272.7,211.9 1273.4,267.5 1274.8,283.6 1276.8,291.9 1282.7,293.5 1293.5,298.9 1301.7,305.0 1314.8,317.2 1326.8,325.6 1330.9,327.1 1339.3,328.1 1360.2,325.3 1368.5,326.1 1407.3,360.0 1428.2,374.0 1445.6,381.0 1467.7,385.4 1473.9,384.8 1494.9,369.4 1498.7,366.0 1504.1,358.6 1508.2,345.7 1510.5,329.6 1513.0,319.2 1521.3,299.2 1539.3,271.4 1547.8,260.8 1559.0,249.2 1559.0,165.1Z" fill="#7daef5" filter="url(#b1)"/>
<path d="M68.6,183.8 46.7,203.2 46.7,229.0 48.3,248.5 51.7,261.7 56.7,268.6 69.9,268.7 82.5,264.6 94.2,257.0 99.2,252.7 107.5,243.1 110.7,240.8 113.2,241.4 115.0,244.7 116.9,257.5 117.4,313.5 119.8,323.3 121.9,325.1 124.7,324.9 130.7,322.8 139.9,317.8 141.8,317.8 148.6,329.4 157.4,339.0 175.6,355.3 192.6,368.5 200.6,373.2 212.2,377.4 227.5,381.2 236.7,382.2 241.9,380.6 251.9,374.2 264.4,365.0 274.0,355.8 277.5,349.6 278.6,345.4 280.2,329.4 284.2,312.8 292.2,291.9 298.3,281.1 315.1,258.6 357.8,214.7 384.0,184.9 393.6,171.1 373.8,167.8 331.2,165.6 266.1,164.4 178.3,164.4 112.5,170.9ZM1492.1,164.4 1404.3,164.4 1338.5,170.9 1294.6,183.8 1272.7,203.2 1272.7,229.0 1274.3,248.5 1277.7,261.7 1282.7,268.6 1289.3,269.2 1302.3,267.2 1314.6,261.0 1325.2,252.7 1333.5,243.1 1336.7,240.8 1339.2,241.4 1341.0,244.7 1342.9,257.5 1343.4,313.5 1345.8,323.3 1348.0,325.1 1350.7,324.9 1356.7,322.8 1365.9,317.8 1367.8,317.8 1374.6,329.4 1383.4,339.0 1404.9,358.1 1422.8,371.2 1433.8,376.0 1453.5,381.2 1462.7,382.2 1468.0,380.6 1490.5,365.0 1497.5,358.8 1502.0,353.1 1504.6,345.4 1506.2,329.4 1508.5,318.3 1518.2,291.9 1524.3,281.1 1537.0,263.6 1559.0,240.3 1559.0,165.6Z" fill="#4e8fe8" filter="url(#b1)"/>
<path d="M131.5,180.5 126.8,190.6 125.4,196.1 124.7,206.8 127.4,221.1 127.3,224.4 123.8,231.0 123.5,234.0 125.0,242.2 129.7,251.5 137.8,261.4 142.4,264.9 147.1,266.8 151.9,267.2 161.5,265.6 169.4,266.1 172.8,267.2 188.9,275.0 191.1,277.2 193.9,282.5 194.9,288.9 193.2,301.0 185.3,325.2 174.3,346.7 174.0,350.6 175.3,353.8 193.3,366.9 211.1,376.0 223.6,379.3 230.7,379.2 233.2,378.3 240.4,369.2 258.3,351.9 266.9,339.9 271.4,326.4 275.3,305.3 279.7,291.1 287.2,276.9 305.3,250.6 307.9,244.7 309.3,238.6 308.6,220.3 310.3,216.4 313.3,213.9 322.4,211.4 336.9,205.6 340.6,202.6 342.8,199.0 343.6,194.7 341.7,185.7 339.4,182.6 336.4,180.6 312.1,173.7 309.6,172.2 307.5,168.5 296.9,167.0 276.4,166.0 205.3,165.6 173.9,166.6 151.7,168.7 138.6,171.8ZM1357.5,180.5 1354.8,185.3 1351.4,196.1 1350.7,206.8 1353.4,221.1 1353.3,224.4 1349.8,231.0 1349.5,234.0 1351.0,242.2 1355.7,251.5 1363.8,261.4 1368.4,264.9 1373.1,266.8 1378.0,267.2 1387.5,265.6 1395.5,266.1 1398.8,267.2 1414.9,275.0 1418.8,279.7 1419.9,282.5 1420.9,288.9 1419.2,301.0 1411.3,325.2 1400.3,346.7 1400.0,350.6 1401.3,353.8 1419.3,366.9 1437.1,376.0 1449.6,379.3 1453.5,379.6 1459.2,378.3 1466.4,369.2 1484.3,351.9 1492.9,339.9 1497.4,326.4 1501.4,305.3 1505.7,291.1 1513.2,276.9 1531.3,250.6 1533.9,244.7 1535.3,238.6 1534.6,220.3 1536.3,216.4 1539.3,213.9 1559.0,207.3 1559.0,179.6 1538.1,173.7 1534.1,170.4 1533.5,168.5 1523.0,167.0 1502.4,166.0 1431.3,165.6 1399.9,166.6 1377.7,168.7 1364.6,171.8Z" fill="#2e76d6" filter="url(#b1)"/>
<path d="M164.3,178.5 167.4,179.5 180.6,175.4 186.1,175.1 204.4,178.3 208.9,178.3 212.2,177.5 214.4,175.8 215.8,176.5 216.4,179.6 215.0,192.8 215.3,199.3 216.9,204.6 220.0,208.6 228.3,212.6 231.7,212.4 234.4,210.6 236.7,207.2 238.6,199.7 237.5,187.8 239.2,185.6 250.6,183.3 253.9,180.9 258.9,172.6 254.0,169.1 242.1,166.7 223.1,165.6 196.9,165.6 177.8,166.6 165.6,168.7 160.3,171.8 161.9,176.0ZM1390.3,178.5 1393.4,179.5 1406.6,175.4 1412.1,175.1 1430.5,178.3 1434.9,178.3 1438.2,177.5 1440.5,175.8 1441.8,176.5 1442.4,179.6 1441.0,192.8 1441.3,199.3 1443.0,204.6 1446.0,208.6 1454.3,212.6 1457.7,212.4 1460.5,210.6 1462.7,207.2 1464.6,199.7 1463.5,187.8 1465.2,185.6 1476.6,183.3 1479.9,180.9 1484.9,172.6 1480.0,169.1 1468.1,166.7 1449.1,165.6 1423.0,165.6 1403.8,166.6 1391.6,168.7 1386.3,171.8 1388.0,176.0Z" fill="#4e8fe8" filter="url(#b1)"/>
<path d="M142.8,279.3 145.1,299.7 144.9,313.1 147.2,323.9 150.7,330.6 158.6,340.3 166.9,347.8 169.9,348.2 172.9,346.8 179.4,338.6 187.8,321.1 195.4,294.7 195.8,287.8 194.6,281.9 190.6,277.0 183.6,272.9 169.4,269.6 158.8,269.5 150.1,271.4 146.5,273.1 144.1,275.7ZM1368.9,279.3 1371.1,299.7 1370.9,313.1 1373.2,323.9 1376.7,330.6 1384.6,340.3 1393.0,347.8 1395.9,348.2 1398.9,346.8 1405.5,338.6 1413.8,321.1 1421.4,294.7 1421.8,287.8 1420.6,281.9 1416.6,277.0 1409.6,272.9 1395.5,269.6 1384.8,269.5 1376.2,271.4 1372.5,273.1 1370.1,275.7Z" fill="#4e8fe8" filter="url(#b1)"/>
<path d="M147.1,284.0 145.3,291.9 146.9,301.7 150.8,310.3 157.9,321.9 162.1,333.2 169.2,341.1 171.9,341.5 174.7,340.1 177.5,336.9 182.8,326.8 189.3,310.6 191.8,295.6 190.3,287.2 188.3,283.9 181.4,278.9 173.2,276.1 164.4,275.6 156.4,277.2 152.8,278.9ZM1371.7,287.6 1371.3,291.9 1373.0,301.7 1376.8,310.3 1383.9,321.9 1388.1,333.2 1395.2,341.1 1398.0,341.5 1400.7,340.1 1403.5,336.9 1408.9,326.8 1415.3,310.6 1417.8,295.6 1416.4,287.2 1414.3,283.9 1407.4,278.9 1399.2,276.1 1390.5,275.6 1382.4,277.2 1378.8,278.9 1375.5,281.1Z" fill="#7daef5" filter="url(#b1)"/>
<path d="M148.1,295.3 148.3,298.3 150.8,304.4 154.4,308.3 158.8,311.1 166.1,321.8 168.3,323.2 173.6,323.1 178.7,318.6 184.7,305.1 185.0,297.2 182.4,291.7 178.1,290.6 175.3,291.7 170.6,294.7 165.8,299.4 165.6,287.8 164.4,285.6 162.5,284.4 159.7,284.4 152.2,287.8 150.0,290.0ZM1374.6,292.5 1374.3,298.3 1376.8,304.4 1380.5,308.3 1384.8,311.1 1392.1,321.8 1394.3,323.2 1399.6,323.1 1404.8,318.6 1410.7,305.1 1411.0,297.2 1408.4,291.7 1404.1,290.6 1401.3,291.7 1396.6,294.7 1391.8,299.4 1391.6,287.8 1390.5,285.6 1388.5,284.4 1385.7,284.4 1378.2,287.8Z" fill="#a9ccff" filter="url(#b1)"/>
<path d="M802.2,228.9 819.9,226.8 827.2,224.2 847.5,214.3 863.6,208.6 883.9,204.6 909.1,202.7 949.7,203.2 977.5,205.7 1005.3,210.0 1057.4,221.3 1062.6,218.9 1066.0,212.5 1067.8,202.0 1067.8,187.4 1049.5,176.5 1013.1,169.2 958.4,165.6 885.5,165.6 830.8,169.5 794.3,177.3 776.1,189.0 776.1,204.6 778.7,216.4 783.9,224.4 791.7,228.6Z" fill="#7daef5" filter="url(#b1)"/>
<path d="M802.2,223.0 819.3,220.8 826.1,218.3 845.4,208.8 862.6,203.1 883.7,199.0 909.1,196.8 949.7,197.0 977.5,199.4 1005.3,203.6 1057.4,213.7 1062.6,211.5 1066.0,205.9 1067.8,196.8 1067.8,184.3 1049.5,174.9 1013.1,168.7 958.4,165.6 885.5,165.6 830.8,169.1 794.3,176.2 776.1,186.9 776.1,201.1 778.7,211.9 783.9,219.1 791.7,222.8Z" fill="#4e8fe8" filter="url(#b1)"/>
<path d="M791.7,216.1 811.0,215.7 818.3,214.0 824.0,211.2 833.8,204.0 849.0,198.5 881.3,192.8 908.1,189.9 949.7,186.7 977.5,185.9 1005.3,187.1 1057.4,192.3 1062.6,191.1 1066.0,188.0 1067.8,182.9 1067.8,176.0 1049.5,170.8 1013.1,167.3 958.4,165.6 885.5,165.6 830.8,168.7 794.3,174.9 776.1,184.3 776.1,196.8 778.7,206.3 783.9,212.7Z" fill="#2e76d6" filter="url(#b1)"/>
<path d="M788.4,166.8 783.9,169.2 781.7,172.8 782.2,182.2 784.8,190.2 786.9,193.7 792.6,198.5 800.4,200.6 804.1,200.1 807.2,198.4 809.8,195.4 811.9,191.2 815.0,182.4 816.7,172.8 815.0,169.2 810.8,166.8 804.2,165.6 795.2,165.6Z" fill="#1a64c4" filter="url(#b1)"/>
<path d="M729.8,215.9 727.3,219.4 726.1,223.9 727.7,239.0 731.3,246.5 733.8,248.5 736.5,249.2 739.7,248.5 743.1,246.5 748.0,241.2 751.3,231.2 760.0,216.8 761.2,207.2 760.5,201.7 759.1,198.5 757.0,197.8 742.8,210.0 733.4,213.5Z" fill="#a9ccff" filter="url(#b1)"/>
<path d="M762.6,193.2 760.5,197.0 759.4,201.7 758.8,212.3 757.4,216.8 750.6,227.5 749.5,230.7 750.1,236.4 751.8,238.1 754.6,238.8 763.3,237.1 767.4,234.7 770.9,231.2 773.7,226.7 777.2,215.2 777.8,202.4 777.2,195.4 775.6,190.7 773.2,188.3 769.9,188.1 765.7,190.2Z" fill="#4e8fe8" filter="url(#b1)"/>
<path d="M649.4,178.5 650.7,182.1 677.5,224.0 688.6,244.6 693.0,256.7 694.8,267.7 694.8,273.3 693.0,285.1 688.8,297.4 667.4,332.8 657.1,358.3 646.6,392.0 641.0,399.4 628.5,412.1 625.6,417.8 624.9,424.3 626.9,428.7 629.2,430.8 636.6,432.3 647.0,428.8 667.5,419.1 670.3,418.9 675.5,427.6 683.3,445.3 691.8,454.2 696.7,457.4 703.8,459.9 710.3,460.7 722.5,458.7 729.5,455.2 734.7,450.2 738.3,443.8 741.7,433.3 746.7,425.7 772.8,403.2 777.1,397.3 779.4,392.1 781.2,384.3 780.7,376.9 778.8,370.2 772.1,358.7 769.5,351.8 769.5,349.6 776.2,331.1 777.0,325.5 776.4,319.0 772.6,308.5 751.1,264.0 742.4,242.5 726.7,208.9 710.3,170.4 702.9,164.7 694.0,161.7 682.4,160.3 669.1,160.4 658.6,162.4 651.9,167.1 649.5,171.4Z" fill="#7daef5" filter="url(#b1)"/>
<path d="M657.4,177.7 684.4,219.9 695.9,241.2 698.7,248.0 702.2,261.0 702.8,267.3 702.2,280.3 700.8,287.1 696.1,300.6 689.3,312.8 677.8,330.0 671.9,342.3 664.7,361.0 653.7,395.8 646.6,405.1 635.1,416.6 632.7,422.5 633.4,424.1 635.5,424.4 639.0,423.5 665.0,411.4 669.9,410.5 674.0,411.6 677.5,414.5 680.3,419.4 687.9,437.1 692.8,444.4 700.4,450.3 704.9,452.0 715.0,452.4 720.6,451.0 725.1,448.5 728.5,445.1 731.0,440.6 734.4,429.8 740.7,420.4 749.2,412.3 767.2,397.5 772.1,388.8 773.2,384.0 773.0,378.9 771.6,373.7 765.2,362.8 761.4,352.7 761.5,348.2 768.5,329.1 768.6,321.1 763.1,306.7 745.9,271.8 732.4,239.5 719.3,212.1 704.2,175.6 699.5,172.0 692.3,169.5 682.4,168.3 669.9,168.3 661.5,169.9 657.4,173.0Z" fill="#4e8fe8" filter="url(#b1)"/>
<path d="M662.4,169.2 658.6,170.9 658.1,173.5 677.2,196.1 685.8,209.3 693.1,225.3 705.8,261.4 710.8,271.8 713.6,276.0 717.1,279.1 721.2,281.2 731.7,282.2 735.3,280.8 737.0,278.1 736.9,273.9 719.7,232.9 708.1,198.5 699.7,177.7 695.0,173.0 688.4,169.9 679.9,168.3Z" fill="#2e76d6" filter="url(#b1)"/>
<path d="M684.4,330.3 682.7,339.5 683.4,344.4 685.3,348.2 688.4,351.0 692.8,352.7 704.6,353.8 727.5,352.7 734.4,351.0 740.0,348.2 744.2,344.4 746.9,339.5 749.4,328.2 747.6,314.9 741.4,298.2 738.6,294.0 735.1,291.1 731.0,289.3 726.1,288.8 720.6,289.5 715.3,291.6 710.5,295.1 706.0,299.9Z" fill="#2e76d6" filter="url(#b1)"/>
<path d="M700.4,389.7 697.6,393.5 696.6,397.8 697.5,407.7 694.7,429.1 695.7,434.0 698.0,438.5 701.5,442.6 705.5,445.1 710.0,445.8 715.0,444.7 720.6,441.9 725.1,438.1 728.5,433.3 734.4,414.9 737.2,410.7 740.7,407.9 749.2,404.6 758.4,399.2 763.3,395.8 765.3,392.5 764.7,389.3 761.2,386.4 748.7,381.5 736.2,379.4 729.9,379.4 717.4,381.5 704.9,386.4Z" fill="#2e76d6" filter="url(#b1)"/>
<path d="M640.2,193.5 639.1,195.2 640.7,200.3 658.1,238.5 659.4,245.9 659.4,253.9 645.7,312.3 640.3,330.1 624.7,371.8 623.2,377.0 622.8,380.5 623.7,382.2 625.8,382.2 629.9,378.1 639.3,357.2 655.3,329.4 660.3,318.7 664.0,305.1 666.0,300.6 669.5,295.8 685.5,279.3 689.0,273.4 691.0,267.3 691.7,261.0 690.0,248.0 687.6,241.2 680.3,228.1 676.1,222.5 671.6,217.6 656.0,204.6 643.8,195.1Z" fill="#d4e6ff" filter="url(#b1)"/>
<path d="M751.3,263.0 750.2,268.9 750.4,274.9 755.1,292.6 761.2,307.2 769.2,322.2 773.3,336.0 778.5,346.5 781.3,348.5 784.8,349.2 789.0,348.5 798.3,344.2 806.3,339.2 809.8,336.4 814.7,329.8 816.7,321.8 815.5,313.5 809.4,301.0 809.4,296.8 814.8,284.7 814.5,281.2 807.2,272.3 806.8,269.2 808.1,265.9 813.1,258.8 816.0,251.0 816.7,246.8 816.2,242.8 814.5,239.0 807.4,231.9 802.7,229.6 797.5,228.6 791.7,228.8 779.9,231.9 770.9,236.4 764.0,242.6 753.5,257.2Z" fill="#d4e6ff" filter="url(#b1)"/>
<path d="M825.2,230.3 821.9,233.4 820.0,237.8 819.7,248.4 821.8,260.3 823.8,262.3 826.7,262.6 835.5,258.6 843.6,252.5 849.7,245.8 851.6,238.8 848.7,231.9 845.6,229.4 841.4,228.1 829.9,228.4Z" fill="#d4e6ff" filter="url(#b1)"/>
<path d="M868.6,215.8 867.6,219.8 868.1,224.9 870.2,231.2 875.9,241.6 879.6,245.8 902.2,264.9 916.7,275.3 921.6,278.1 925.6,278.6 928.7,276.8 931.0,272.8 935.7,255.7 939.7,246.8 941.7,237.4 941.0,226.7 937.0,218.2 933.8,215.2 929.6,213.1 920.2,211.6 904.1,214.1 898.9,213.9 884.3,210.3 879.8,210.3 871.2,213.0Z" fill="#d4e6ff" filter="url(#b1)"/>
<path d="M829.1,333.9 828.0,336.5 829.6,341.9 833.9,346.2 840.3,348.7 843.6,349.1 849.7,347.7 854.4,343.9 855.5,341.7 855.6,339.2 853.5,333.9 851.5,331.6 845.2,327.9 838.3,327.5 834.8,328.9Z" fill="#d4e6ff" filter="url(#b1)"/>
<path d="M884.1,343.5 883.4,346.6 885.1,349.2 889.3,351.3 892.1,354.3 893.5,358.1 891.7,373.2 892.4,377.4 894.2,380.8 899.9,385.2 906.3,384.7 909.8,382.6 915.7,375.3 922.6,358.1 928.5,348.2 935.8,340.2 949.4,330.8 955.5,324.2 956.7,320.4 956.7,316.2 954.6,309.0 949.7,303.1 946.6,301.5 943.1,301.1 930.8,305.8 916.7,309.0 912.6,310.7 909.1,313.5 901.3,326.8 897.5,331.4Z" fill="#d4e6ff" filter="url(#b1)"/>
<path d="M973.2,224.6 970.0,227.4 968.8,231.2 971.9,247.3 982.4,285.0 982.7,290.6 980.3,301.7 969.9,318.3 944.9,346.1 924.0,375.6 921.2,381.9 919.9,388.1 919.9,394.4 921.2,400.6 931.3,405.3 950.1,408.4 977.5,410.0 1013.6,410.0 1040.7,401.3 1058.8,384.0 1067.8,357.9 1067.8,323.2 1066.0,297.5 1062.6,280.8 1057.4,273.2 1043.8,275.3 1037.6,275.3 1026.1,273.2 1021.6,270.4 1018.1,266.2 1015.7,260.7 1012.2,247.2 1009.4,240.9 1001.8,229.4 996.9,225.5 991.4,223.0 985.1,222.2 978.2,222.8Z" fill="#d4e6ff" filter="url(#b1)"/>
<path d="M774.2,383.4 771.8,387.3 770.6,392.6 770.6,399.6 780.1,404.8 799.2,408.3 827.8,410.0 866.0,410.0 894.0,408.8 911.7,406.4 919.2,402.7 913.4,393.7 907.0,387.4 887.9,375.3 880.1,372.8 876.5,373.2 869.7,376.5 858.1,387.8 852.5,389.5 843.6,386.4 836.9,382.6 829.9,380.5 813.4,381.5 788.1,380.1 777.8,381.2Z" fill="#d4e6ff" filter="url(#b1)"/>
<path d="M915.3,343.2 913.3,347.0 912.2,351.7 913.1,376.0 915.3,381.2 919.7,382.2 921.9,381.2 925.4,376.0 934.1,351.7 935.1,343.2 934.1,340.2 929.4,337.1 922.6,338.1 918.5,340.2Z" fill="#a9ccff" filter="url(#b1)"/>
<path d="M1021.2,256.4 1020.0,298.0 1020.0,353.9 1052.6,395.9 1117.9,423.8 1215.8,437.8 1346.4,437.8 1444.3,436.0 1509.6,432.6 1542.2,427.4 1541.7,408.1 1540.5,397.8 1536.3,386.4 1532.0,381.7 1526.9,380.5 1524.2,381.2 1509.6,389.3 1495.0,394.0 1489.4,394.7 1478.3,394.0 1440.5,383.3 1417.7,374.6 1409.2,368.7 1393.6,353.1 1386.5,349.6 1377.3,348.9 1348.5,350.5 1337.7,347.5 1323.6,338.6 1289.8,311.9 1276.2,297.8 1259.4,276.1 1249.5,268.2 1237.4,261.7 1226.6,260.2 1216.8,262.5 1201.4,268.0 1193.6,274.2 1186.6,287.6 1178.3,294.7 1172.8,297.5 1160.6,301.5 1140.5,303.6 1122.8,301.0 1117.6,299.1 1108.2,293.7 1096.2,283.3 1085.6,272.5 1064.8,245.4 1049.9,229.3 1036.8,219.6 1027.3,216.2 1023.6,229.2ZM218.3,436.0 283.6,432.6 316.2,427.4 315.2,402.7 312.0,389.7 308.2,383.6 306.0,381.7 300.9,380.5 292.6,383.6 283.6,389.3 274.5,392.6 263.4,394.7 252.3,394.0 214.5,383.3 191.7,374.6 183.2,368.7 167.6,353.1 160.5,349.6 151.3,348.9 122.5,350.5 111.7,347.5 97.6,338.6 63.8,311.9 54.4,302.7 37.0,280.1 28.9,272.1 17.2,264.3 7.0,260.6 7.0,437.8 120.4,437.8Z" fill="#d4e6ff" filter="url(#b1)"/>
<path d="M169.4,393.4 90.7,393.4 77.9,395.7 69.4,400.3 65.1,407.1 64.3,425.4 60.0,444.2 54.5,461.4 54.1,470.7 55.8,472.5 58.3,473.1 61.7,472.7 76.0,466.4 89.4,463.3 96.9,463.3 103.2,464.7 110.9,469.4 130.3,488.6 152.2,508.3 154.5,509.3 159.8,509.4 165.9,506.8 172.4,502.2 187.3,486.6 189.2,478.7 191.1,448.6 191.1,426.6 187.5,410.0 180.3,398.9ZM1395.4,393.4 1316.7,393.4 1303.9,395.7 1295.4,400.3 1291.1,407.1 1290.3,425.4 1286.0,444.2 1280.5,461.4 1280.1,470.7 1281.8,472.5 1284.3,473.1 1287.7,472.7 1302.0,466.4 1315.4,463.3 1323.0,463.3 1329.2,464.7 1336.9,469.4 1356.3,488.6 1378.2,508.3 1380.5,509.3 1385.9,509.4 1391.9,506.8 1398.4,502.2 1413.3,486.6 1415.2,478.7 1417.1,448.6 1417.1,426.6 1413.5,410.0 1406.3,398.9Z" fill="#d4e6ff" filter="url(#b1)"/>
<path d="M58.6,471.7 54.8,475.8 52.2,481.0 51.2,489.3 52.5,494.6 55.2,498.9 63.8,507.2 71.0,512.9 79.6,517.6 105.9,524.8 116.7,526.2 122.4,526.0 128.6,525.0 139.0,521.6 145.7,517.4 148.8,513.5 149.4,508.0 146.9,503.2 131.0,491.3 108.9,467.3 104.0,463.6 98.8,461.5 92.9,460.6 80.9,461.6 68.8,465.5ZM1284.7,471.7 1280.8,475.8 1278.2,481.0 1277.2,489.3 1278.5,494.6 1281.2,498.9 1289.9,507.2 1297.0,512.9 1305.6,517.6 1331.9,524.8 1342.7,526.2 1348.4,526.0 1354.6,525.0 1365.0,521.6 1371.7,517.4 1374.8,513.5 1375.4,508.0 1372.9,503.2 1357.0,491.3 1335.0,467.3 1330.0,463.6 1324.8,461.5 1318.9,460.6 1306.9,461.6 1294.8,465.5Z" fill="#7daef5" filter="url(#b1)"/>
<path d="M60.0,473.2 56.5,476.9 54.1,481.4 53.2,489.3 54.3,493.8 56.6,497.5 65.1,505.7 72.1,511.2 80.4,515.8 106.3,522.8 116.8,524.2 122.3,524.0 138.0,519.9 144.4,515.8 147.1,512.4 147.5,508.4 145.4,504.6 129.7,492.8 107.5,468.6 102.9,465.3 92.8,462.6 81.2,463.6 69.7,467.3ZM1286.0,473.2 1282.5,476.9 1280.1,481.4 1279.2,489.3 1280.3,493.8 1282.6,497.5 1291.1,505.7 1298.1,511.2 1306.4,515.8 1332.3,522.8 1342.9,524.2 1348.3,524.0 1364.1,519.9 1370.5,515.8 1373.1,512.4 1373.5,508.4 1371.4,504.6 1355.7,492.8 1333.5,468.6 1328.9,465.3 1318.8,462.6 1307.2,463.6 1295.7,467.3Z" fill="#4e8fe8" filter="url(#b1)"/>
<path d="M59.0,478.6 56.2,485.8 56.2,489.3 58.7,495.4 73.6,508.7 81.7,513.1 101.7,518.8 117.1,521.2 132.4,518.8 140.0,515.4 144.3,511.3 144.5,509.0 143.2,506.6 132.0,498.5 123.4,491.0 105.4,470.7 97.5,466.4 87.0,465.8 76.3,467.9 66.0,472.5ZM1285.0,478.6 1282.2,485.8 1282.2,489.3 1284.8,495.4 1299.7,508.7 1307.7,513.1 1327.8,518.8 1343.1,521.2 1358.4,518.8 1366.1,515.4 1370.3,511.3 1370.5,509.0 1369.3,506.6 1358.0,498.5 1349.5,491.0 1331.4,470.7 1323.5,466.4 1313.1,465.8 1302.3,467.9 1292.0,472.5Z" fill="#2e76d6" filter="url(#b1)"/>
<path d="M49.9,503.9 76.2,519.4 88.7,524.3 106.0,528.2 119.4,528.2 136.9,524.3 148.9,519.6 170.0,506.5 179.2,499.6 180.0,497.6 178.8,495.6 176.4,495.5 164.7,504.1 143.3,516.7 131.3,520.7 118.9,523.2 106.7,523.2 86.0,518.1 74.9,513.0 52.5,499.7 49.6,500.4 49.0,502.2ZM1275.9,503.9 1302.2,519.4 1314.7,524.3 1332.0,528.2 1345.4,528.2 1362.9,524.3 1374.9,519.6 1396.1,506.5 1405.2,499.6 1406.0,497.6 1404.8,495.6 1402.4,495.5 1390.7,504.1 1369.3,516.7 1357.3,520.7 1344.9,523.2 1332.7,523.2 1312.0,518.1 1300.9,513.0 1278.5,499.7 1275.6,500.4 1275.0,502.2Z" fill="#7daef5" filter="url(#b1)"/>
<path d="M51.0,502.7 76.9,517.9 89.2,522.7 106.3,526.5 119.3,526.5 136.4,522.7 148.0,518.2 169.0,505.2 178.3,497.7 177.1,497.1 165.6,505.6 147.4,516.7 136.0,521.1 119.1,524.9 106.5,524.9 85.4,519.7 74.0,514.5 51.9,501.3 50.8,501.5ZM1277.1,502.7 1302.9,517.9 1315.2,522.7 1332.3,526.5 1345.3,526.5 1362.5,522.7 1374.1,518.2 1395.0,505.2 1404.3,497.7 1403.1,497.1 1391.6,505.6 1373.4,516.7 1362.0,521.1 1345.1,524.9 1332.5,524.9 1311.4,519.7 1300.1,514.5 1277.9,501.3 1276.9,501.5Z" fill="#d4e6ff" filter="url(#b1)"/>
<path d="M7.0,553.0 19.1,537.3 21.9,530.8 24.0,523.0 28.3,493.8 31.3,484.4 42.6,461.3 41.7,459.2 37.9,460.4 23.8,468.5 7.0,473.0ZM1184.4,512.9 1188.3,514.5 1194.7,513.8 1199.7,514.6 1203.3,517.0 1205.6,521.0 1206.9,536.3 1204.8,551.6 1205.4,557.9 1206.5,560.3 1208.4,562.1 1214.5,563.9 1222.0,561.9 1226.0,559.4 1238.1,547.3 1245.2,537.3 1247.9,530.8 1250.1,523.0 1254.3,493.8 1257.3,484.4 1268.6,461.3 1267.7,459.2 1263.9,460.4 1249.8,468.5 1242.2,471.1 1211.1,476.1 1200.0,479.3 1195.4,482.6 1191.1,487.7 1187.3,494.4 1183.9,502.9 1182.9,509.0Z" fill="#7daef5" filter="url(#b1)"/>
<path d="M15.5,509.4 19.6,509.5 23.0,507.5 25.7,503.5 34.4,483.3 43.8,466.6 45.8,461.3 44.5,459.2 40.0,460.4 24.5,468.5 7.0,473.0 7.0,505.6ZM1182.8,509.4 1185.1,510.5 1206.4,503.1 1214.9,501.7 1223.5,502.7 1232.3,505.3 1241.5,509.4 1245.6,509.5 1249.0,507.5 1251.8,503.5 1256.8,490.7 1269.9,466.6 1271.8,461.3 1270.5,459.2 1266.0,460.4 1250.5,468.5 1242.4,471.1 1200.0,477.2 1195.4,479.9 1191.1,484.6 1187.3,491.3 1182.4,505.9Z" fill="#a9ccff" filter="url(#b1)"/>
<path d="M7.0,550.7 12.7,543.3 12.9,539.9 10.8,536.5 7.0,535.1ZM1218.1,557.7 1222.3,557.3 1226.3,555.7 1234.5,549.3 1238.9,542.7 1238.8,539.2 1236.8,536.5 1233.4,535.1 1227.3,536.4 1212.1,546.5 1209.3,551.3 1209.9,554.1 1212.4,556.1Z" fill="#4e8fe8" filter="url(#b1)"/>
<path d="M10.4,542.2 10.4,540.1 9.1,538.4 7.0,537.6 7.0,547.2ZM1221.8,554.9 1228.8,551.1 1235.2,544.8 1236.4,540.1 1235.2,538.4 1233.4,537.6 1228.1,538.8 1217.1,545.6 1212.2,550.6 1211.7,551.8 1213.5,553.9 1218.6,555.2Z" fill="#2e76d6" filter="url(#b1)"/>
<path d="M1160.0,598.8 1164.5,600.9 1172.2,599.7 1180.5,595.9 1188.0,589.8 1192.1,583.9 1194.6,577.2 1195.4,567.2 1193.5,562.1 1190.6,560.8 1186.3,562.1 1178.5,568.3 1167.4,573.9 1163.1,577.3 1160.4,581.6 1158.6,587.7 1158.2,594.2Z" fill="#4e8fe8" filter="url(#b1)"/>
<path d="M1163.2,598.1 1166.7,598.4 1174.1,596.4 1181.7,592.2 1186.2,588.1 1189.8,582.8 1192.1,576.8 1192.9,567.3 1191.7,563.9 1190.6,563.3 1187.3,564.4 1179.9,570.4 1168.8,576.0 1164.9,578.9 1161.7,585.2 1160.7,591.3 1161.1,596.0Z" fill="#2e76d6" filter="url(#b1)"/>
<path d="M397.3,472.3 398.7,482.4 403.3,491.2 409.7,495.8 417.5,497.7 429.9,503.4 435.6,508.9 439.8,521.7 444.4,525.7 446.4,526.1 447.9,525.0 451.4,511.4 456.6,502.2 457.0,499.2 454.5,488.9 454.3,484.0 456.3,465.2 458.9,451.6 466.6,430.6 469.1,417.6 468.3,403.9 466.3,398.7 463.4,395.2 459.3,393.4 454.2,393.4 449.7,395.4 445.9,399.5 442.7,405.5 437.2,420.6 433.8,426.7 425.7,435.9 405.0,452.8 399.7,461.7Z" fill="#d4e6ff" filter="url(#b1)"/>
<path d="M1553.4,405.3 1553.4,410.0 1555.5,413.7 1559.0,416.1 1559.0,399.8 1556.6,401.2ZM330.5,401.2 327.4,405.3 327.4,410.0 329.5,413.7 333.7,416.6 340.1,418.6 357.2,421.0 382.7,426.7 397.8,433.8 410.4,444.7 416.5,448.7 422.9,450.7 429.5,450.8 436.3,448.9 455.5,440.0 461.5,435.9 465.9,431.2 468.9,425.9 470.4,419.9 470.4,413.2 469.3,407.2 467.2,402.0 464.0,397.6 459.7,393.9 450.6,389.3 435.9,387.4 427.8,382.4 420.4,375.1 410.4,370.4 404.4,369.0 398.9,369.3 393.8,371.3 389.1,375.0 384.8,380.3 378.4,385.0 369.9,388.9 359.3,392.1 346.5,394.6 336.9,397.6Z" fill="#d4e6ff" filter="url(#b1)"/>
<path d="M481.3,335.8 478.8,337.9 477.1,341.4 476.3,348.2 478.3,359.5 483.8,374.9 489.4,384.7 495.8,391.8 500.7,394.7 504.7,395.3 507.4,394.7 511.9,391.1 513.8,387.2 514.6,382.4 512.9,367.0 508.9,354.9 503.0,344.3 496.1,337.2 491.6,334.8 487.3,334.1Z" fill="#7daef5" filter="url(#b1)"/>
<path d="M484.5,342.0 483.4,344.3 484.0,352.7 486.4,362.4 490.2,372.2 497.5,383.6 502.6,388.0 504.5,388.3 507.0,385.3 507.6,378.6 506.0,368.3 502.6,358.0 494.7,345.2 489.2,341.4 486.4,341.1Z" fill="#4e8fe8" filter="url(#b1)"/>
<path d="M483.8,547.5 483.4,550.9 484.4,553.9 488.3,558.7 488.3,560.8 480.0,568.5 475.3,575.0 475.1,578.1 477.0,580.1 479.8,580.9 487.8,579.2 505.7,570.2 523.8,563.6 544.9,567.2 549.0,564.9 552.6,556.8 551.9,551.4 547.1,543.9 532.1,528.1 526.4,525.7 497.2,532.8 489.1,538.9Z" fill="#d4e6ff" filter="url(#b1)"/>
<path d="M501.7,470.8 500.0,472.9 503.6,483.3 512.1,499.2 523.3,514.1 528.1,522.5 532.2,526.6 535.1,527.8 541.0,528.3 542.4,527.2 542.5,522.5 540.4,516.9 523.1,493.2 515.1,479.9 509.7,473.5 506.8,471.7Z" fill="#a9ccff" filter="url(#b1)"/>
<path d="M422.1,623.3 420.6,624.3 427.2,630.7 433.9,642.3 438.7,645.6 441.9,645.0 441.2,639.8 434.8,627.0 430.7,624.1Z" fill="#d4e6ff" filter="url(#b1)"/>
<path d="M405.7,666.4 408.9,666.8 412.8,661.6 422.4,658.3 423.8,656.5 422.5,653.1 421.2,651.7 417.7,651.0 408.8,655.9 405.0,660.1 404.6,663.4Z" fill="#d4e6ff" filter="url(#b1)"/>
<path d="M387.5,638.5 388.2,640.3 389.1,640.3 397.1,634.5 412.1,630.9 414.6,628.7 410.2,626.8 404.0,626.1 395.0,627.5 389.0,632.2Z" fill="#d4e6ff" filter="url(#b1)"/>
<path d="M449.9,636.9 448.3,639.3 448.5,643.0 451.6,648.9 466.6,658.6 470.4,660.0 472.5,659.5 471.2,655.4 458.2,638.9 453.6,636.5Z" fill="#a9ccff" filter="url(#b1)"/>
<path d="M437.8,677.2 435.2,681.0 434.6,687.3 435.6,691.4 436.5,691.9 440.7,689.3 453.4,676.1 454.4,673.7 453.0,672.4 449.5,672.8Z" fill="#7daef5" filter="url(#b1)"/>
<path d="M546.1,717.4 545.0,718.7 545.7,724.8 550.2,732.2 563.0,738.6 565.3,739.2 568.1,738.6 568.3,735.9 567.5,734.4 561.9,729.3 555.7,721.4 551.1,718.4Z" fill="#d4e6ff" filter="url(#b1)"/>
<path d="M526.3,861.5 524.8,862.6 521.3,871.6 519.1,873.7 506.8,878.0 501.5,882.0 499.3,884.8 496.4,892.3 492.5,907.5 485.9,925.5 484.0,935.3 485.9,948.5 490.4,958.5 493.6,962.2 497.4,964.4 501.9,965.1 511.9,963.2 540.6,952.1 572.1,945.4 574.7,943.7 576.0,941.5 575.1,936.3 570.9,932.5 563.6,930.0 540.0,925.3 531.3,921.7 525.3,916.5 522.8,909.5 522.6,902.2 524.7,895.2 532.1,878.3 533.4,872.4 531.8,865.2 528.1,861.7Z" fill="#7daef5" filter="url(#b1)"/>
<path d="M525.9,861.5 524.7,862.6 521.3,871.6 519.1,873.7 506.8,878.0 501.5,882.0 499.3,884.8 496.4,892.3 492.5,907.5 485.9,925.5 484.0,935.3 484.7,943.4 487.8,951.1 490.4,954.7 495.5,958.7 500.6,958.3 516.0,951.9 523.4,946.0 525.7,941.3 524.7,933.2 516.6,919.7 515.2,910.6 515.9,905.2 518.8,897.6 528.8,877.8 530.6,872.4 530.3,865.2 527.4,861.7Z" fill="#d4e6ff" filter="url(#b1)"/>
<path d="M681.5,539.5 685.4,544.5 700.6,552.5 709.1,562.6 712.6,564.8 712.7,563.0 710.7,558.8 704.5,550.5 704.3,546.8 741.1,516.9 745.4,510.0 746.2,505.9 746.2,501.4 744.3,494.6 739.9,490.7 736.7,483.6 735.6,465.9 733.5,459.6 729.6,458.3 724.1,458.7 714.5,462.8 694.7,482.0 688.1,490.2 682.6,502.2 679.4,516.4 679.4,531.0Z" fill="#d4e6ff" filter="url(#b1)"/>
<path d="M754.2,508.2 755.7,511.4 758.2,513.1 761.6,513.4 773.1,512.7 786.3,509.4 790.7,505.4 793.8,499.2 800.7,494.4 801.6,492.4 801.9,484.2 803.4,482.6 815.1,480.5 819.7,477.6 820.5,476.1 820.1,474.8 815.4,472.9 809.1,472.5 799.6,474.0 797.2,473.6 794.1,470.7 793.5,468.5 794.1,462.7 803.7,440.6 802.7,435.6 800.5,434.0 798.3,433.9 793.5,438.4 786.5,452.1 780.1,469.6 774.8,491.7 772.4,497.9 769.2,501.5 764.1,502.7 760.8,500.6 755.6,492.2 754.1,497.4Z" fill="#d4e6ff" filter="url(#b1)"/>
<path d="M843.8,441.9 846.6,444.0 849.5,444.5 854.8,442.3 857.6,439.1 858.7,435.0 862.9,428.8 863.1,425.4 859.1,423.0 852.0,422.4 842.5,424.0 839.3,426.1 838.0,429.2 838.6,433.3Z" fill="#d4e6ff" filter="url(#b1)"/>
<path d="M738.2,457.5 737.3,461.0 739.4,460.3 743.3,456.8 756.0,442.5 760.5,435.7 768.2,419.3 776.0,407.4 787.5,397.8 810.1,384.6 811.8,382.3 811.8,380.0 810.1,377.9 807.5,376.8 804.1,376.8 794.8,380.0 782.0,387.0 772.4,395.5 764.8,406.3 755.0,427.6Z" fill="#a9ccff" filter="url(#b1)"/>
<path d="M762.6,558.5 762.2,560.3 763.3,563.9 768.0,570.9 775.7,577.7 783.0,582.0 780.5,577.2 767.6,561.7 764.8,559.1Z" fill="#d4e6ff" filter="url(#b1)"/>
<path d="M754.1,608.5 757.3,611.6 768.1,614.0 767.5,611.8 759.2,602.9 759.2,597.4 758.0,596.2 755.6,596.7 754.1,599.4 753.5,603.4Z" fill="#d4e6ff" filter="url(#b1)"/>
<path d="M820.8,572.1 825.6,574.6 839.5,573.8 850.8,576.5 855.6,576.0 857.3,574.9 857.8,573.1 856.7,570.8 851.5,566.5 847.1,564.1 842.3,563.0 835.9,563.8 830.6,562.8 826.3,563.3 820.2,567.8 819.8,570.2Z" fill="#4e8fe8" filter="url(#b1)"/>
<path d="M823.7,572.4 828.1,573.3 839.7,572.3 850.8,575.0 855.0,574.6 856.3,573.1 850.6,567.7 846.5,565.5 842.2,564.5 836.0,565.3 830.5,564.3 826.8,564.7 821.5,568.7 821.3,570.0Z" fill="#2e76d6" filter="url(#b1)"/>
<path d="M819.0,557.2 817.8,562.1 818.2,563.3 820.3,563.9 830.2,560.2 832.4,557.0 831.4,555.0 825.7,553.5 822.0,554.6Z" fill="#d4e6ff" filter="url(#b1)"/>
<path d="M883.9,625.1 883.1,627.8 885.0,633.9 889.9,642.6 894.0,646.7 897.6,647.8 901.7,647.4 905.5,645.7 909.5,641.4 910.4,638.6 909.5,637.2 905.2,637.8 899.3,636.0 895.3,632.7 888.4,624.6 886.7,624.1Z" fill="#d4e6ff" filter="url(#b1)"/>
<path d="M946.5,646.6 946.5,648.2 952.6,656.2 964.0,675.2 978.1,701.8 982.0,705.5 977.2,698.9 963.1,665.5 950.0,648.7Z" fill="#d4e6ff" filter="url(#b1)"/>
<path d="M1126.6,582.0 1120.5,588.2 1121.3,591.6 1127.8,597.9 1128.0,599.3 1125.2,605.8 1131.5,623.3 1131.5,626.3 1129.6,632.1 1123.8,640.0 1115.5,646.4 1082.0,658.7 1080.6,662.2 1081.7,666.2 1083.6,667.9 1088.1,666.9 1099.8,661.1 1118.8,657.0 1126.2,653.6 1130.1,650.1 1149.0,627.8 1158.1,615.1 1158.1,612.8 1154.0,611.7 1149.5,607.2 1148.4,594.4 1145.6,588.1 1141.2,583.1 1135.5,580.4 1132.6,580.1Z" fill="#d4e6ff" filter="url(#b1)"/>
<path d="M1057.3,686.3 1055.5,689.5 1053.4,701.4 1054.0,706.6 1061.9,718.8 1070.6,728.1 1074.0,736.3 1077.4,741.5 1081.2,751.6 1086.4,753.8 1107.8,756.8 1113.8,754.4 1116.1,751.6 1115.4,747.4 1112.6,746.1 1099.8,743.5 1095.1,741.2 1092.1,738.0 1090.8,731.8 1092.8,726.5 1098.0,725.1 1112.5,717.1 1116.0,713.5 1117.9,708.5 1116.0,707.7 1114.4,708.1 1105.3,714.7 1101.3,715.4 1098.0,713.3 1093.8,707.9 1092.2,702.6 1091.9,696.0 1090.3,692.7 1088.7,692.8 1079.1,699.3 1075.7,699.6 1063.8,687.2 1060.4,685.6Z" fill="#d4e6ff" filter="url(#b1)"/>
<path d="M1135.3,793.3 1137.9,792.2 1146.9,784.0 1149.7,782.9 1158.3,782.6 1160.9,781.3 1167.9,773.8 1174.3,772.1 1180.9,773.6 1182.6,775.4 1183.2,783.6 1184.5,786.0 1189.6,789.9 1194.3,791.1 1196.0,790.5 1198.4,787.2 1201.3,777.3 1202.8,776.2 1204.9,777.7 1207.7,782.0 1214.9,795.7 1223.9,807.3 1233.0,816.1 1236.0,818.3 1238.8,818.8 1236.2,813.2 1223.5,798.4 1219.6,792.7 1214.1,774.3 1210.9,767.5 1206.4,764.0 1196.6,760.8 1193.3,758.0 1189.2,752.3 1186.0,749.9 1181.9,750.1 1178.3,751.9 1172.4,758.2 1144.3,778.2 1137.9,785.1ZM7.0,816.0 11.9,819.3 12.8,817.6 7.0,809.2Z" fill="#d4e6ff" filter="url(#b1)"/>
<path d="M1107.5,808.0 1118.9,800.2 1131.4,794.7 1134.9,791.0 1135.0,789.0 1133.0,787.9 1129.5,788.3 1119.6,793.6 1110.3,800.6 1107.5,804.3 1106.2,807.7Z" fill="#d4e6ff" filter="url(#b1)"/>
<path d="M1210.8,875.3 1209.0,878.9 1211.3,882.8 1216.2,884.8 1219.6,885.0 1222.1,884.3 1223.6,882.6 1223.7,876.5 1222.4,874.1 1220.3,872.9 1217.3,872.8Z" fill="#d4e6ff" filter="url(#b1)"/>
<path d="M33.8,820.0 32.3,824.2 37.0,837.3 50.4,864.7 56.6,872.7 63.2,878.1 69.0,879.2 71.5,878.1 72.6,876.2 72.1,873.5 61.3,856.6 51.1,830.6 45.8,820.8 42.8,818.4 39.6,817.6ZM1259.9,820.0 1258.4,824.2 1263.0,837.3 1276.5,864.7 1282.6,872.7 1289.2,878.1 1295.0,879.2 1297.5,878.1 1298.6,876.2 1298.2,873.5 1287.3,856.6 1277.1,830.6 1271.8,820.8 1268.8,818.4 1265.6,817.6Z" fill="#4e8fe8" filter="url(#b2)"/>
<path d="M58.7,911.2 57.0,914.5 55.8,922.1 56.2,930.0 58.5,937.7 60.7,941.1 66.8,947.1 70.7,948.8 79.6,949.2 89.4,945.6 97.5,939.4 105.8,926.9 109.5,914.2 113.9,908.5 119.0,904.8 120.7,900.9 118.9,897.3 113.2,895.4 88.1,894.9 81.7,897.1 64.7,906.1ZM1284.8,911.2 1283.1,914.5 1281.8,922.1 1282.2,930.0 1284.5,937.7 1286.7,941.1 1292.8,947.1 1296.7,948.8 1305.6,949.2 1315.4,945.6 1323.5,939.4 1331.8,926.9 1335.5,914.2 1339.9,908.5 1345.0,904.8 1346.7,900.9 1344.9,897.3 1339.2,895.4 1314.1,894.9 1307.7,897.1 1290.7,906.1Z" fill="#7daef5" filter="url(#b2)"/>
<path d="M62.3,914.2 60.7,922.5 61.7,930.6 65.3,937.7 68.0,940.2 74.9,942.8 83.1,941.9 86.7,940.2 93.0,934.3 95.1,928.1 94.3,925.3 90.2,919.8 85.8,909.5 82.6,904.9 78.5,904.0 70.2,906.7 66.8,908.5ZM1288.3,914.2 1286.7,922.5 1287.7,930.6 1291.4,937.7 1294.0,940.2 1300.9,942.8 1309.1,941.9 1312.7,940.2 1319.0,934.3 1321.2,928.1 1320.3,925.3 1316.3,919.8 1311.8,909.5 1308.6,904.9 1304.6,904.0 1296.2,906.7 1292.8,908.5Z" fill="#a9ccff" filter="url(#b1)"/>
<path d="M63.2,873.9 63.8,879.0 67.5,882.8 76.4,884.5 78.5,883.9 80.9,881.1 79.6,874.6 75.8,870.1 70.2,869.4 64.5,872.0ZM1289.2,873.9 1289.9,879.0 1293.5,882.8 1302.4,884.5 1304.6,883.9 1306.9,881.1 1305.6,874.6 1301.8,870.1 1296.2,869.4 1290.5,872.0Z" fill="#7daef5" filter="url(#b1)"/>
<path d="M785.2,862.5 788.7,864.7 793.5,864.3 801.2,861.2 804.8,858.4 802.4,857.0 786.5,857.0 783.7,858.8Z" fill="#d4e6ff" filter="url(#b1)"/>
<path d="M589.3,466.1 574.6,482.5 573.9,484.9 574.7,486.8 577.2,488.3 583.5,487.9 591.8,483.2 608.5,468.6 642.5,434.6 654.0,421.0 662.5,407.4 664.7,401.8 665.1,397.4 663.9,394.3 661.0,392.3 657.6,392.1 653.7,393.5 649.4,396.7 610.7,436.0 598.8,451.6Z" fill="#a9ccff" filter="url(#b1)"/>
<path d="M614.6,441.6 616.1,447.0 620.2,452.6 627.0,458.4 634.0,462.8 641.3,465.7 648.9,467.2 671.5,468.6 691.6,474.0 707.7,479.8 711.8,480.3 715.2,479.3 717.9,476.9 719.8,473.0 720.1,468.4 718.6,463.0 715.4,456.9 691.1,422.9 685.6,417.6 679.2,413.7 672.2,411.3 664.4,410.3 656.9,410.5 649.6,412.0 642.5,414.7 629.7,422.7 624.3,427.1 615.8,436.5Z" fill="#7daef5" filter="url(#b1)"/>
<path d="M620.1,445.0 621.8,449.4 625.1,453.5 629.9,457.4 635.7,460.2 642.5,461.9 650.3,462.5 659.1,462.1 666.7,460.6 673.3,458.2 678.8,454.8 683.1,450.4 685.9,445.6 687.1,440.5 686.8,435.1 684.8,429.2 681.5,424.4 676.9,420.5 671.0,417.6 663.7,415.6 656.4,415.2 649.1,416.1 641.8,418.6 628.7,426.6 624.3,430.9 621.4,435.6 619.9,440.4Z" fill="#a9ccff" filter="url(#b1)"/>
<path d="M629.2,443.2 631.1,450.1 633.6,453.1 637.1,455.1 641.7,456.3 654.2,456.2 665.6,453.4 674.1,448.2 676.8,444.9 678.3,441.3 678.5,437.3 677.5,432.9 675.4,429.1 671.9,426.0 661.5,421.5 650.6,420.9 645.5,422.2 636.6,427.5 631.1,434.8Z" fill="#d4e6ff" filter="url(#b1)"/>
<path d="M623.9,460.1 578.9,512.8 562.9,536.3 539.2,577.1 539.4,583.1 543.3,587.7 549.3,588.8 554.6,585.8 587.9,530.9 598.5,517.1 636.3,473.0 638.4,467.3 637.8,463.9 635.9,460.9 633.0,458.9 629.6,458.2Z" fill="#2e76d6" filter="url(#b2)"/>
<path d="M625.9,463.6 605.6,488.1 605.2,491.9 607.6,494.9 610.9,495.4 613.5,494.0 633.6,470.0 634.3,466.2 632.2,463.0 628.5,462.2Z" fill="#4e8fe8" filter="url(#b2)"/>
<path d="M656.2,489.9 653.2,493.5 650.3,502.6 650.1,507.7 651.8,518.7 653.7,524.5 656.4,528.6 659.8,531.1 663.9,531.8 668.8,530.8 673.0,528.1 676.7,523.8 679.7,517.7 682.2,509.9 683.1,503.0 682.6,496.9 680.7,491.7 677.3,487.3 673.5,484.7 669.4,483.7 664.9,484.4Z" fill="#2e76d6" filter="url(#b2)"/>
<path d="M660.9,498.4 659.3,505.5 660.8,514.2 664.2,518.4 668.8,518.3 672.4,513.8 673.9,509.9 674.6,506.3 673.9,499.7 670.6,495.0 668.4,494.2 663.0,496.1Z" fill="#4e8fe8" filter="url(#b1)"/>
<path d="M698.6,471.3 696.9,473.7 696.2,476.9 696.7,480.8 698.0,483.9 702.6,488.1 706.0,489.0 712.4,488.1 718.4,483.2 719.8,480.3 719.8,477.4 718.4,474.4 712.3,469.6 705.2,468.6Z" fill="#7daef5" filter="url(#b1)"/>
<path d="M718.4,597.3 716.9,599.1 719.2,599.7 741.1,593.2 769.8,589.5 771.1,588.1 769.8,586.1 759.5,581.6 751.6,569.8 748.1,569.3 740.7,575.7 730.3,589.4 724.1,594.3Z" fill="#4e8fe8" filter="url(#b1)"/>
<path d="M756.4,586.4 756.7,588.2 761.5,589.2 768.2,589.1 770.1,587.8 768.5,584.8 762.7,582.2 759.0,583.4Z" fill="#2e76d6" filter="url(#b1)"/>
<path d="M760.6,598.9 759.4,601.5 763.3,607.0 779.1,615.5 781.0,615.7 784.6,614.4 793.3,604.7 795.4,603.9 799.8,604.7 793.5,600.7 782.9,591.4 778.8,591.6 768.5,597.8Z" fill="#2e76d6" filter="url(#b1)"/>
<path d="M798.5,597.3 799.1,599.5 800.5,600.8 802.7,601.0 806.3,600.3 809.0,598.1 810.0,594.1 808.8,588.1 806.5,584.0 805.0,583.2 801.8,584.2 800.5,586.4Z" fill="#4e8fe8" filter="url(#b1)"/>
<path d="M814.8,613.1 828.0,615.6 833.9,613.8 837.5,607.7 837.1,603.6 835.9,602.0 830.7,600.4 823.4,600.7 817.3,602.0 812.9,604.4 811.0,607.7 811.0,609.8 812.2,611.6Z" fill="#4e8fe8" filter="url(#b1)"/>
<path d="M466.7,667.5 467.8,668.7 475.2,670.3 482.1,669.2 494.1,669.9 495.3,668.9 486.5,667.4 480.5,664.2 473.6,662.8 469.8,663.9Z" fill="#a9ccff" filter="url(#b1)"/>
<path d="M471.8,665.9 476.2,667.5 481.7,666.9 480.6,665.6 477.4,664.7Z" fill="#d4e6ff" filter="url(#b1)"/>
<path d="M453.4,668.5 452.2,669.1 455.1,670.1 458.3,669.5Z" fill="#a9ccff" filter="url(#b1)"/>
<path d="M508.2,670.7 509.8,684.6 507.4,692.7 509.0,694.1 511.8,689.8 512.8,683.0 510.3,670.1Z" fill="#7daef5" filter="url(#b1)"/>
<path d="M548.4,713.6 547.8,715.1 548.5,717.1 559.1,727.7 566.2,730.9 568.7,731.4 571.3,730.0 569.2,723.1 562.8,715.4 557.0,712.5 553.8,712.2Z" fill="#7daef5" filter="url(#b1)"/>
<path d="M7.0,495.6 15.8,498.3 18.6,498.4 20.9,497.2 28.6,484.1 38.8,474.1 44.5,467.0 46.8,463.3 47.6,460.9 46.9,459.7 44.7,459.9 37.3,463.1 26.2,471.4 18.5,475.8 7.0,477.8ZM1186.0,503.3 1187.4,505.5 1194.6,506.3 1197.8,505.1 1207.3,497.2 1217.5,494.8 1229.7,495.2 1244.6,498.4 1246.9,497.2 1248.8,494.8 1254.7,484.1 1267.8,470.6 1273.6,460.9 1272.9,459.7 1270.7,459.9 1263.3,463.1 1252.2,471.4 1244.5,475.8 1240.4,477.0 1213.8,479.3 1207.5,481.2 1201.5,484.4 1195.7,489.0 1190.2,495.0 1186.9,499.8Z" fill="#d4e6ff" filter="url(#b1)"/>
<path d="M7.0,564.7 28.3,543.5 56.3,510.6 57.2,507.6 55.8,504.9 53.2,504.0 50.4,505.1 26.2,533.9 7.0,553.8ZM1204.4,615.9 1214.0,587.2 1217.2,580.7 1224.6,572.4 1245.9,552.3 1261.8,535.0 1282.5,510.2 1283.1,507.2 1281.5,504.7 1278.9,504.0 1276.4,505.1 1248.4,538.1 1216.1,569.6 1210.6,576.1 1206.4,584.6 1198.1,611.7 1198.8,615.4 1201.5,616.8Z" fill="#0d55ae" filter="url(#b2)"/>
<path d="M59.8,522.9 78.6,531.4 94.5,535.6 105.0,537.0 115.4,537.1 131.3,534.7 152.3,527.5 172.9,517.2 190.7,505.8 209.9,492.0 211.1,488.9 209.5,486.9 206.9,486.8 183.1,503.7 165.0,514.6 144.9,524.1 130.0,528.8 115.2,531.1 105.4,531.0 95.5,529.7 75.8,524.0 55.8,513.8 53.0,514.3 51.9,516.3 52.6,518.6ZM1285.8,522.9 1304.6,531.4 1320.5,535.6 1331.0,537.0 1341.5,537.1 1357.3,534.7 1378.3,527.5 1398.9,517.2 1416.7,505.8 1435.9,492.0 1437.1,488.9 1435.5,486.9 1432.9,486.8 1409.1,503.7 1391.0,514.6 1370.9,524.1 1356.0,528.8 1341.2,531.1 1331.4,531.0 1321.5,529.7 1301.8,524.0 1281.8,513.8 1279.1,514.3 1277.9,516.3 1278.6,518.6Z" fill="#0d55ae" filter="url(#b2)"/>
<path d="M438.4,749.0 445.2,769.2 449.8,778.2 467.1,801.4 471.2,814.5 471.2,824.6 468.6,841.2 454.8,903.7 455.3,905.3 456.9,906.0 458.7,904.4 471.5,847.1 475.2,825.1 475.2,814.1 474.2,808.8 470.7,799.6 453.2,776.1 447.0,763.4 442.3,748.3 440.4,747.0Z" fill="#0d55ae" filter="url(#b1)"/>
<path d="M356.7,668.7 379.7,679.8 405.4,688.8 422.1,697.7 424.4,696.6 423.8,694.6 410.7,687.3 376.4,674.6 358.6,665.9 356.9,666.2Z" fill="#0d55ae" filter="url(#b1)"/>
<path d="M130.7,782.9 126.0,809.3 108.1,863.1 109.6,865.5 112.0,864.2 129.9,810.4 133.3,795.1 134.6,783.7 133.4,781.8ZM1356.7,782.9 1352.1,809.3 1334.1,863.1 1335.7,865.5 1338.0,864.2 1355.9,810.4 1359.3,795.1 1360.6,783.7 1359.4,781.8Z" fill="#0d55ae" filter="url(#b1)"/>
<path d="M1032.0,721.9 1054.9,751.9 1061.8,758.6 1069.8,763.7 1084.1,768.4 1099.3,771.4 1127.6,773.4 1129.5,772.3 1129.5,770.5 1128.1,769.5 1099.9,767.5 1085.0,764.5 1071.6,760.2 1064.2,755.4 1057.8,749.2 1035.6,720.6 1033.9,719.8Z" fill="#0d55ae" filter="url(#b1)"/>
<path d="M1151.9,683.1 1151.7,703.1 1152.8,711.9 1154.4,713.0 1155.7,711.5 1154.4,699.4 1154.7,683.8 1154.0,682.6Z" fill="#0d55ae" filter="url(#b1)"/>
<path d="M509.9,203.9 506.2,197.0 500.4,189.8 492.0,184.5 481.7,181.5 472.4,180.8 464.1,182.2 457.8,181.6 451.8,178.8 444.8,181.3 439.1,188.4 431.0,195.1 405.8,212.0 401.3,217.2 398.6,222.7 395.7,225.5 391.3,227.2 387.9,232.1 386.4,239.9 386.4,247.7 387.8,256.3 392.8,273.4 400.7,288.3 406.4,292.5 412.4,292.6 417.3,294.5 429.1,302.1 442.7,307.1 449.2,308.6 455.0,305.4 459.8,297.7 472.3,270.6 481.2,254.2 497.8,229.3 509.1,216.5 511.4,210.1ZM360.1,269.1 354.8,273.4 354.1,279.8 356.6,286.2 367.6,297.6 388.7,314.5 396.4,315.1 400.4,310.1 401.3,303.6 399.1,296.0 395.0,289.3 375.5,272.0 368.0,269.1ZM347.3,273.2 336.2,276.2 327.0,280.4 318.4,286.2 309.7,296.7 301.2,311.6 300.6,323.9 308.1,330.8 316.1,335.5 326.3,338.2 334.4,333.7 341.7,322.0 347.4,310.0 351.6,297.5 353.7,286.6 353.5,277.1ZM358.3,298.2 351.4,301.9 348.2,311.1 349.0,320.3 353.5,329.3 361.1,336.1 371.4,340.5 380.7,340.5 388.3,336.0 391.2,327.6 388.3,318.9 383.1,311.4 375.7,305.5 367.9,301.2ZM590.5,172.7 573.2,179.8 556.1,192.3 539.3,201.6 522.1,208.0 508.9,220.0 500.0,237.4 488.1,267.3 481.6,277.4 472.9,284.6 470.0,293.9 473.7,304.5 479.0,313.1 486.2,320.8 494.8,324.2 503.5,322.8 510.4,324.4 516.6,328.8 521.3,335.5 527.5,355.5 532.7,385.1 536.0,392.1 540.7,396.8 541.1,401.4 537.0,408.3 535.2,416.6 537.8,433.6 551.2,464.1 555.1,468.4 566.7,475.7 570.0,476.3 573.2,473.2 583.1,442.8 586.6,437.8 601.9,428.8 607.3,423.7 612.3,417.2 617.8,413.1 624.5,410.9 630.8,407.1 640.5,397.2 644.3,391.7 646.1,383.2 646.2,372.5 648.1,364.9 652.4,358.8 654.2,350.8 653.4,341.1 654.2,331.6 656.8,321.0 657.6,307.7 656.8,292.0 658.1,277.6 661.4,264.2 667.2,249.6 675.9,233.0 674.5,223.4 663.5,222.8 655.9,217.3 649.2,205.3 638.9,192.1 624.8,177.6 608.5,171.0ZM412.1,312.2 405.8,315.4 402.4,321.8 402.4,329.1 405.4,335.2 411.7,340.3 419.5,343.0 428.1,343.7 435.9,343.0 443.6,340.7 449.3,335.4 452.3,327.8 452.3,321.4 449.0,316.2 443.8,312.8 436.1,310.4 428.1,309.7 419.4,310.4ZM104.1,375.0 99.6,377.5 97.8,380.5 97.7,383.1 99.8,386.4 103.2,388.2 108.2,388.8 112.5,387.6 116.2,384.5 116.9,381.4 114.7,377.4 108.9,375.0ZM668.4,425.7 662.7,422.9 650.9,427.3 648.8,427.1 644.4,424.4 638.6,425.9 634.7,430.8 634.5,434.9 635.8,436.8 636.4,441.4 639.9,443.5 639.3,446.2 641.2,449.3 646.6,451.5 656.1,452.7 661.7,451.0 671.2,444.6 674.3,440.7 675.0,436.0ZM16.2,481.4 20.3,478.6 25.9,470.1 29.0,467.2 48.9,460.5 46.3,466.0 36.7,475.7 28.6,485.8 23.7,496.0 22.4,505.1 23.5,521.3 25.0,527.4 28.4,529.3 35.1,523.1 46.8,505.4 48.6,500.9 48.7,496.0 47.3,490.5 50.0,489.2 51.3,485.6 51.4,479.9 53.4,476.9 57.8,475.4 73.4,475.6 83.9,466.0 103.3,455.9 104.3,449.8 100.9,442.6 106.1,440.0 110.1,432.3 111.7,431.9 127.9,441.1 132.3,441.2 133.6,440.2 134.9,436.0 140.9,431.3 141.4,426.5 137.3,422.1 132.9,420.0 127.9,419.5 123.4,417.0 103.4,398.9 98.6,396.4 91.6,394.3 84.9,395.4 78.3,399.1 76.7,398.8 75.6,394.4 70.6,392.3 58.3,395.0 40.6,395.0 39.0,394.6 34.7,389.4 28.3,384.0 21.1,381.4 14.3,381.9 10.1,380.6 7.0,377.2 7.0,481.3 10.6,482.0ZM191.8,495.8 196.4,497.4 200.7,495.4 202.9,492.0 202.2,487.6 198.3,486.4 192.9,488.4 190.7,492.1ZM270.8,523.9 272.9,523.2 274.0,520.4 273.1,514.4 270.7,510.6 266.5,510.1 265.1,511.3 264.5,514.7 267.5,521.5ZM293.0,343.6 287.9,348.9 285.7,354.8 285.7,362.3 288.0,369.9 297.2,383.5 303.9,389.8 310.1,391.2 316.0,388.5 316.8,392.1 321.7,399.9 332.3,406.0 347.2,411.0 344.0,412.2 337.9,412.2 333.5,410.8 325.9,404.9 308.0,395.5 291.5,390.2 286.0,387.6 279.8,387.7 253.7,400.1 249.5,399.7 243.1,396.9 234.3,391.7 212.2,387.1 190.0,379.3 181.8,380.3 170.2,389.3 153.3,405.6 148.7,414.9 145.9,426.9 146.0,435.8 152.3,442.3 163.5,444.4 169.4,443.8 169.1,446.5 167.7,448.7 162.3,450.9 156.8,451.2 154.5,453.6 152.3,461.4 152.5,465.7 155.8,472.9 158.7,475.9 164.9,477.7 166.3,479.1 167.3,482.8 170.4,485.3 179.9,486.0 177.9,491.3 174.4,496.0 158.5,507.5 157.8,509.9 159.3,510.8 165.5,509.1 178.0,503.1 192.4,487.9 201.6,474.4 201.2,478.3 203.4,481.8 207.2,481.4 210.1,480.0 219.0,472.4 221.4,472.2 228.1,475.5 239.6,478.1 243.2,479.6 252.2,486.6 260.0,488.4 262.3,489.9 268.7,502.2 275.2,511.1 284.8,528.3 287.1,531.0 281.2,529.1 279.8,530.6 280.2,533.2 294.2,544.2 293.7,546.1 295.6,556.3 294.7,579.6 296.0,584.9 306.7,605.2 309.8,608.1 315.9,611.0 318.2,613.9 329.1,635.5 337.5,646.0 343.9,652.0 346.2,651.3 345.5,648.6 331.3,626.9 329.8,622.9 329.9,619.8 332.1,620.9 333.9,623.3 337.4,630.8 355.2,650.1 358.9,657.1 359.0,661.1 360.8,664.4 364.3,667.2 371.3,671.3 382.2,676.0 390.2,678.0 396.5,677.8 408.8,685.0 419.0,687.7 424.7,693.1 427.0,697.5 433.2,701.1 437.3,704.9 444.6,707.5 446.1,706.6 446.4,703.8 449.0,702.7 452.4,705.5 454.3,709.1 454.3,717.8 451.1,724.7 447.0,728.2 444.5,732.3 443.3,737.6 445.0,741.6 441.4,748.4 441.6,751.4 447.7,758.5 459.6,782.0 465.7,787.4 477.5,794.8 478.8,798.0 478.6,813.4 473.9,849.5 469.0,870.3 465.6,901.9 461.1,918.6 461.1,931.4 462.5,937.5 466.9,946.0 476.7,956.8 484.9,960.8 490.3,960.6 495.3,958.7 497.7,955.9 489.7,949.1 487.9,946.4 485.8,936.4 486.5,932.3 494.1,918.6 494.5,914.2 492.8,910.5 493.4,907.5 498.6,899.5 499.9,894.6 499.3,887.3 500.3,886.2 504.5,885.5 507.2,883.2 508.4,878.9 510.0,877.3 516.9,876.0 521.4,873.7 523.8,870.3 524.5,865.7 523.9,861.2 522.1,857.2 529.9,859.2 533.1,858.7 538.8,854.3 550.6,837.7 554.2,829.8 554.5,825.9 558.2,820.4 578.1,810.5 580.9,807.5 586.1,795.0 588.2,778.7 598.7,765.4 600.7,761.3 601.1,757.6 600.0,751.3 597.3,748.8 593.5,747.5 583.1,741.4 571.5,740.6 563.9,735.7 552.9,732.2 549.0,728.6 545.2,718.5 542.8,715.2 537.0,712.1 524.0,709.9 519.0,706.2 509.3,696.0 506.4,695.0 488.0,694.5 482.1,691.6 479.4,691.2 477.2,692.0 474.7,690.2 472.5,690.2 462.2,695.5 457.2,702.6 452.0,699.2 448.9,698.9 442.0,700.7 439.7,699.9 435.7,695.4 434.9,692.5 436.0,682.1 434.5,679.0 428.0,676.4 418.8,676.0 418.4,675.0 423.1,659.2 422.5,656.7 420.0,656.3 413.0,657.7 410.4,659.8 408.7,664.6 405.5,666.9 397.0,666.9 392.2,664.4 390.2,662.0 387.0,651.4 389.3,635.4 391.0,632.6 399.5,627.4 413.2,628.7 417.9,624.4 421.0,624.3 426.4,625.9 433.5,626.6 436.2,630.2 437.6,636.0 441.6,643.0 444.1,643.9 445.9,642.6 446.8,636.5 443.7,626.2 443.3,621.2 444.3,619.0 451.0,611.6 460.9,604.1 461.9,601.1 461.8,594.9 466.7,586.0 467.8,582.1 469.7,580.5 480.1,576.3 481.0,574.2 479.6,572.2 480.1,568.9 492.5,561.0 495.7,560.2 494.1,561.6 492.9,564.6 494.4,567.2 497.4,566.9 513.9,558.3 515.8,556.0 515.0,552.5 513.1,553.0 510.4,555.9 508.7,555.3 509.0,552.5 506.7,551.0 499.3,550.5 497.8,548.3 500.4,544.4 500.5,541.2 498.2,539.0 493.8,538.9 486.7,542.1 491.5,537.4 497.9,535.1 497.9,536.7 499.5,538.6 504.2,541.0 507.0,541.2 509.2,539.5 509.3,537.4 503.9,534.6 513.1,534.6 521.9,531.2 515.8,545.5 517.2,548.7 526.5,549.6 532.1,552.9 535.5,553.5 538.9,552.0 540.6,549.0 540.9,544.5 539.2,539.8 536.7,537.0 531.0,534.3 531.6,527.1 529.7,524.6 530.0,522.3 528.5,519.2 514.5,503.8 501.2,474.1 497.2,473.4 491.6,481.3 486.6,482.7 484.8,481.5 483.4,478.0 482.5,471.1 479.0,466.0 479.7,466.0 476.2,464.9 467.2,458.8 458.7,456.9 453.8,457.0 452.0,462.1 453.1,470.8 451.0,482.7 456.1,491.2 456.4,496.0 453.6,501.7 449.3,505.3 447.4,508.7 449.1,519.1 448.7,522.6 447.2,525.3 441.9,519.3 440.3,508.9 437.3,504.9 428.4,502.7 415.5,494.7 410.7,493.1 406.6,493.1 403.4,490.8 398.7,481.3 399.9,472.0 408.9,451.9 411.7,448.8 415.1,447.9 418.9,444.6 423.2,438.0 420.6,445.0 421.9,449.3 426.5,453.3 431.7,454.0 437.8,451.3 442.1,452.3 446.6,449.3 448.2,444.2 446.9,439.5 436.6,430.5 433.3,428.7 439.5,424.2 442.4,418.3 443.6,404.5 442.3,397.7 440.3,395.9 444.8,397.0 451.3,396.2 454.4,398.5 459.4,405.6 464.2,410.4 468.3,412.7 469.0,414.7 465.5,429.9 462.4,433.2 455.8,435.3 452.4,438.3 452.0,439.8 453.3,443.4 457.9,445.0 463.9,444.3 467.9,445.1 480.5,454.7 492.3,461.7 496.8,462.7 498.8,460.3 497.9,456.7 495.6,453.6 497.8,451.8 500.2,447.4 501.9,441.4 502.0,435.4 505.9,433.0 509.7,427.2 509.4,421.6 500.1,412.2 485.3,389.7 475.3,378.5 468.3,371.9 452.2,359.3 447.1,353.9 440.5,350.6 432.9,349.8 423.8,350.3 417.8,351.7 412.2,358.9 412.1,368.5 413.5,376.9 416.2,385.4 420.8,391.4 426.3,394.1 431.9,395.5 426.8,400.9 425.0,408.2 422.3,413.1 416.2,401.6 415.5,394.1 411.3,385.7 410.0,378.1 411.4,369.9 411.4,361.0 409.9,352.3 405.4,347.7 397.1,349.9 392.7,358.7 390.4,371.4 388.2,363.9 382.9,356.4 375.5,351.9 366.9,349.0 356.6,347.5 345.8,348.2 334.1,351.2 326.2,357.2 321.9,350.6 314.2,345.2 307.1,342.4 299.8,341.6ZM390.4,392.8 391.2,401.1 390.5,406.1 389.0,408.7 375.0,411.7 369.6,411.1 363.9,408.6 376.0,404.3 384.7,400.0ZM510.4,556.1 510.3,556.0 510.5,556.0ZM298.6,540.8 289.9,532.8 297.0,538.0ZM455.7,663.4 463.9,663.3 466.2,662.6 466.8,661.2 448.0,651.2 443.0,650.0 434.6,651.7 431.1,654.2 431.4,655.6 433.1,656.5 437.7,655.6 445.6,657.0ZM187.1,664.9 188.7,666.4 190.5,666.0 191.9,664.0 191.3,662.2 189.0,661.0 187.3,661.4ZM9.2,752.7 12.7,748.7 11.3,745.7 7.0,746.3 7.0,753.7ZM96.2,795.6 100.9,796.0 102.5,794.5 102.2,792.1 100.0,791.0 97.1,791.5 95.5,793.1ZM50.3,802.6 51.2,804.9 56.1,809.0 60.5,811.1 62.1,810.4 61.9,808.2 54.0,802.2 51.6,801.4ZM11.9,849.5 15.0,838.4 15.6,826.5 14.0,821.4 7.0,812.8 7.0,860.2 9.3,853.6ZM72.3,892.7 61.0,903.3 59.0,907.8 60.7,911.2 66.7,913.6 69.7,913.6 75.1,909.9 77.7,903.1 83.9,896.4 87.7,887.9 89.0,888.8 91.8,888.6 94.6,886.1 100.7,876.7 102.0,872.8 101.6,869.6 91.4,864.5 83.4,856.9 80.5,856.5 80.0,858.5 85.9,868.9 85.3,873.8 83.8,876.8 84.5,879.4 87.3,882.6 86.8,885.3 83.1,882.2 79.7,882.1ZM510.2,942.1 516.4,943.7 520.0,942.7 523.0,939.8 523.1,936.5 519.2,934.4 511.4,935.8 508.6,938.6ZM926.4,223.9 915.1,224.2 878.7,240.8 876.9,242.7 875.0,248.3 875.3,251.6 883.8,259.4 895.0,261.9 908.3,259.8 920.3,254.4 931.8,245.0 935.2,235.7 934.4,232.3 928.9,225.2ZM805.7,235.3 796.0,235.2 787.3,239.6 782.5,246.7 782.5,256.7 785.7,263.5 792.0,268.2 800.3,268.3 809.0,263.9 814.9,256.6 816.2,246.7 813.1,239.9ZM1067.5,236.4 1058.3,226.4 1056.0,226.4 1049.7,229.0 1048.1,230.9 1045.9,238.2 1047.5,248.0 1046.1,255.5 1040.8,265.8 1042.5,273.9 1050.1,277.6 1053.0,281.5 1055.3,290.8 1060.7,294.9 1063.1,295.5 1071.5,292.7 1073.3,291.2 1078.1,283.6 1080.0,271.3 1076.2,255.2ZM765.1,251.8 758.5,257.3 754.0,266.2 754.0,277.2 762.4,298.3 770.9,313.8 775.5,320.0 782.2,321.7 788.6,318.5 793.3,312.3 796.2,303.5 796.2,294.8 787.8,269.6 784.3,261.3 779.9,253.9 773.0,250.3ZM954.5,318.3 955.5,312.8 954.8,310.4 948.3,306.1 945.9,305.6 936.6,307.6 925.9,313.8 916.9,321.9 909.4,332.5 905.0,341.6 900.9,356.4 891.8,373.7 891.2,380.1 894.2,384.9 898.3,387.8 907.5,390.6 913.1,391.2 915.8,389.8 917.7,384.9 915.1,379.2 915.1,374.3 920.7,358.2 924.8,349.5 930.7,341.2ZM707.6,483.0 702.3,483.1 699.1,485.8 697.2,490.7 697.4,495.6 699.7,499.5 700.6,505.9 696.7,503.4 691.7,503.5 687.9,505.2 684.8,508.4 682.8,512.5 683.0,524.8 685.8,528.0 690.2,527.9 697.2,525.6 699.6,522.6 701.9,512.4 701.6,507.8 702.9,509.2 705.9,509.4 706.9,510.6 706.6,516.2 700.8,523.3 702.3,526.5 705.1,527.5 700.0,532.2 701.4,535.1 722.1,530.9 724.1,529.0 725.9,522.2 724.7,518.8 720.8,516.3 714.3,501.8 713.4,499.0 712.8,488.1 710.7,484.7ZM754.8,489.6 747.2,493.0 745.6,496.0 747.0,512.5 735.3,516.8 729.2,526.0 724.7,528.7 722.1,533.9 720.1,535.5 716.6,536.6 713.1,535.6 711.9,537.5 711.9,540.5 707.1,540.3 702.0,542.6 702.1,545.4 708.0,548.9 712.7,554.1 713.8,557.2 713.3,563.5 711.4,566.6 693.8,565.4 690.3,566.0 687.9,568.0 686.9,571.8 687.4,581.1 686.2,586.0 687.1,595.0 689.4,597.0 694.2,596.8 699.5,600.7 713.7,596.9 719.2,590.4 719.4,586.0 722.7,580.5 728.7,576.8 730.8,574.1 731.7,569.6 741.0,569.3 748.1,564.8 752.0,566.9 757.0,573.8 771.1,585.1 771.6,590.3 769.5,589.3 763.6,589.9 760.1,592.4 761.9,595.6 769.6,598.4 772.4,596.8 773.4,592.9 777.1,589.4 777.3,582.9 781.3,584.4 782.8,582.5 776.3,576.0 770.3,572.4 765.4,565.7 763.2,564.0 762.1,560.2 762.8,559.2 766.0,558.7 772.8,566.8 782.9,573.8 784.2,575.6 785.6,583.8 789.3,589.7 792.1,597.3 793.8,598.7 795.7,599.2 798.2,598.4 798.5,594.2 800.7,592.0 800.9,589.9 797.8,583.0 802.5,580.8 809.2,581.0 807.6,583.1 809.1,591.6 811.0,595.1 813.5,597.5 828.0,600.4 839.8,598.5 840.4,599.5 839.3,606.6 835.8,616.0 833.0,618.9 829.3,620.0 825.7,618.3 817.8,620.1 806.5,617.4 796.8,613.4 792.3,612.9 788.6,614.5 786.8,616.8 786.4,619.7 785.0,621.1 778.9,621.2 775.7,619.7 771.6,615.6 768.4,613.9 760.7,611.7 755.3,608.7 757.0,597.7 756.4,595.2 754.0,594.3 731.6,595.9 712.5,602.2 701.8,600.9 697.8,602.1 695.8,606.1 688.2,613.5 683.0,627.4 672.5,636.4 662.4,652.9 660.8,660.2 662.7,665.8 662.7,671.4 659.2,682.2 662.5,690.4 670.0,697.9 675.1,705.4 689.3,716.2 692.0,717.3 695.6,717.2 703.7,715.5 714.0,715.2 726.4,711.6 732.5,711.3 741.2,717.0 747.3,717.6 750.6,719.6 751.2,725.1 749.3,733.7 750.1,737.3 758.9,749.0 764.5,768.1 764.3,771.2 759.2,784.4 758.9,792.8 766.7,812.3 771.0,827.9 778.3,843.4 780.6,854.4 782.6,857.3 785.5,858.8 788.9,858.9 795.8,856.9 807.3,855.5 811.4,854.2 818.4,849.2 827.5,837.7 830.9,829.8 832.0,823.6 838.4,818.2 840.5,814.7 839.3,802.9 840.6,799.7 853.8,789.6 856.6,785.8 858.0,781.7 857.3,773.0 852.5,755.8 852.5,752.6 855.1,746.0 858.8,739.8 881.4,717.4 888.7,706.0 893.7,695.3 893.9,692.1 891.6,690.9 872.6,694.6 869.6,694.3 867.3,692.6 865.3,687.7 857.1,681.1 848.6,669.3 845.9,658.9 833.1,632.1 835.4,633.2 837.8,629.6 848.3,648.2 853.3,659.7 861.7,673.2 866.0,687.1 868.3,689.1 875.0,687.8 890.4,681.4 911.6,669.8 916.9,665.2 922.4,655.4 922.2,651.8 913.6,646.1 910.5,640.8 907.9,641.1 903.0,645.9 900.8,646.1 900.5,646.0 896.2,644.6 885.3,630.5 884.1,627.2 884.9,624.7 887.9,624.7 889.5,625.9 895.9,633.4 899.1,635.9 902.8,637.9 911.5,638.4 915.3,642.3 922.4,643.6 937.8,643.9 945.9,645.2 953.3,650.9 956.2,652.0 954.3,653.3 954.9,655.7 958.6,658.9 962.1,659.8 964.8,658.6 965.6,659.3 966.6,669.8 968.4,676.0 977.5,697.3 981.4,703.6 983.3,704.8 987.8,700.9 990.8,695.9 993.2,680.7 995.0,677.8 1006.9,667.2 1012.9,663.5 1017.4,658.1 1030.2,654.7 1037.9,666.0 1039.5,670.3 1039.8,674.8 1041.5,677.2 1049.9,676.7 1051.2,678.1 1053.7,690.5 1053.5,703.6 1058.4,710.3 1061.4,718.6 1065.7,724.5 1054.0,715.1 1049.5,712.6 1045.2,711.9 1043.1,713.8 1044.1,718.9 1068.3,748.0 1075.4,752.7 1078.7,753.0 1080.8,749.8 1081.2,745.3 1080.0,741.6 1075.2,736.4 1070.8,729.4 1065.9,724.7 1071.5,728.2 1073.9,727.7 1071.0,714.3 1058.8,700.7 1058.4,698.3 1060.2,688.1 1061.7,686.8 1062.2,688.3 1070.1,695.5 1074.8,698.0 1076.2,701.8 1078.0,702.4 1080.9,700.9 1083.6,697.4 1091.1,691.8 1091.8,688.7 1090.7,681.7 1081.2,667.8 1080.9,664.9 1082.3,662.5 1087.3,658.2 1089.8,657.5 1091.9,658.1 1093.0,660.8 1094.6,660.9 1099.5,657.4 1116.2,651.1 1122.8,646.0 1132.3,633.6 1135.0,628.1 1134.0,621.6 1134.4,618.9 1133.8,616.0 1128.1,605.9 1128.2,602.8 1135.7,596.4 1135.7,594.2 1131.9,592.3 1125.8,593.3 1123.9,592.7 1122.2,589.2 1132.1,583.5 1136.5,582.6 1142.7,584.7 1144.2,586.0 1144.0,590.4 1145.4,593.5 1149.5,597.4 1148.9,605.9 1150.9,607.7 1154.1,606.8 1158.9,604.0 1160.3,600.5 1160.3,595.9 1158.6,591.6 1155.6,587.7 1154.8,585.5 1155.4,584.6 1160.1,580.5 1168.0,570.6 1173.9,570.3 1178.1,568.3 1189.0,556.0 1196.4,545.3 1198.2,539.6 1199.9,525.6 1200.5,544.7 1201.9,553.9 1205.5,556.0 1208.6,552.7 1209.3,547.4 1208.5,536.4 1209.4,526.0 1207.3,515.9 1205.4,511.7 1203.7,510.6 1201.9,511.2 1200.3,513.5 1200.1,516.6 1196.2,512.0 1192.5,510.4 1189.0,511.0 1186.1,510.2 1183.7,508.5 1184.3,505.2 1191.6,496.0 1200.6,486.2 1205.8,482.7 1223.1,480.3 1236.5,482.0 1242.2,481.4 1246.4,478.6 1252.0,470.1 1255.0,467.2 1274.9,460.5 1272.3,466.0 1262.7,475.7 1254.6,485.8 1249.7,496.0 1248.4,505.1 1249.5,521.3 1251.1,527.4 1254.6,529.2 1261.2,523.1 1272.8,505.4 1274.6,500.9 1274.7,496.0 1273.4,490.5 1276.0,489.2 1277.3,485.6 1277.4,479.9 1279.4,476.9 1283.8,475.4 1299.4,475.6 1309.9,466.0 1329.3,455.9 1330.4,449.8 1326.9,442.6 1332.1,440.0 1336.2,432.3 1337.7,431.9 1353.9,441.1 1358.3,441.2 1359.6,440.2 1361.0,436.0 1366.8,431.5 1367.6,427.0 1363.5,422.2 1358.9,420.0 1353.9,419.5 1349.5,417.0 1329.5,398.9 1324.7,396.4 1317.7,394.3 1310.9,395.4 1304.3,399.1 1302.7,398.8 1301.4,394.3 1296.9,392.3 1284.3,395.0 1265.0,394.6 1260.7,389.4 1254.1,383.9 1247.1,381.4 1240.3,381.9 1236.1,380.6 1227.7,373.2 1220.6,369.3 1203.9,362.9 1196.8,363.1 1186.5,374.0 1181.8,375.8 1174.6,376.0 1169.2,378.0 1165.6,381.7 1163.3,382.6 1161.6,382.0 1160.4,378.8 1160.4,370.6 1157.7,363.3 1151.7,356.4 1144.4,354.7 1137.3,357.7 1131.6,358.5 1103.8,350.3 1100.2,347.9 1097.5,344.5 1098.6,339.4 1104.5,330.8 1106.1,322.2 1103.0,316.5 1097.8,313.0 1091.0,311.5 1086.5,308.9 1080.1,300.6 1075.5,296.8 1070.1,298.4 1053.9,315.4 1048.6,318.7 1035.1,322.2 1028.1,325.1 1013.9,332.9 1010.7,337.6 1012.1,341.3 1011.0,343.8 1006.4,347.7 994.3,353.4 992.4,360.3 994.9,371.0 986.9,368.7 981.8,369.6 976.9,366.4 974.7,366.8 971.5,370.1 969.3,378.8 968.4,388.3 968.8,398.1 968.2,388.1 968.8,370.0 967.8,363.8 964.7,359.7 960.0,358.8 954.8,361.0 951.8,365.2 950.7,371.4 946.0,382.0 944.6,387.9 945.0,394.9 947.1,400.0 950.5,402.9 951.2,406.3 945.7,402.3 940.1,400.2 934.4,399.6 929.6,400.5 928.1,399.8 927.1,396.0 925.5,395.3 921.6,396.2 917.3,401.1 913.0,404.1 908.4,405.8 904.8,406.2 901.2,405.3 896.0,406.5 883.0,413.5 878.6,417.9 878.0,414.4 875.3,410.1 869.3,407.8 866.5,411.7 867.1,425.3 863.4,424.9 859.5,426.8 856.3,431.3 854.0,438.6 852.6,440.1 846.6,442.4 845.1,444.0 840.7,442.0 839.0,438.9 838.8,433.8 835.8,426.8 853.3,430.0 857.6,428.5 860.3,424.4 860.3,420.4 857.9,415.3 846.3,402.8 839.8,398.8 825.0,395.3 825.8,391.8 824.1,387.3 819.4,383.3 814.2,380.9 809.4,380.4 800.4,382.6 783.1,392.6 778.8,396.4 767.0,410.9 762.2,420.7 757.0,436.0 752.9,442.9 743.2,450.5 737.0,458.4 734.4,466.0 734.5,472.4 735.8,481.4 737.1,484.8 739.3,487.7 741.7,489.0 745.3,489.2 748.6,487.7 754.5,481.4 761.9,504.0 764.4,505.6 769.5,504.0 775.5,499.0 778.4,487.3 783.8,477.2 783.1,473.2 780.3,470.6 779.4,467.8 781.5,459.5 791.1,445.5 794.9,436.9 799.4,434.2 802.2,434.7 802.2,436.0 791.8,451.9 790.4,455.4 789.8,465.4 790.7,469.6 796.2,476.3 800.1,476.4 813.8,473.4 817.9,475.1 802.6,477.4 799.2,478.8 798.2,482.0 799.6,485.3 799.5,491.5 795.0,489.0 791.9,490.2 789.4,495.8 789.1,503.4 788.1,506.0 784.8,508.3 783.0,507.2 779.7,507.4 768.7,511.3 763.1,509.7 756.2,510.6 753.8,507.6 755.8,505.3 756.5,502.5 755.7,496.0 756.4,491.8ZM830.2,559.4 832.2,562.4 834.8,563.5 842.4,560.6 843.1,558.1 840.3,556.4 840.4,554.5 846.3,551.8 847.9,552.1 848.4,553.8 845.3,557.2 844.9,560.0 849.3,564.5 858.1,570.8 859.2,574.4 856.1,577.0 849.0,577.6 834.7,573.4 824.1,576.8 817.9,577.6 815.4,574.0 815.4,571.8 821.7,557.7 825.5,554.4 827.8,554.2 830.8,555.6 830.0,556.9ZM753.2,579.6 751.8,576.9 753.1,574.0 752.9,570.4 751.3,568.6 749.8,568.3 747.2,570.7 746.7,573.2 747.9,576.7 745.6,580.7 746.1,585.9 748.1,588.8 752.2,587.7 753.4,584.7ZM1134.9,643.0 1131.4,642.1 1129.4,643.1 1127.9,645.5 1126.7,650.6 1129.2,655.6 1131.6,655.5 1133.0,653.0 1135.4,646.0ZM1090.8,669.9 1094.0,669.7 1096.3,668.1 1097.8,665.2 1097.1,662.4 1094.2,661.1 1091.8,661.6 1089.2,663.6 1088.0,666.5 1088.8,668.7ZM1136.5,669.1 1134.2,666.5 1129.9,667.0 1128.0,669.9 1127.9,680.8 1130.0,685.1 1139.6,688.6 1141.5,688.5 1142.5,687.4 1141.9,684.6 1135.7,681.5 1135.0,680.2 1136.8,673.4ZM1127.5,693.0 1126.2,692.6 1124.6,693.7 1118.1,701.4 1118.3,703.2 1120.0,703.3 1125.1,698.7 1127.4,695.9ZM1136.0,700.3 1139.5,701.0 1134.6,705.9 1134.5,708.7 1138.2,708.3 1144.9,712.2 1147.3,712.4 1149.2,711.1 1150.9,704.6 1150.2,701.3 1148.3,698.7 1144.4,698.1 1140.5,700.2 1145.8,697.2 1147.2,694.5 1147.1,689.8 1144.6,688.6 1140.9,690.4 1135.6,689.9 1133.5,691.1 1133.2,695.1ZM994.3,699.7 991.4,698.1 989.4,700.6 990.7,710.9 993.4,712.9 996.5,711.8 998.7,707.5 997.9,704.4ZM1123.7,730.1 1124.0,727.0 1121.5,721.9 1123.4,713.9 1122.1,711.1 1118.3,708.3 1114.5,709.0 1101.3,721.3 1095.0,725.1 1091.2,725.6 1089.0,728.6 1089.4,732.4 1092.2,740.1 1095.4,743.0 1110.3,746.6 1114.3,745.2 1116.2,742.7 1117.8,736.5ZM1153.8,734.6 1156.5,734.8 1158.5,730.0 1156.8,725.7 1154.1,724.3 1152.0,726.4ZM1137.7,734.4 1130.3,734.2 1132.1,732.2 1135.4,731.2 1140.5,731.4 1143.8,730.3 1144.9,727.0 1143.0,726.3 1136.1,727.8 1132.2,727.1 1129.1,727.8 1127.2,730.0 1123.7,738.5 1123.2,741.9 1126.3,751.4 1128.5,751.5 1129.8,750.3 1131.2,744.4 1135.7,748.8 1138.0,748.1 1138.2,746.1 1135.3,739.8 1135.8,738.4 1138.4,736.4ZM1086.5,759.6 1105.8,762.5 1109.6,761.3 1110.3,762.7 1112.5,763.6 1120.0,764.1 1135.1,763.6 1138.1,762.8 1139.1,760.8 1138.4,759.6 1136.3,759.1 1110.1,759.4 1108.3,756.8 1104.8,755.0 1090.4,753.7 1084.3,751.7 1081.1,751.8 1077.7,753.8 1077.9,756.8ZM1152.7,762.2 1152.9,760.9 1151.8,760.1 1146.0,761.0 1139.9,765.2 1139.2,767.7 1140.5,768.6 1145.2,767.3ZM884.9,773.7 877.6,782.7 870.2,787.4 868.2,791.4 867.8,801.2 866.4,805.0 866.5,812.7 868.0,816.9 870.8,821.1 874.4,822.6 879.0,821.0 882.2,816.3 891.0,787.8 890.8,782.2 889.1,776.1 886.7,773.6ZM1544.4,286.2 1535.7,296.7 1527.2,311.6 1526.3,323.1 1534.3,330.9 1542.1,335.5 1551.5,338.5 1559.0,334.6 1559.0,277.7 1553.1,280.4ZM1228.5,337.8 1230.7,332.2 1228.8,328.6 1212.6,321.6 1201.1,318.6 1190.3,321.4 1184.3,328.8 1183.0,335.5 1183.8,338.1 1187.6,342.6 1197.3,352.3 1199.9,353.3 1207.1,351.9 1213.2,344.3 1218.8,340.7ZM1519.1,343.6 1514.1,348.5 1511.7,355.1 1511.8,362.7 1514.0,369.9 1518.3,377.0 1529.6,389.7 1536.1,391.2 1542.0,388.5 1542.8,392.1 1547.4,399.7 1559.0,406.3 1559.0,352.0 1552.2,357.2 1547.9,350.6 1540.3,345.2 1533.1,342.4 1525.8,341.6ZM1330.3,375.0 1325.8,377.4 1323.8,380.5 1323.7,383.1 1325.8,386.4 1329.3,388.2 1334.2,388.8 1338.5,387.6 1342.2,384.5 1342.9,381.4 1340.8,377.4 1335.1,375.1ZM1417.8,495.8 1422.5,497.4 1426.7,495.4 1428.9,492.0 1428.2,487.6 1424.3,486.4 1418.9,488.4 1416.7,492.1ZM1551.7,404.8 1533.7,395.4 1517.6,390.2 1512.0,387.6 1505.8,387.7 1479.7,400.1 1475.6,399.7 1460.6,391.8 1454.3,389.9 1438.2,387.1 1416.1,379.3 1408.4,380.1 1396.2,389.3 1379.2,405.8 1374.6,415.1 1371.9,427.1 1371.8,435.0 1375.3,439.9 1378.8,442.6 1389.5,444.4 1395.4,443.8 1395.1,446.5 1393.8,448.7 1388.4,450.9 1382.8,451.2 1380.6,453.3 1378.4,461.4 1378.5,466.0 1381.8,472.9 1384.2,475.6 1387.8,477.4 1390.9,477.7 1392.3,479.1 1393.3,482.8 1396.2,485.1 1405.9,486.0 1404.0,491.3 1401.2,495.1 1384.4,507.6 1383.8,509.5 1384.5,510.7 1395.4,507.6 1403.8,503.2 1407.8,499.8 1420.9,484.7 1427.6,474.4 1427.3,478.4 1428.7,481.3 1430.0,481.8 1436.1,480.0 1445.0,472.4 1447.4,472.2 1454.2,475.5 1465.6,478.1 1469.2,479.6 1478.2,486.6 1486.0,488.4 1488.3,489.9 1494.7,502.2 1501.2,511.1 1510.8,528.3 1513.2,531.0 1507.2,529.1 1505.8,530.6 1506.2,533.2 1520.2,544.2 1519.7,546.1 1521.6,556.3 1520.7,579.6 1522.0,584.8 1532.7,605.2 1535.8,608.1 1542.0,611.0 1544.2,613.9 1553.4,632.6 1559.0,640.6 1559.0,629.6 1555.8,622.9 1555.5,620.2 1559.0,622.0 1559.0,410.3ZM1524.6,540.8 1516.0,532.8 1523.0,538.0ZM1496.8,523.9 1499.0,523.2 1500.0,520.4 1499.1,514.4 1496.7,510.6 1492.5,510.1 1491.1,511.3 1490.5,514.7 1493.5,521.5ZM1209.4,574.4 1214.2,570.6 1214.9,566.2 1204.6,557.9 1200.8,558.8 1198.4,566.4 1196.2,567.7 1194.6,570.6 1194.4,575.6 1197.2,577.1 1200.5,574.7 1202.3,574.3 1205.5,575.4ZM1200.0,577.4 1197.4,577.8 1193.6,587.8 1190.9,592.2 1186.2,594.0 1180.1,600.5 1169.8,603.4 1166.9,605.3 1164.3,608.7 1162.2,609.2 1160.7,610.7 1160.9,619.0 1162.1,621.2 1165.4,621.0 1168.5,616.1 1176.2,612.8 1178.5,608.7 1179.4,610.6 1181.6,611.2 1185.8,607.7 1194.3,605.9 1198.4,602.7 1202.8,588.2 1202.0,581.3ZM1168.4,609.5 1172.1,608.9 1168.9,610.3ZM1413.1,664.9 1414.7,666.4 1416.6,666.0 1417.9,664.0 1417.3,662.2 1415.0,661.0 1413.3,661.4ZM1154.4,744.2 1163.0,745.3 1165.1,743.3 1163.0,741.2 1159.7,740.8 1154.5,742.0ZM1229.2,754.6 1232.5,754.0 1237.5,750.9 1238.8,748.4 1237.9,746.0 1234.6,745.7 1224.6,749.4 1224.1,752.3ZM1171.6,732.9 1166.1,733.7 1164.4,734.6 1164.1,736.3 1167.2,738.9 1170.5,739.9 1169.2,740.5 1168.4,742.5 1170.1,745.3 1180.2,747.8 1186.8,750.7 1189.0,752.6 1190.2,754.8 1188.9,759.2 1189.8,760.8 1192.8,760.4 1200.7,763.8 1204.3,763.7 1210.8,759.4 1215.3,761.3 1221.1,766.0 1227.6,768.1 1231.0,767.7 1230.5,765.6 1224.8,760.7 1222.2,752.8 1216.4,749.6 1213.2,745.7 1205.8,742.1 1189.1,737.4 1185.3,738.4 1181.8,741.1 1179.5,741.7 1177.7,740.6 1176.3,735.9 1174.7,733.9ZM1322.3,795.6 1326.9,796.0 1328.5,794.5 1328.2,792.1 1326.1,791.0 1323.1,791.5 1321.5,793.1ZM1276.3,802.6 1277.2,804.9 1282.1,809.0 1286.5,811.1 1288.1,810.4 1287.9,808.2 1280.1,802.2 1277.6,801.4ZM1116.9,859.3 1121.5,859.3 1125.9,857.2 1136.8,855.8 1142.1,854.0 1151.0,848.5 1164.6,846.1 1168.6,847.3 1172.6,849.8 1178.8,857.4 1182.6,857.6 1185.9,854.0 1186.9,854.1 1189.4,861.0 1192.0,863.2 1195.8,870.6 1199.5,873.8 1205.0,875.7 1209.1,875.9 1211.7,874.6 1213.6,874.9 1216.2,876.9 1219.2,876.4 1225.2,871.5 1228.8,870.0 1231.6,865.7 1234.4,856.0 1239.8,844.4 1241.7,832.5 1241.6,826.3 1240.0,821.4 1230.5,810.1 1226.3,802.8 1217.8,795.2 1215.2,785.1 1209.7,779.3 1205.7,769.6 1202.9,769.9 1198.4,789.9 1196.7,791.5 1191.1,789.8 1182.5,783.4 1182.2,780.8 1183.8,776.2 1183.1,773.0 1172.5,771.0 1168.7,771.3 1165.8,772.9 1161.2,780.2 1159.0,782.0 1151.1,779.9 1147.6,781.2 1136.8,790.6 1134.1,793.9 1132.7,797.4 1130.3,799.4 1117.6,802.6 1105.6,808.1 1106.5,819.3 1105.3,822.2 1105.5,826.2 1110.6,842.3 1111.0,847.6 1110.2,852.9 1112.1,857.0ZM1298.3,892.7 1287.1,903.3 1285.0,907.8 1286.7,911.2 1292.7,913.6 1295.7,913.6 1301.1,909.9 1303.7,903.1 1309.9,896.4 1313.7,887.9 1315.0,888.8 1317.8,888.6 1320.6,886.1 1326.7,876.7 1328.0,872.8 1327.7,869.6 1317.4,864.5 1309.4,856.9 1306.5,856.5 1306.0,858.5 1311.9,868.9 1311.3,873.8 1309.9,876.8 1310.5,879.4 1313.3,882.6 1312.9,885.3 1309.1,882.2 1305.7,882.1ZM1223.5,883.6 1213.1,882.7 1210.6,885.0 1212.5,893.4 1214.0,896.5 1216.3,898.5 1219.6,898.5 1224.3,894.2 1225.8,886.5Z" fill="#d4e6ff" filter="url(#b1)"/>
<path d="M402.4,287.1 407.2,290.6 412.8,290.6 418.3,292.6 430.1,300.3 443.3,305.1 448.9,306.5 453.8,303.8 479.4,253.1 496.1,228.1 507.2,215.6 509.3,210.0 507.9,204.4 504.4,198.2 498.9,191.2 491.2,186.4 481.5,183.6 472.5,182.9 464.2,184.3 457.2,183.6 451.7,180.8 446.1,182.9 440.6,189.9 432.2,196.8 407.2,213.5 403.1,218.3 400.3,223.9 396.8,227.4 392.6,228.8 389.9,232.9 388.5,239.9 388.5,247.5 391.9,264.2 394.7,272.5ZM393.3,290.6 374.6,273.9 367.6,271.1 360.7,271.1 356.9,273.9 356.2,279.4 358.3,285.0 363.1,290.6 389.9,312.8 395.1,313.5 398.5,309.3 399.2,303.8 397.2,296.8ZM328.1,282.2 319.7,287.8 311.4,297.8 303.1,312.4 302.4,322.8 309.3,329.1 316.9,333.6 325.3,336.4 332.9,332.2 339.9,321.1 345.4,309.3 349.6,296.8 351.7,286.4 351.7,278.1 346.8,275.3 337.1,278.1ZM366.9,303.1 358.6,300.3 353.1,303.1 350.3,311.4 351.0,319.7 355.1,328.1 362.1,334.3 371.8,338.5 380.1,338.5 387.1,334.3 389.2,328.1 386.4,319.7 381.5,312.8 374.6,307.2ZM538.9,408.9 537.2,416.8 539.8,432.9 552.6,462.9 556.0,467.1 567.5,474.4 570.0,474.7 573.8,467.1 581.5,442.0 585.3,436.5 600.7,427.1 605.8,422.3 610.9,415.7 616.8,411.3 623.6,409.0 629.6,405.5 639.0,395.9 642.4,390.9 644.1,383.0 644.1,372.3 646.2,364.0 650.5,358.2 652.2,350.5 651.3,341.1 652.2,331.2 654.7,320.8 655.6,307.8 654.7,292.0 656.0,277.3 659.4,263.5 665.4,248.7 673.9,232.8 673.0,224.8 662.8,224.8 654.3,218.7 647.5,206.5 637.3,193.3 623.6,179.4 608.3,173.1 591.3,174.6 574.3,181.6 557.2,194.1 540.2,203.5 523.2,209.8 510.4,221.4 501.9,238.2 490.0,268.2 483.2,278.8 474.6,285.7 472.1,293.9 475.5,303.5 480.6,311.9 487.4,319.2 495.1,322.1 503.6,320.7 511.3,322.4 518.1,327.3 523.2,334.6 529.6,355.0 534.7,384.4 537.7,390.9 542.8,395.9 543.2,401.9ZM442.6,314.5 435.7,312.4 428.1,311.7 419.7,312.4 412.8,314.2 407.2,316.9 404.4,321.8 404.4,328.8 407.2,334.3 412.8,338.5 419.7,340.9 428.1,341.6 435.7,340.9 442.6,338.8 447.5,334.3 450.3,327.4 450.3,321.8 447.5,317.6ZM101.0,384.7 107.8,386.7 111.6,385.7 114.8,382.8 113.8,379.5 108.3,377.0 104.2,377.1 101.3,378.9 99.7,382.4ZM432.1,393.4 444.8,394.9 451.7,393.9 455.9,397.0 461.0,404.2 465.7,409.0 470.0,411.3 471.2,414.7 468.3,424.5 467.4,430.9 463.6,435.0 456.8,437.1 453.8,439.5 454.6,442.3 458.0,443.3 464.0,442.5 468.7,443.4 487.0,456.8 496.4,461.0 497.2,459.5 493.8,454.9 493.8,452.7 496.4,450.8 498.5,446.9 500.2,441.0 500.2,436.5 498.5,433.2 498.9,432.2 501.5,433.4 504.4,431.5 507.9,426.5 507.4,422.2 498.5,413.5 483.6,390.9 479.3,385.8 467.0,373.5 455.9,365.2 445.7,355.5 439.7,352.5 432.9,351.9 423.9,352.4 418.3,353.8 414.2,359.6 414.2,368.2 415.5,376.5 418.0,384.4 421.9,389.6ZM431.7,452.2 435.1,449.9 437.9,449.4 442.1,450.4 444.8,448.7 446.5,443.9 445.2,440.2 435.4,432.2 432.0,430.3 429.0,430.3 426.2,433.1 422.3,444.6 423.3,448.2 427.1,451.6ZM28.1,465.8 48.5,458.6 51.1,459.2 50.2,462.8 48.1,466.4 37.9,476.7 29.8,486.8 24.6,498.0 23.7,505.2 24.9,521.2 26.0,526.7 28.2,528.1 36.6,518.9 45.5,504.8 47.2,500.9 47.2,496.6 45.5,491.9 46.0,489.2 48.5,488.6 49.8,485.3 49.8,479.4 52.4,475.6 57.5,473.9 72.8,474.2 88.1,461.2 102.2,454.6 102.6,450.1 98.3,440.1 100.0,440.9 102.2,440.5 104.7,438.9 108.5,430.7 112.0,429.7 128.6,439.5 132.0,439.5 132.8,435.8 135.2,432.8 139.1,430.3 139.5,427.3 136.5,423.9 132.4,422.0 127.3,421.6 122.2,418.7 112.4,409.0 102.2,400.5 97.9,398.3 91.9,396.4 85.6,397.3 78.7,401.2 74.9,400.7 74.1,395.9 70.7,394.4 64.7,396.4 58.3,397.1 40.4,397.1 37.5,396.4 36.6,394.4 27.2,385.8 20.9,383.5 14.0,384.0 8.9,382.4 7.0,380.3 7.0,479.7 10.6,480.4 15.7,479.9 19.1,477.6 24.7,469.2ZM193.6,495.5 196.2,496.1 199.5,494.3 201.3,491.9 201.1,488.7 198.3,487.9 194.0,489.4 192.2,492.0ZM270.9,522.5 272.0,522.1 272.7,520.0 271.8,514.8 269.9,511.8 266.8,511.4 265.7,514.0 267.0,517.9 268.7,520.8ZM498.9,536.0 500.2,537.6 504.6,539.8 506.9,539.9 508.2,538.6 506.1,536.6 501.7,535.2 499.5,535.1ZM532.6,551.7 535.6,552.3 538.1,551.1 539.7,548.1 539.7,544.7 538.2,540.5 536.1,538.0 529.9,535.0 530.4,527.3 528.6,525.8 523.7,530.3 516.9,546.2 518.3,548.0 526.8,548.4ZM499.5,552.4 500.4,553.9 504.7,555.6 506.9,555.4 508.2,553.8 506.2,552.1 502.1,551.3 500.0,551.5ZM304.4,387.8 310.0,389.2 317.3,384.7 318.7,391.2 322.8,398.2 329.1,402.4 337.1,405.8 346.8,408.6 352.8,408.6 350.3,409.4 348.6,412.6 344.4,414.2 337.6,414.2 332.5,412.6 324.8,406.7 306.9,397.3 290.7,392.2 285.6,389.6 280.5,389.6 254.1,402.2 249.0,401.7 242.2,398.8 233.7,393.7 211.6,389.1 189.6,381.4 182.8,382.1 177.0,386.3 154.9,406.9 150.6,415.6 147.9,427.3 147.9,435.0 153.4,440.9 163.6,442.7 169.9,441.7 171.2,443.2 170.9,447.1 169.0,450.0 165.6,451.9 157.4,452.9 156.1,454.4 154.1,461.7 154.3,465.7 157.2,472.1 159.4,474.5 165.6,476.2 167.7,478.3 168.6,481.9 171.1,483.9 181.3,484.4 181.5,487.0 176.3,496.2 159.3,508.6 159.1,509.5 172.8,504.4 180.9,498.8 193.7,483.7 200.1,473.7 205.3,469.4 203.4,472.8 202.7,477.9 203.8,480.3 209.4,478.6 218.4,470.9 221.8,470.6 228.6,474.0 240.1,476.6 243.9,478.3 252.9,485.2 260.5,486.8 263.5,488.9 269.9,501.5 282.7,520.6 285.8,527.7 288.2,530.4 294.8,534.5 299.6,539.5 299.9,541.6 298.2,542.8 288.3,533.0 284.0,530.8 281.0,530.7 281.2,532.5 283.0,534.5 292.1,541.7 295.7,543.4 294.9,545.9 296.7,556.3 295.8,579.6 297.0,584.4 307.5,604.6 310.3,607.2 316.6,610.3 319.0,613.3 329.9,635.0 339.1,646.5 342.2,649.8 344.3,651.3 345.5,650.9 330.5,627.3 328.5,619.8 329.8,618.8 332.7,620.2 338.1,630.2 355.9,649.6 359.7,657.0 359.7,660.6 361.4,663.8 364.8,666.5 375.0,672.2 386.5,676.7 396.7,677.0 409.1,684.3 419.3,686.9 425.4,692.6 427.6,696.9 433.8,700.5 437.6,704.2 444.5,706.7 445.4,706.3 445.7,703.3 447.4,701.9 449.3,701.9 453.0,705.0 455.1,709.0 455.1,717.9 451.7,725.2 447.6,728.7 445.3,732.6 444.1,737.5 445.9,741.4 442.2,748.6 442.4,751.2 448.3,758.0 460.3,781.5 466.1,786.8 478.1,794.2 479.7,797.8 479.4,813.5 474.8,849.7 469.1,875.9 466.6,902.2 462.3,918.8 462.4,931.2 465.9,942.0 477.6,955.7 485.3,959.4 489.8,959.3 496.3,956.2 488.6,950.0 486.6,946.9 484.5,936.5 485.3,931.9 493.0,918.2 493.4,914.4 491.7,910.7 492.4,907.0 497.6,899.2 498.7,894.5 498.1,887.0 499.8,885.1 504.0,884.6 506.6,882.4 507.4,878.4 509.6,876.3 513.0,876.1 520.5,873.1 522.8,869.9 523.5,865.7 521.3,855.8 530.0,858.2 533.0,857.7 538.1,853.7 549.8,837.2 552.0,833.3 555.1,822.4 557.7,819.8 577.7,809.7 580.2,807.0 585.3,794.8 587.5,778.4 598.1,764.9 600.0,761.1 600.3,757.6 599.2,751.5 596.9,749.5 593.2,748.3 582.8,742.1 571.3,741.4 568.3,740.2 563.6,736.4 552.6,732.9 548.3,729.0 544.5,718.8 542.3,715.8 536.8,712.9 523.6,710.7 518.5,706.8 508.7,696.6 506.1,695.8 487.8,695.3 481.9,692.4 479.5,692.0 477.3,692.8 475.6,692.5 474.4,690.9 472.5,691.0 462.7,696.1 457.6,703.4 455.9,703.6 451.9,700.0 449.0,699.7 441.9,701.5 439.3,700.6 435.0,695.8 434.1,692.6 435.1,682.1 433.9,679.5 427.8,677.2 418.4,677.0 417.5,675.0 422.3,659.1 421.9,657.3 413.4,658.4 411.1,660.2 409.4,665.1 405.7,667.7 396.7,667.7 391.6,665.1 389.5,662.5 386.7,655.2 386.4,647.3 388.4,635.1 390.4,632.0 393.8,629.3 399.3,626.5 412.9,627.9 417.6,623.6 421.0,623.4 426.5,625.0 434.0,625.8 437.1,629.9 440.4,640.0 442.3,642.4 444.0,643.0 445.2,642.1 445.9,636.6 442.8,626.5 442.4,621.0 443.5,618.5 450.4,610.9 460.1,603.6 460.9,601.0 460.9,594.6 465.5,586.1 466.8,581.6 469.1,579.6 479.3,575.5 479.9,574.2 478.3,570.7 479.2,568.3 480.7,566.6 491.9,560.0 497.6,558.8 497.9,559.8 495.0,562.2 494.0,564.3 494.8,566.2 497.1,565.9 504.4,561.4 513.4,557.4 514.7,555.7 514.7,553.7 510.4,557.3 502.7,555.4 500.4,554.2 496.5,548.6 499.3,543.9 499.3,541.3 497.6,540.1 490.4,541.3 480.2,549.0 480.6,548.0 490.8,536.4 494.7,534.4 498.9,533.6 516.4,532.6 526.0,526.9 528.2,525.0 528.6,522.6 525.3,517.0 513.4,504.5 508.3,494.6 500.6,475.5 498.1,474.7 495.5,479.4 492.5,482.6 489.1,484.2 486.1,484.2 483.6,482.6 481.9,478.4 481.0,471.6 478.9,467.6 475.5,466.6 466.6,460.5 462.3,459.4 455.1,458.3 453.8,462.3 454.6,470.8 454.2,476.7 452.5,480.1 452.5,482.6 455.9,487.0 457.6,490.8 458.0,494.8 457.2,498.8 448.7,509.2 450.5,519.1 448.9,526.2 447.0,526.9 442.3,522.6 440.6,519.8 439.0,509.3 436.4,505.9 427.8,504.0 415.1,496.2 410.4,494.6 406.1,494.6 402.3,491.9 398.9,486.5 397.2,481.6 397.2,477.2 398.4,471.5 404.0,457.6 407.4,450.9 410.8,447.2 414.2,446.4 417.6,443.4 425.3,429.4 427.8,427.4 431.2,427.4 434.6,425.8 438.0,422.8 440.3,418.0 441.5,411.2 441.5,404.7 440.3,398.5 437.2,396.1 432.1,397.6 428.7,401.9 424.8,413.6 422.3,415.8 419.7,413.5 417.2,406.6 414.0,402.0 413.5,394.7 409.3,386.4 407.9,378.1 409.3,369.7 409.3,361.4 407.9,353.1 404.4,349.6 398.9,351.0 394.7,359.3 391.9,374.6 391.2,387.0 393.3,401.2 392.5,406.9 390.4,410.4 387.0,411.8 375.0,413.8 369.1,413.1 355.4,408.6 366.2,405.8 383.6,398.2 388.5,391.9 389.9,383.6 389.2,374.6 386.4,364.9 381.5,357.9 374.6,353.8 366.2,351.0 356.5,349.6 346.1,350.3 335.0,353.1 325.1,361.5 324.6,358.6 320.4,352.0 313.5,347.2 306.5,344.4 299.6,343.7 294.0,345.4 289.9,349.6 287.8,355.1 287.8,362.1 289.9,369.0 294.0,376.0ZM455.8,662.5 463.7,662.5 466.0,661.4 447.6,652.0 442.9,650.8 434.9,652.5 431.9,654.5 433.3,655.7 437.7,654.8 445.9,656.2ZM187.9,664.5 188.9,665.6 190.1,665.3 191.0,663.8 190.6,662.6 187.8,662.1ZM11.0,750.2 12.0,748.4 11.2,746.5 7.0,747.2 7.0,752.8ZM96.6,794.9 100.5,795.3 101.7,794.3 101.5,792.6 99.9,791.8 97.6,792.2 96.3,793.2ZM51.2,802.7 51.9,804.3 56.5,808.2 61.4,810.0 61.3,808.8 56.9,805.3 53.4,802.9ZM13.3,821.9 7.0,814.1 7.0,857.0 11.1,849.1 14.1,838.2 14.7,826.6ZM80.9,857.6 86.9,868.7 86.3,874.2 84.9,876.5 85.3,878.7 87.6,880.5 88.7,887.4 91.6,887.4 99.7,876.4 101.0,870.5 90.8,865.3 82.9,857.8ZM75.6,890.4 64.1,901.3 60.1,907.3 61.1,910.2 67.0,912.5 69.5,912.5 74.2,909.3 78.2,900.2 82.9,895.8 84.7,892.6 86.7,887.4 85.6,885.0 82.7,883.1 80.2,883.0ZM510.9,941.0 516.5,942.4 519.4,941.6 521.9,939.2 522.0,937.1 519.1,935.7 511.9,937.0 509.8,938.9ZM894.8,259.8 908.1,257.7 919.5,252.4 930.0,243.9 933.2,234.5 927.5,226.7 925.9,226.0 915.7,226.1 879.2,242.9 876.9,249.1 877.5,251.1 885.0,257.6ZM784.4,255.8 787.2,262.1 792.8,266.2 799.7,266.2 808.1,262.1 812.9,255.8 814.3,247.5 811.5,241.2 804.6,237.1 796.9,237.1 788.6,241.2 784.4,247.5ZM1056.9,289.4 1062.9,293.4 1071.2,290.4 1076.1,283.0 1077.9,271.5 1074.4,256.3 1065.8,237.7 1058.5,228.9 1057.0,228.3 1049.9,231.9 1048.0,238.4 1049.7,248.0 1048.1,256.2 1042.9,265.6 1044.3,272.8 1051.4,275.8 1054.9,280.6ZM794.2,295.4 785.8,270.4 782.4,262.1 778.2,255.1 772.6,252.4 765.7,253.8 760.1,258.6 756.0,266.9 756.0,276.7 768.5,305.8 776.8,318.3 781.7,319.7 787.2,316.9 791.4,311.4 794.2,303.1ZM898.9,385.8 912.7,389.1 914.4,388.2 915.6,384.8 913.0,379.8 913.0,374.0 918.8,357.4 923.0,348.5 929.2,339.9 952.2,318.3 953.5,312.7 952.5,310.9 946.6,307.7 937.6,309.4 927.2,315.4 918.6,323.2 911.4,333.2 906.9,342.4 902.8,357.3 893.6,375.0 893.2,379.6 895.3,383.2ZM637.6,437.2 637.9,440.5 642.0,443.3 641.0,445.8 642.8,448.4 655.6,451.0 660.8,449.5 669.9,443.3 672.6,440.1 673.1,437.0 666.7,426.9 662.7,425.0 651.1,429.4 648.0,429.0 644.4,426.5 640.2,427.2 636.5,431.8 636.6,435.1 639.2,436.2ZM711.7,495.9 712.0,492.1 709.6,485.9 706.9,484.4 703.2,484.4 700.4,486.6 698.7,491.1 698.9,495.2 701.0,498.9 702.0,506.2 703.5,508.0 706.6,508.0 708.3,510.0 708.6,514.1 707.8,517.0 702.1,523.7 703.2,525.6 707.9,527.6 703.9,529.9 701.0,532.8 701.5,533.9 721.5,529.9 724.0,525.9 724.5,522.0 723.6,519.7 721.2,518.8 719.6,517.0 713.0,502.3ZM693.6,525.8 696.7,524.3 698.5,521.9 700.6,512.2 700.6,509.0 699.3,506.3 696.2,504.7 692.3,504.7 688.8,506.3 685.6,509.5 684.2,512.7 684.2,523.9 685.9,526.6ZM749.6,576.8 751.4,575.9 752.0,573.8 751.8,570.6 750.4,569.4 748.4,570.8 747.8,572.9 748.4,575.6ZM721.8,579.8 728.0,576.0 729.9,573.5 729.9,570.5 731.0,568.7 740.7,568.2 747.9,563.6 750.2,564.0 754.7,568.3 757.7,573.0 772.1,584.6 772.9,591.9 773.7,591.9 776.2,589.0 775.6,583.9 776.5,581.9 777.9,581.6 781.2,583.3 781.7,582.6 775.6,576.9 769.7,573.3 764.5,566.3 762.3,564.7 761.0,559.9 762.1,558.2 766.3,557.6 773.5,566.0 783.7,573.0 785.3,575.3 786.6,583.4 790.2,589.2 792.0,594.8 792.9,596.7 795.7,598.2 797.2,598.0 798.2,592.4 799.9,591.5 799.9,589.9 797.1,585.0 797.0,581.6 798.4,582.0 802.4,579.7 811.4,579.7 816.5,578.2 816.9,577.2 814.4,574.2 815.0,569.0 820.7,557.1 825.0,553.2 828.0,553.0 831.4,554.4 832.4,555.8 831.0,557.0 831.2,558.9 832.9,561.6 834.9,562.4 842.0,559.6 842.0,558.5 839.5,557.3 838.6,555.7 839.5,553.7 846.3,550.5 848.8,551.1 849.7,553.8 848.8,556.0 846.3,557.7 845.9,559.6 849.9,563.6 858.9,570.0 860.3,572.2 860.3,574.7 859.1,576.6 856.5,578.0 848.8,578.7 834.8,574.5 824.3,577.9 817.4,578.9 808.7,583.0 810.1,591.4 813.9,596.6 828.0,599.4 840.3,597.5 841.4,599.3 840.2,606.9 837.3,615.2 835.6,618.2 833.3,619.8 830.4,620.0 829.3,621.4 827.9,619.8 825.7,619.2 820.7,620.7 814.4,620.4 796.5,614.4 792.4,613.9 789.3,615.1 787.6,617.2 787.3,620.2 785.4,622.0 778.6,622.1 775.2,620.5 768.0,614.8 760.3,612.6 754.4,609.3 754.0,607.2 756.0,597.8 755.6,595.9 753.9,595.3 731.8,596.9 712.6,603.2 701.8,601.9 698.1,603.1 696.6,606.6 689.0,613.9 683.7,628.0 673.2,636.9 665.0,649.6 661.8,657.0 661.7,660.2 663.6,665.6 663.6,671.5 663.1,675.0 660.0,682.2 662.0,688.0 670.6,697.3 675.7,704.8 686.6,713.5 692.2,716.5 695.6,716.4 703.7,714.7 713.9,714.4 726.2,710.8 732.6,710.5 735.2,711.4 741.6,716.2 747.4,716.7 749.7,717.5 751.3,719.2 752.0,725.2 750.1,733.7 750.9,737.1 759.6,748.6 765.3,768.0 765.1,771.4 760.0,784.6 759.7,792.5 767.5,812.1 771.9,827.6 779.2,843.1 781.5,854.0 783.0,856.4 785.7,857.8 788.8,857.9 795.6,855.9 807.1,854.6 814.4,851.4 824.1,841.2 828.7,833.3 831.2,823.3 833.5,820.4 837.8,817.6 839.7,814.4 838.5,802.8 839.9,799.2 850.1,791.6 855.9,785.4 857.2,781.5 857.0,777.1 851.7,755.9 852.9,749.0 858.2,739.2 877.4,720.8 884.0,712.4 891.7,698.5 893.2,692.5 891.5,691.7 872.7,695.4 869.3,695.1 866.7,693.2 864.7,688.2 856.5,681.6 847.8,669.7 845.1,659.3 833.2,634.5 829.8,623.9 834.2,632.0 835.0,632.4 837.3,628.5 838.4,628.5 849.0,647.8 854.0,659.3 862.5,672.8 866.7,686.8 868.4,688.3 874.8,687.0 890.1,680.7 911.2,669.0 916.2,664.7 921.5,655.2 921.5,652.3 913.1,646.7 911.0,644.5 910.1,641.7 908.4,641.9 903.3,646.8 898.2,646.5 895.7,645.3 884.5,630.9 883.1,625.0 886.2,623.5 890.1,625.2 896.5,632.8 902.9,637.0 906.3,637.6 909.7,636.8 912.1,637.6 915.6,641.4 918.5,642.2 937.8,643.0 946.2,644.3 953.8,650.2 956.9,651.3 957.3,652.4 955.1,653.5 955.7,655.4 959.1,658.2 962.2,658.9 964.9,657.6 966.4,658.8 968.5,673.7 978.3,696.9 983.4,704.0 987.2,700.4 990.1,695.6 992.4,680.5 994.3,677.2 1006.3,666.5 1012.3,662.9 1017.0,657.3 1030.3,653.8 1032.0,654.7 1038.6,665.6 1040.3,670.1 1040.7,674.6 1042.1,676.6 1050.3,675.8 1052.0,677.8 1054.5,690.4 1054.3,703.4 1060.8,712.8 1063.8,721.3 1069.5,726.4 1073.2,727.3 1070.2,714.5 1058.0,701.1 1057.6,698.3 1060.2,686.1 1062.5,686.3 1062.8,687.7 1070.6,694.9 1075.3,697.3 1076.6,698.9 1076.6,701.1 1077.9,701.6 1080.4,700.2 1083.0,696.9 1088.5,693.4 1090.5,691.3 1091.0,688.7 1090.0,682.1 1080.3,668.1 1080.1,664.7 1081.6,662.0 1087.0,657.4 1089.8,656.6 1092.3,657.4 1093.6,658.6 1093.6,660.2 1094.5,660.1 1099.2,656.6 1115.8,650.4 1122.1,645.4 1131.5,633.2 1134.1,628.0 1133.0,621.6 1133.5,619.0 1127.1,606.1 1127.2,602.4 1134.9,595.8 1134.7,594.4 1131.8,593.3 1125.8,594.4 1123.2,593.5 1121.2,590.7 1121.2,588.7 1131.9,582.4 1136.4,581.5 1140.4,582.6 1144.9,584.8 1145.0,590.3 1146.2,593.0 1149.3,595.1 1150.6,597.3 1149.8,605.4 1151.1,606.7 1158.2,603.3 1159.3,600.4 1159.3,596.2 1153.6,585.5 1154.5,583.9 1159.3,579.8 1167.4,569.6 1170.2,568.8 1173.6,569.3 1177.5,567.4 1185.6,558.7 1195.3,544.9 1197.0,539.3 1199.5,521.2 1198.7,516.7 1195.6,513.2 1192.4,511.8 1189.0,512.4 1185.6,511.5 1182.2,509.2 1183.0,504.7 1199.6,485.0 1205.1,481.3 1216.2,479.4 1223.0,478.8 1236.7,480.4 1241.8,479.9 1245.2,477.6 1250.7,469.2 1254.1,465.8 1274.5,458.6 1277.1,459.2 1276.2,462.8 1274.1,466.4 1263.9,476.7 1255.8,486.8 1250.6,498.0 1249.8,505.2 1250.9,521.2 1252.1,526.7 1254.2,528.1 1262.6,518.9 1271.6,504.8 1273.3,500.9 1273.3,496.6 1271.6,491.9 1272.0,489.2 1274.5,488.6 1275.8,485.3 1275.8,479.4 1278.4,475.6 1283.5,473.9 1298.8,474.2 1314.1,461.2 1328.2,454.6 1328.6,450.1 1324.3,440.1 1326.0,440.9 1328.2,440.5 1330.7,438.9 1334.6,430.7 1338.0,429.7 1354.6,439.5 1358.0,439.5 1358.8,435.8 1361.2,432.8 1365.1,430.3 1365.6,427.3 1362.5,423.9 1358.4,422.0 1353.3,421.6 1348.2,418.7 1338.4,409.0 1328.2,400.5 1323.9,398.3 1318.0,396.4 1311.6,397.3 1304.8,401.2 1300.9,400.7 1300.1,395.9 1296.7,394.4 1290.7,396.4 1284.3,397.1 1266.5,397.1 1263.5,396.4 1262.6,394.4 1253.3,385.8 1246.9,383.5 1240.1,384.0 1234.9,382.4 1231.5,378.7 1219.6,371.1 1203.4,364.9 1197.9,364.9 1187.7,375.7 1182.2,377.9 1175.4,377.9 1170.2,379.8 1166.8,383.5 1163.4,384.8 1160.0,383.7 1158.3,379.1 1158.3,371.0 1155.8,364.0 1150.7,358.2 1144.7,356.7 1137.9,359.7 1131.5,360.6 1103.0,352.2 1098.7,349.4 1095.3,345.1 1096.6,338.6 1102.6,329.9 1104.3,323.1 1101.7,318.1 1097.0,314.9 1090.2,313.4 1085.1,310.4 1075.7,298.9 1071.4,300.1 1055.3,317.0 1049.3,320.7 1035.7,324.2 1015.3,334.4 1012.7,338.0 1014.4,341.3 1012.7,345.1 1007.6,349.4 1002.1,352.5 996.1,354.3 994.4,360.1 997.0,369.8 997.0,374.1 986.8,370.8 983.8,370.8 982.1,371.9 979.5,371.1 976.1,368.3 973.4,371.0 971.4,379.1 970.5,388.2 972.3,411.5 971.4,416.5 968.9,420.9 968.0,420.4 968.7,410.1 966.7,398.2 966.2,388.2 966.7,370.1 965.8,364.3 963.6,361.4 960.4,360.9 956.1,362.6 953.6,366.3 952.7,371.9 947.9,382.6 946.7,388.3 947.0,394.3 948.9,398.8 952.3,401.7 953.6,405.0 952.7,408.7 951.0,409.2 944.6,404.1 939.5,402.2 934.4,401.7 929.3,402.7 926.3,401.2 925.5,397.3 922.9,397.8 918.7,402.6 914.0,406.0 908.9,407.8 904.6,408.3 901.2,407.4 896.9,408.3 884.2,415.1 878.6,421.3 876.9,420.4 876.1,415.1 873.8,411.5 870.0,409.7 868.5,411.9 869.0,426.5 867.1,427.8 863.7,426.9 860.8,428.4 858.2,432.1 855.6,439.5 853.5,441.7 847.6,443.8 845.9,445.8 843.1,445.6 839.4,443.3 837.3,439.4 836.7,434.2 835.2,429.6 832.7,425.8 832.7,424.2 853.1,428.0 856.2,426.9 858.3,424.4 858.3,420.9 856.2,416.5 845.0,404.5 839.0,400.8 823.7,397.1 822.0,394.9 823.7,391.9 822.4,388.6 818.2,385.0 813.9,383.0 809.7,382.4 801.2,384.5 784.1,394.4 780.3,397.8 768.8,411.9 764.1,421.5 759.0,436.0 754.3,444.0 744.5,451.7 738.6,459.2 736.0,467.2 736.5,477.1 738.6,484.2 740.3,486.5 742.4,487.6 745.0,487.6 750.1,484.2 753.9,479.6 755.4,479.6 763.0,503.2 764.4,504.3 766.6,504.0 774.3,498.3 777.0,486.7 782.3,476.7 781.7,473.9 778.9,471.4 777.8,467.9 779.9,458.8 789.6,444.6 793.3,436.0 795.6,433.4 799.0,432.2 801.8,432.2 804.1,433.4 804.5,435.4 792.1,455.9 792.1,469.0 796.5,474.7 799.9,474.9 813.9,471.8 817.3,472.7 819.9,474.7 819.5,476.2 800.3,479.9 799.7,481.9 801.5,488.4 801.0,492.6 799.5,493.5 794.8,490.5 793.1,491.2 790.9,496.2 790.5,503.6 789.2,506.8 786.7,509.2 784.6,509.8 782.9,508.6 779.9,508.7 768.9,512.7 765.9,512.5 763.0,511.1 755.6,511.9 752.3,507.5 754.6,504.6 755.1,502.3 754.4,499.3 754.8,492.1 754.2,491.0 748.0,494.3 746.9,496.9 746.9,501.5 748.5,508.3 748.2,513.2 746.7,514.7 736.1,517.8 731.8,525.0 725.6,529.5 723.0,534.7 720.8,536.5 716.6,537.8 713.6,536.8 713.4,540.7 712.4,541.9 707.3,541.5 703.0,543.3 703.0,544.6 708.6,547.9 713.8,553.6 714.9,557.0 714.4,563.7 711.8,567.6 693.9,566.5 690.7,567.1 688.7,568.7 688.0,571.8 688.4,581.2 687.1,590.7 687.9,594.4 689.6,596.0 694.5,595.9 699.6,599.7 705.8,597.4 713.3,596.0 718.4,589.9 718.5,585.5ZM748.7,588.0 751.2,587.4 752.3,584.6 752.1,579.8 750.5,577.3 747.8,577.9 746.7,580.8 747.1,585.6ZM762.2,594.6 769.1,597.5 771.7,596.2 772.5,592.2 769.5,590.3 763.8,590.9 761.1,592.4ZM1128.0,652.6 1129.5,654.8 1131.3,654.6 1134.5,646.0 1134.0,643.3 1131.8,642.9 1130.0,643.9 1127.9,648.0ZM1089.5,668.2 1093.7,668.9 1095.6,667.6 1097.0,665.1 1096.6,663.1 1094.4,662.0 1089.9,664.1 1088.9,666.3ZM1132.2,685.2 1134.8,685.4 1139.9,687.8 1141.7,687.3 1141.2,685.0 1135.1,682.2 1134.1,680.3 1136.0,673.2 1135.8,669.5 1133.9,667.3 1130.6,667.5 1128.9,669.9 1128.4,674.5 1129.3,682.7ZM1134.9,697.5 1136.7,699.9 1138.8,700.4 1144.9,697.0 1146.4,694.5 1146.7,690.5 1144.7,689.4 1141.1,691.2 1135.5,690.8 1133.9,692.1ZM1127.0,693.7 1125.2,694.3 1118.8,702.6 1124.4,698.2 1126.6,695.6ZM1135.2,708.2 1138.5,707.5 1144.9,711.4 1147.2,711.6 1149.6,708.2 1149.5,701.6 1147.5,699.1 1144.5,698.9 1137.9,703.3 1135.3,706.4ZM991.7,711.0 993.5,712.1 995.8,711.3 997.9,707.4 995.5,702.2 991.6,698.9 990.2,700.5 990.2,704.5ZM1093.1,740.0 1096.0,742.5 1107.1,745.6 1110.5,745.7 1113.7,744.7 1115.5,742.4 1117.1,736.1 1123.0,729.6 1123.2,727.1 1120.7,721.9 1122.7,714.3 1121.5,711.7 1118.4,709.1 1115.0,709.6 1098.4,724.5 1091.5,726.3 1089.8,728.5 1090.2,732.1ZM1044.8,718.5 1068.9,747.5 1075.7,752.0 1078.6,752.1 1080.0,749.8 1080.4,745.4 1079.2,742.0 1074.5,736.8 1070.2,730.0 1053.5,715.7 1049.4,713.4 1045.2,712.7 1043.6,714.7ZM1137.4,735.1 1129.5,735.1 1129.5,733.9 1131.7,731.5 1135.3,730.4 1140.4,730.6 1143.4,729.6 1144.3,727.6 1136.0,728.6 1132.3,727.9 1129.5,728.5 1127.8,730.4 1124.0,741.9 1126.7,750.8 1129.1,749.9 1130.7,743.5 1132.2,743.8 1136.1,748.1 1137.3,747.6 1137.5,746.3 1134.4,739.9 1135.1,737.9 1137.6,736.0ZM1083.2,758.1 1105.9,761.7 1108.7,761.2 1109.3,759.4 1107.7,757.4 1101.0,755.0 1090.3,754.5 1084.2,752.5 1081.3,752.6 1078.5,754.2 1078.3,756.2ZM1110.6,761.8 1115.9,763.2 1130.1,763.2 1137.6,762.2 1138.3,760.8 1136.2,759.9 1112.3,759.5 1110.4,760.2ZM885.7,774.2 878.2,783.3 871.1,787.7 869.0,791.6 869.2,797.0 866.8,808.8 867.3,812.6 871.3,820.3 874.5,821.8 878.4,820.3 881.4,815.9 890.2,787.8 890.0,782.3 888.2,776.2ZM1543.0,333.6 1551.3,336.4 1559.0,332.1 1559.0,279.9 1545.7,287.8 1537.4,297.8 1529.1,312.4 1528.4,322.8 1535.3,329.1ZM1199.2,351.1 1206.1,350.1 1211.8,342.8 1217.9,338.7 1226.8,336.5 1228.5,332.5 1228.2,330.9 1220.4,326.7 1201.5,320.7 1192.0,322.7 1186.2,329.7 1185.2,336.2ZM1536.0,389.2 1543.3,384.7 1544.7,391.2 1548.9,398.2 1559.0,404.1 1559.0,354.6 1551.1,361.5 1550.6,358.6 1546.4,352.0 1539.5,347.2 1532.5,344.4 1525.6,343.7 1520.0,345.4 1515.9,349.6 1513.8,355.1 1513.8,362.1 1515.9,369.0 1524.9,382.2 1530.5,387.8ZM1327.0,384.7 1333.8,386.7 1337.6,385.7 1340.9,382.6 1339.8,379.3 1334.1,377.0 1330.3,377.1 1327.3,378.9 1325.7,382.4ZM1419.6,495.5 1422.2,496.1 1425.6,494.3 1427.3,491.9 1427.1,488.7 1424.3,487.9 1420.0,489.4 1418.3,492.0ZM1527.0,394.9 1516.8,392.2 1511.7,389.6 1506.5,389.6 1480.2,402.2 1475.0,401.7 1468.2,398.8 1459.7,393.7 1437.6,389.1 1415.6,381.4 1408.8,382.1 1397.6,390.9 1381.0,406.9 1376.6,415.6 1373.9,427.3 1373.9,435.0 1379.4,440.9 1389.6,442.7 1395.9,441.7 1397.2,443.2 1396.9,447.1 1395.0,450.0 1391.6,451.9 1383.4,452.9 1382.1,454.4 1380.1,461.7 1380.3,465.7 1381.5,469.2 1385.4,474.5 1391.6,476.2 1393.7,478.3 1394.6,481.9 1397.1,483.9 1407.4,484.4 1407.5,487.0 1402.3,496.2 1385.3,508.6 1385.1,509.5 1398.8,504.4 1406.9,498.8 1419.7,483.7 1426.1,473.7 1431.3,469.4 1429.4,472.8 1428.7,477.9 1429.8,480.3 1435.5,478.6 1444.4,470.9 1447.8,470.6 1454.6,474.0 1469.9,478.3 1478.9,485.2 1486.5,486.8 1489.5,488.9 1495.9,501.5 1508.8,520.6 1511.8,527.7 1514.2,530.4 1520.8,534.5 1525.6,539.5 1526.0,541.6 1524.2,542.8 1514.3,533.0 1510.0,530.8 1507.1,530.7 1507.2,532.5 1509.0,534.5 1518.1,541.7 1521.7,543.4 1520.9,545.9 1522.7,556.3 1521.8,579.6 1523.0,584.4 1533.5,604.6 1536.3,607.2 1542.6,610.3 1545.0,613.3 1554.2,632.1 1559.0,639.2 1559.0,631.4 1554.9,623.1 1554.6,619.8 1555.8,618.8 1559.0,620.5 1559.0,412.8 1550.8,406.7ZM1496.9,522.5 1498.0,522.1 1498.7,520.0 1497.8,514.8 1495.9,511.8 1492.8,511.4 1491.7,514.0 1493.0,517.9 1494.7,520.8ZM1203.1,553.6 1205.8,554.5 1207.7,551.7 1208.1,547.3 1207.3,541.4 1208.1,526.6 1206.0,516.3 1203.5,511.9 1201.6,514.0 1201.2,520.7 1201.7,544.6ZM1205.5,574.3 1209.2,573.3 1213.1,570.2 1214.0,567.0 1203.7,558.8 1201.0,560.0 1200.4,564.7 1195.6,570.9 1195.2,574.8 1197.1,576.0 1200.0,573.7 1202.4,573.2ZM1197.7,602.1 1201.8,588.1 1199.8,578.4 1198.3,578.4 1193.2,590.8 1191.5,593.0 1186.8,594.7 1183.0,599.7 1180.5,601.5 1170.2,604.3 1165.3,608.8 1177.1,607.0 1179.2,607.7 1180.0,609.8 1181.3,610.3 1185.1,606.9 1194.0,604.9ZM1162.5,620.3 1164.9,620.3 1169.1,614.3 1173.3,613.6 1175.7,612.0 1177.1,610.4 1177.4,608.3 1174.7,608.6 1168.4,611.4 1165.7,609.6 1162.6,610.1 1161.2,611.8ZM1413.9,664.5 1414.9,665.6 1416.1,665.3 1417.0,663.8 1416.6,662.6 1413.8,662.1ZM1154.3,734.0 1155.9,734.1 1157.7,729.9 1156.2,726.1 1154.1,725.1 1152.8,726.5ZM1154.8,743.5 1162.9,744.5 1164.3,743.4 1162.6,741.9 1159.8,741.6 1155.9,742.1ZM1224.6,751.7 1229.5,753.8 1234.6,752.1 1237.9,748.6 1237.4,746.7 1234.8,746.5 1225.2,749.9ZM1191.0,757.0 1189.7,759.2 1190.2,760.1 1192.8,759.6 1195.4,760.3 1200.9,763.0 1204.3,762.9 1210.7,758.6 1213.2,759.1 1221.3,765.2 1230.3,767.3 1224.1,761.1 1221.6,753.3 1217.5,751.4 1212.8,746.4 1209.4,744.5 1189.0,738.2 1179.4,742.6 1177.1,741.2 1174.1,734.4 1169.0,733.7 1165.0,735.1 1165.7,737.0 1167.6,738.2 1172.4,739.3 1169.8,741.0 1169.2,742.6 1170.6,744.6 1177.1,745.9 1187.3,750.0 1189.7,752.0 1191.0,754.6ZM1140.3,767.7 1148.4,764.8 1152.1,761.1 1150.2,760.7 1143.2,763.4 1140.4,765.8ZM1322.7,795.0 1326.5,795.3 1327.7,794.3 1327.5,792.6 1325.9,791.8 1323.6,792.2 1322.4,793.2ZM1277.2,802.7 1277.9,804.3 1282.5,808.2 1287.4,810.0 1287.3,808.8 1283.0,805.3 1279.5,802.9ZM1150.7,847.6 1164.7,845.2 1169.0,846.4 1176.6,852.4 1179.2,856.5 1182.2,856.7 1185.6,853.0 1187.7,853.2 1188.5,857.3 1194.9,865.7 1196.6,869.9 1200.0,872.9 1205.1,874.7 1209.0,874.9 1211.5,873.6 1214.0,873.9 1216.4,875.9 1218.9,875.5 1221.7,872.6 1228.1,869.3 1230.7,865.3 1232.4,858.6 1238.9,844.2 1240.7,826.6 1239.3,821.9 1229.8,810.7 1225.6,803.4 1217.0,795.6 1214.4,785.4 1209.0,779.6 1205.1,770.2 1203.7,770.2 1202.5,773.3 1199.1,790.3 1197.0,792.4 1190.7,790.5 1181.7,783.8 1181.3,780.7 1183.0,776.1 1182.6,773.7 1172.4,771.9 1169.0,772.1 1166.4,773.5 1161.8,780.8 1159.3,782.9 1151.1,780.8 1148.1,781.9 1137.4,791.2 1134.8,794.3 1133.5,797.9 1130.7,800.2 1117.9,803.4 1106.4,808.5 1107.3,815.8 1106.4,826.1 1111.5,842.2 1111.9,847.6 1111.1,852.7 1112.8,856.3 1117.0,858.3 1121.3,858.3 1125.5,856.3 1136.6,854.9 1141.7,853.2ZM1306.9,857.6 1312.9,868.7 1312.3,874.2 1310.9,876.5 1311.3,878.7 1313.6,880.5 1314.7,887.4 1317.6,887.4 1325.7,876.4 1327.0,870.5 1316.8,865.3 1308.9,857.8ZM1216.6,897.4 1219.1,897.5 1223.4,893.7 1224.7,886.7 1222.8,884.4 1216.5,884.6 1213.2,883.7 1211.6,885.4 1213.5,893.0ZM1301.7,890.4 1290.1,901.3 1286.1,907.3 1287.1,910.2 1293.0,912.5 1295.5,912.5 1300.2,909.3 1304.2,900.2 1308.9,895.8 1310.7,892.6 1312.7,887.4 1311.6,885.0 1308.7,883.1 1306.2,883.0Z" fill="#ffffff" filter="url(#b1)"/>
<path d="M880.4,559.1 880.1,567.4 887.7,592.2 891.8,595.9 895.4,596.3 899.3,595.2 901.9,591.8 902.6,585.9 901.9,580.0 899.0,572.6 900.2,559.8 899.3,554.9 896.4,551.7 889.7,550.9 885.2,552.8Z" fill="#d4e6ff" filter="url(#b1)"/>
<path d="M888.7,568.0 886.5,571.5 887.2,577.5 891.1,591.0 893.5,592.8 895.2,592.8 897.4,591.4 897.8,588.2 896.8,584.6 893.7,579.4 893.6,571.1 891.8,568.6Z" fill="#a9ccff" filter="url(#b1)"/>
<path d="M408.0,550.0 408.2,551.5 421.3,552.4 427.4,551.8 429.0,550.2 426.2,546.2 419.7,543.6 414.6,544.5Z" fill="#d4e6ff" filter="url(#b1)"/>
<path d="M420.8,571.0 421.9,574.1 423.2,574.1 425.4,570.8 427.5,559.6 426.3,556.7 424.9,557.1 422.6,560.6Z" fill="#d4e6ff" filter="url(#b1)"/>
<path d="M433.0,556.2 432.5,559.1 435.6,565.0 440.0,567.4 442.9,565.7 445.0,562.1 444.0,558.8 438.6,555.6Z" fill="#d4e6ff" filter="url(#b1)"/>
<path d="M437.8,574.4 436.5,575.7 438.2,576.3 447.0,573.6 456.6,568.9 458.5,566.1 456.9,565.3 451.6,566.2 450.0,567.8 449.3,570.3Z" fill="#d4e6ff" filter="url(#b1)"/>
<path d="M302.3,429.6 305.4,434.4 309.7,435.9 313.9,433.0 315.3,428.8 312.9,424.5 308.8,423.2 303.9,425.6ZM1528.4,429.6 1531.4,434.4 1535.7,435.9 1540.0,433.0 1541.3,428.8 1538.9,424.5 1534.9,423.2 1530.0,425.6Z" fill="#d4e6ff" filter="url(#b1)"/>
<path d="M322.5,467.7 323.1,468.7 326.8,468.8 331.8,466.9 339.5,461.5 342.6,456.6 339.3,456.0 335.9,456.5 329.7,459.2 324.4,464.1ZM1555.7,459.2 1548.9,466.2 1549.1,468.7 1552.8,468.8 1559.0,466.2 1559.0,457.5Z" fill="#d4e6ff" filter="url(#b1)"/>
<path d="M384.0,525.9 386.1,531.1 388.9,532.2 390.2,528.5 389.6,520.0 387.5,514.4 386.1,513.8 383.3,516.1Z" fill="#d4e6ff" filter="url(#b1)"/>
<path d="M829.2,731.3 827.6,732.6 827.5,736.2 829.5,740.0 831.9,740.3 834.3,738.8 835.0,734.1 833.6,731.7Z" fill="#d4e6ff" filter="url(#b1)"/>
<path d="M819.0,744.9 818.4,747.1 819.8,753.5 821.6,758.8 823.7,761.1 821.6,749.7Z" fill="#d4e6ff" filter="url(#b1)"/>
<path d="M835.3,765.1 835.9,778.2 837.3,780.2 837.5,768.7 836.5,765.6Z" fill="#d4e6ff" filter="url(#b1)"/>
<path d="M1077.4,525.0 1081.8,520.9 1087.4,513.3 1090.8,507.1 1090.8,504.2 1086.4,508.1 1075.7,523.2 1074.9,525.6Z" fill="#d4e6ff" filter="url(#b1)"/>
<path d="M828.5,467.0 823.9,474.5 825.0,475.5 829.5,473.2 830.7,470.6 830.3,467.2Z" fill="#d4e6ff" filter="url(#b1)"/>
<path d="M838.9,466.2 839.3,469.0 842.0,466.5 842.8,463.6 841.7,459.4Z" fill="#d4e6ff" filter="url(#b1)"/>
</svg><!-- map overlay controls -->
<div class="abs" style="left:58px;top:177px;width:33px;height:101px;background:#fff;border-radius:4px;box-shadow:0 0 0 2px rgba(0,0,0,.1)"></div>
<div class="abs" style="left:58px;top:210px;width:33px;height:1px;background:#ddd"></div>
<div class="abs" style="left:58px;top:244px;width:33px;height:1px;background:#ddd"></div>
<svg class="abs" style="left:67px;top:186px" width="15" height="15" viewBox="0 0 15 15" fill="none" stroke="#333" stroke-width="2.600"><path d="M7.500 1v13M1 7.500h13"/></svg>
<svg class="abs" style="left:67px;top:226px" width="15" height="4" viewBox="0 0 15 4"><rect x="1" y=".5" width="13" height="2.800" rx="1" fill="#333"/></svg>
<svg class="abs" style="left:69px;top:251px" width="11" height="22" viewBox="0 0 11 22"><path d="M5.500 1L10 10H1z" fill="#333"/><path d="M5.500 21L10 12H1z" fill="#ccc"/></svg>
<!-- scale -->
<div class="abs" style="left:58px;top:951px;width:65px;height:25px;background:rgba(255,255,255,.75);border:2px solid #333;border-top:none;font-size:12px;color:#333;padding:5px 0 0 8px;letter-spacing:-0.200px">1000 mi</div>
<!-- attribution -->
<div class="abs" style="left:964px;top:966px;width:555px;height:22px;background:rgba(255,255,255,.5);font-size:14px;color:#333;padding:3px 0 0 5px;white-space:nowrap;letter-spacing:-0.035px"><span id="attr">Icon Map Slicer | Natural Earth | © Tekantis © Protomaps © OpenStreetMap contributors</span></div>
<!-- visual header icons -->
<div class="abs" style="left:1444px;top:166px;width:24px;height:17px;background:#fff"></div>
<div class="abs" style="left:1473px;top:166px;width:23px;height:17px;background:#fff"></div>
<div class="abs" style="left:1501px;top:166px;width:18px;height:17px;background:#fff"></div>
<svg class="abs" style="left:1449px;top:167px" width="14" height="15" viewBox="0 0 14 15" fill="none" stroke="#605e5c" stroke-width="1.100"><path d="M1 1.500h12l-4.500 6v5.500l-3-1.500v-4z"/></svg>
<svg class="abs" style="left:1477px;top:167px" width="15" height="15" viewBox="0 0 15 15" fill="none" stroke="#605e5c" stroke-width="1.100"><path d="M6 2.500H1.500v11h11V9M1.500 8.500h5v5"/><path d="M9 1.500h4.500V6M13.500 1.500l-5 5"/></svg>
<div class="abs" style="left:1503px;top:161px;font-size:16px;font-weight:bold;color:#605e5c;letter-spacing:1px">···</div>
<!-- FILTERS PANE -->
<div id="filters"></div>
<svg class="abs" style="left:1536px;top:173px" width="14" height="13" viewBox="0 0 14 13" fill="none" stroke="#252423" stroke-width="1.300"><path d="M6.500 1l-5 5.500 5 5.500M12.500 1l-5 5.500 5 5.500"/></svg>
<svg class="abs" style="left:1536px;top:200px" width="14" height="14" viewBox="0 0 14 14" fill="none" stroke="#252423" stroke-width="1.200"><path d="M12.500 1.500v11l-4.500-3.500H3.500v-4h4.500z" transform="rotate(0)"/></svg>
<div class="abs" style="left:1534px;top:222px;width:18px;height:50px;writing-mode:vertical-rl;font-size:14.500px;font-weight:normal;-webkit-text-stroke:0.450px #252423;color:#252423;letter-spacing:0">Filters</div>
<!-- VISUALIZATIONS PANE -->
<div id="viz">
 <div class="ph" style="left:9px;top:9px">Visualizations</div>
 <svg class="abs" style="left:160px;top:12px" width="14" height="13" viewBox="0 0 14 13" fill="none" stroke="#252423" stroke-width="1.300"><path d="M1.500 1l5 5.500-5 5.500M7.500 1l5 5.500-5 5.500"/></svg>
 <div class="abs" style="left:9px;top:38px;font-size:12.500px;font-weight:normal;-webkit-text-stroke:0.400px #252423;letter-spacing:-0.150px">Format visual</div>
 <svg class="abs" style="left:11px;top:60px" width="28" height="26" viewBox="0 0 28 26" fill="none" stroke="#252423" stroke-width="1.200"><path d="M2 1.500h11"/><rect x="1.500" y="5.500" width="25" height="18" stroke-dasharray="2.500 1.500"/><path d="M1.500 11.500h25M1.500 17.500h25" stroke-dasharray="2.500 1.500"/></svg>
 <div class="abs" style="left:75px;top:56px;width:32px;height:32px;background:#c8c6c4;border-radius:2px"></div>
 <svg class="abs" style="left:78px;top:58px" width="28" height="28" viewBox="0 0 28 28" fill="none"><rect x="10" y="2" width="7" height="12" fill="#0f7c6c"/><path d="M2.500 22.500v-11h4v-6h4M2.500 22.500h4M6.500 11.500v11" stroke="#252423" stroke-width="1.200"/><path d="M8 25c0-3 2-5 4-5l2 2c0 2-2 4-6 3z" fill="#0f7c6c"/><path d="M13 20l10-12 2 1.500-9 13z" fill="#f3f2f1" stroke="#252423" stroke-width="1.200"/></svg>
 <svg class="abs" style="left:142px;top:58px" width="28" height="28" viewBox="0 0 28 28" fill="none" stroke="#252423" stroke-width="1.300"><circle cx="12" cy="12" r="9.500"/><path d="M19 19l7 7" stroke-width="2"/><path d="M3 14l5-5 4 3 6-5" stroke-width="1.100"/><path d="M7 20v-5M11 21v-6M15 20v-7M18.500 18v-7" stroke-width="1.100"/></svg>
 <svg class="abs" style="left:0;top:92px" width="181" height="10" viewBox="0 0 181 10" fill="none" stroke="#a19f9d" stroke-width="1"><path d="M0 8.500h84l7-7 7 7h83"/></svg>
 <div class="abs" style="left:9px;top:109px;width:164px;height:28px;border:1px solid #605e5c;border-radius:2px;background:#f3f2f1"></div>
 <svg class="abs" style="left:17px;top:116px" width="14" height="14" viewBox="0 0 14 14" fill="none" stroke="#605e5c" stroke-width="1.100"><circle cx="8.500" cy="5.500" r="4.500"/><path d="M5.300 8.700l-4.300 4.300"/></svg>
 <div class="abs" style="left:38px;top:115px;font-size:14px;color:#484644">Search</div>
 <div class="abs" style="left:13px;top:154px;font-size:14px;font-weight:normal;-webkit-text-stroke:0.450px #252423;letter-spacing:-0.150px">Visual</div>
 <div class="abs" style="left:13px;top:175px;width:37px;height:2px;background:#0f7c6c"></div>
 <div class="abs" style="left:67px;top:154px;font-size:14px;letter-spacing:-0.200px">General</div>
 <div class="abs" style="left:148px;top:153px;font-size:16px;letter-spacing:1px;font-weight:bold">···</div>
 <div class="card" style="top:191px"><svg width="8" height="12" viewBox="0 0 8 12" fill="none" stroke="#252423" stroke-width="1.300"><path d="M1.500 1l5 5-5 5"/></svg><span>Background Layer</span></div>
 <div class="card" style="top:232px"><svg width="8" height="12" viewBox="0 0 8 12" fill="none" stroke="#252423" stroke-width="1.300"><path d="M1.500 1l5 5-5 5"/></svg><span>Overlays / Reference Lay...</span></div>
 <div class="card" style="top:273px"><svg width="8" height="12" viewBox="0 0 8 12" fill="none" stroke="#252423" stroke-width="1.300"><path d="M1.500 1l5 5-5 5"/></svg><span>Data Layers</span></div>
 <div class="card" style="top:314px"><svg width="8" height="12" viewBox="0 0 8 12" fill="none" stroke="#252423" stroke-width="1.300"><path d="M1.500 1l5 5-5 5"/></svg><span>Labels</span></div>
 <div class="card" style="top:355px"><svg width="8" height="12" viewBox="0 0 8 12" fill="none" stroke="#252423" stroke-width="1.300"><path d="M1.500 1l5 5-5 5"/></svg><span>Selection</span></div>
 <div class="card" style="top:396px;border-bottom:none"><svg style="left:9px;top:15px" width="12" height="8" viewBox="0 0 12 8" fill="none" stroke="#252423" stroke-width="1.300"><path d="M1 1.500l5 5 5-5"/></svg><span>User Interface</span></div>
 <div class="abs" style="left:0;top:436px;width:181px;height:413px;background:#e6e4e2"></div>
 <div class="abs" style="left:175px;top:191px;width:6px;height:617px;background:#8a8886;border-radius:3px"></div>
 <div class="abs" style="left:9px;top:444px;width:164px;height:316px;background:#f3f2f1;border-radius:5px;box-shadow:0 1px 2px rgba(0,0,0,.18)"></div>
 <svg class="abs" style="left:17px;top:461px" width="12" height="8" viewBox="0 0 12 8" fill="none" stroke="#252423" stroke-width="1.300"><path d="M1 1.500l5 5 5-5"/></svg>
 <div class="abs" style="left:33px;top:458px;font-size:12.500px;font-weight:normal;-webkit-text-stroke:0.400px #252423;letter-spacing:-0.150px">Controls</div>
 <div class="row" style="left:17px;top:486px">Zoom</div><div class="tog on" style="left:133px;top:485px"><b>On</b><i></i></div>
 <div class="row" style="left:17px;top:514px">Pitch</div><div class="tog off" style="left:133px;top:513px"><i></i><b>Off</b></div>
 <div class="row" style="left:17px;top:542px">Bearing</div><div class="tog off" style="left:133px;top:541px"><i></i><b>Off</b></div>
 <div class="row" style="left:17px;top:570px">Clear Selections Bu...</div><div class="tog off" style="left:133px;top:569px"><i></i><b>Off</b></div>
 <div class="row" style="left:17px;top:598px">Display Zoom Level</div><div class="tog off" style="left:133px;top:597px"><i></i><b>Off</b></div>
 <div class="row" style="left:17px;top:626px">Metric Scale</div><div class="tog off" style="left:133px;top:625px"><i></i><b>Off</b></div>
 <div class="row" style="left:17px;top:654px">Imperial Scale</div><div class="tog on" style="left:133px;top:653px"><b>On</b><i></i></div>
 <div class="row" style="left:17px;top:682px">Nautical Miles Scale</div><div class="tog off" style="left:133px;top:681px"><i></i><b>Off</b></div>
 <div class="row" style="left:17px;top:710px">Additional Attribution</div>
 <div class="abs" style="left:17px;top:729px;width:148px;height:23px;background:#fff;border:1px solid #605e5c;border-radius:2px;font-size:11.500px;padding:5px 0 0 6px;letter-spacing:-0.100px">Natural Earth</div>
 <div class="abs" style="left:9px;top:768px;width:164px;height:40px;background:#f3f2f1;border-radius:5px;box-shadow:0 1px 2px rgba(0,0,0,.18)"></div>
 <svg class="abs" style="left:19px;top:782px" width="8" height="12" viewBox="0 0 8 12" fill="none" stroke="#252423" stroke-width="1.300"><path d="M1.500 1l5 5-5 5"/></svg>
 <div class="abs" style="left:33px;top:782px;font-size:12.500px;font-weight:normal;-webkit-text-stroke:0.400px #252423;letter-spacing:-0.150px">Tooltips</div>
 <svg class="abs" style="left:10px;top:822px" width="13" height="13" viewBox="0 0 13 13" fill="none" stroke="#a19f9d" stroke-width="1.100"><path d="M2 2v3.500h3.500"/><path d="M2.300 5.500a4.700 4.700 0 1 1 .5 4"/></svg>
 <div class="abs" style="left:29px;top:822px;font-size:12.500px;color:#a19f9d;letter-spacing:-0.100px">Reset to default</div>
 <svg class="abs" style="left:11px;top:863px" width="8" height="12" viewBox="0 0 8 12" fill="none" stroke="#252423" stroke-width="1.300"><path d="M1.500 1l5 5-5 5"/></svg>
 <div class="abs" style="left:25px;top:863px;font-size:12.500px;font-weight:normal;-webkit-text-stroke:0.400px #252423;letter-spacing:-0.150px">Map</div>
</div>
<!-- DATA PANE -->
<div id="data">
 <div class="ph" style="left:8px;top:9px">Data</div>
 <svg class="abs" style="left:159px;top:12px" width="14" height="13" viewBox="0 0 14 13" fill="none" stroke="#252423" stroke-width="1.300"><path d="M1.500 1l5 5.500-5 5.500M7.500 1l5 5.500-5 5.500"/></svg>
 <div class="abs" style="left:5px;top:45px;width:171px;height:23px;background:#fff;border:1px solid #c8c6c4;border-bottom:1px solid #8a8886;border-radius:4px"></div>
 <svg class="abs" style="left:16px;top:49px" width="14" height="14" viewBox="0 0 14 14" fill="none" stroke="#605e5c" stroke-width="1.100"><circle cx="5.500" cy="5.500" r="4.500"/><path d="M8.700 8.700l4.300 4.300"/></svg>
 <div class="abs" style="left:38px;top:48px;font-size:14px;color:#605e5c">Search</div>
 <svg class="abs" style="left:13px;top:85px" width="12" height="8" viewBox="0 0 12 8" fill="none" stroke="#605e5c" stroke-width="1.100"><path d="M1 1.500l5 5 5-5"/></svg>
 <svg class="abs" style="left:28px;top:82px" width="18" height="18" viewBox="0 0 18 18" fill="none"><rect x="1.500" y="1.500" width="12" height="11" rx="1.500" stroke="#252423" stroke-width="1.100"/><path d="M1.500 5.500h12M1.500 9h12M5.500 1.500v11M9.500 1.500v11" stroke="#252423" stroke-width="1"/><circle cx="12.500" cy="12.500" r="5" fill="#0f7c6c"/><path d="M10.300 12.500l1.600 1.600 2.800-3" stroke="#fff" stroke-width="1.100"/></svg>
 <div class="abs" style="left:47px;top:82px;font-size:12.500px;letter-spacing:-0.200px">Table</div>
 <div class="abs" style="left:44px;top:107px;width:12px;height:12px;background:#0f7c6c;border-radius:1px"></div>
 <svg class="abs" style="left:45px;top:108px" width="10" height="10" viewBox="0 0 10 10" fill="none" stroke="#fff" stroke-width="1.300"><path d="M1.500 5l2.500 2.500 4.500-5"/></svg>
 <div class="abs" style="left:63px;top:104px;font-size:14px;color:#252423">∑</div>
 <div class="abs" style="left:82px;top:106px;font-size:12.500px;letter-spacing:-0.200px">Column1</div>
</div>
<!-- PAGE BAR -->
<div id="pagebar"></div>
<svg class="abs" style="left:52px;top:1025px" width="22" height="18" viewBox="0 0 22 18" fill="none" stroke="#484644" stroke-width="1.200"><rect x="1.500" y="1.500" width="19" height="11.500" rx="1"/><path d="M11 13v3.500M7 16.500h8"/></svg>
<div class="abs" style="left:51px;top:1048px;width:24px;height:3px;background:#0f7c6c;border-radius:1.500px"></div>
<svg class="abs" style="left:100px;top:1024px" width="14" height="21" viewBox="0 0 14 21" fill="none" stroke="#484644" stroke-width="1.200"><rect x="1.500" y="1.500" width="11" height="18" rx="1.500"/><path d="M6 16.500h2"/></svg>
<svg class="abs" style="left:133px;top:1033px" width="6" height="9" viewBox="0 0 6 9"><path d="M5.500 0v9L.5 4.500z" fill="#c8c6c4"/></svg>
<svg class="abs" style="left:156px;top:1033px" width="6" height="9" viewBox="0 0 6 9"><path d="M.5 0v9l5-4.500z" fill="#c8c6c4"/></svg>
<div class="abs" style="left:168px;top:1020px;width:76px;height:35px;background:#fff;border-bottom:3px solid #0f7c6c;font-size:12.500px;font-weight:normal;-webkit-text-stroke:0.400px #252423;text-align:center;padding-top:10px;letter-spacing:-0.150px">Page 1</div>
<div class="abs" style="left:245px;top:1020px;width:39px;height:35px;background:#117865"></div>
<svg class="abs" style="left:258px;top:1030px" width="13" height="13" viewBox="0 0 13 13" fill="none" stroke="#fff" stroke-width="2.400"><path d="M6.500 1v11M1 6.500h11"/></svg>
<!-- STATUS BAR -->
<div id="status">
 <div class="abs" style="left:4px;top:6px;letter-spacing:-0.100px">Page 1 of 1</div>
 <div class="abs" style="left:1515px;top:5px">-</div>
 <div class="abs" style="left:1525px;top:12px;width:100px;height:1px;background:#605e5c"></div>
 <div class="abs" style="left:1575px;top:7px;width:4px;height:12px;background:#3b3a39"></div>
 <div class="abs" style="left:1630px;top:5px">+</div>
 <div class="abs" style="left:1652px;top:6px;letter-spacing:-0.100px">116%</div>
 <svg class="abs" style="left:1694px;top:7px" width="16" height="12" viewBox="0 0 16 12" fill="none" stroke="#3b3a39" stroke-width="1.100"><path d="M1 4V1h4M11 1h4v3M15 8v3h-4M5 11H1V8"/></svg>
 <div class="abs" style="left:1724px;top:6px;letter-spacing:-0.050px">Update available (click to download)</div>
</div>
<div class="abs" style="left:0;top:1079px;width:1920px;height:1px;background:#605e5c"></div>
</body>
</html>
